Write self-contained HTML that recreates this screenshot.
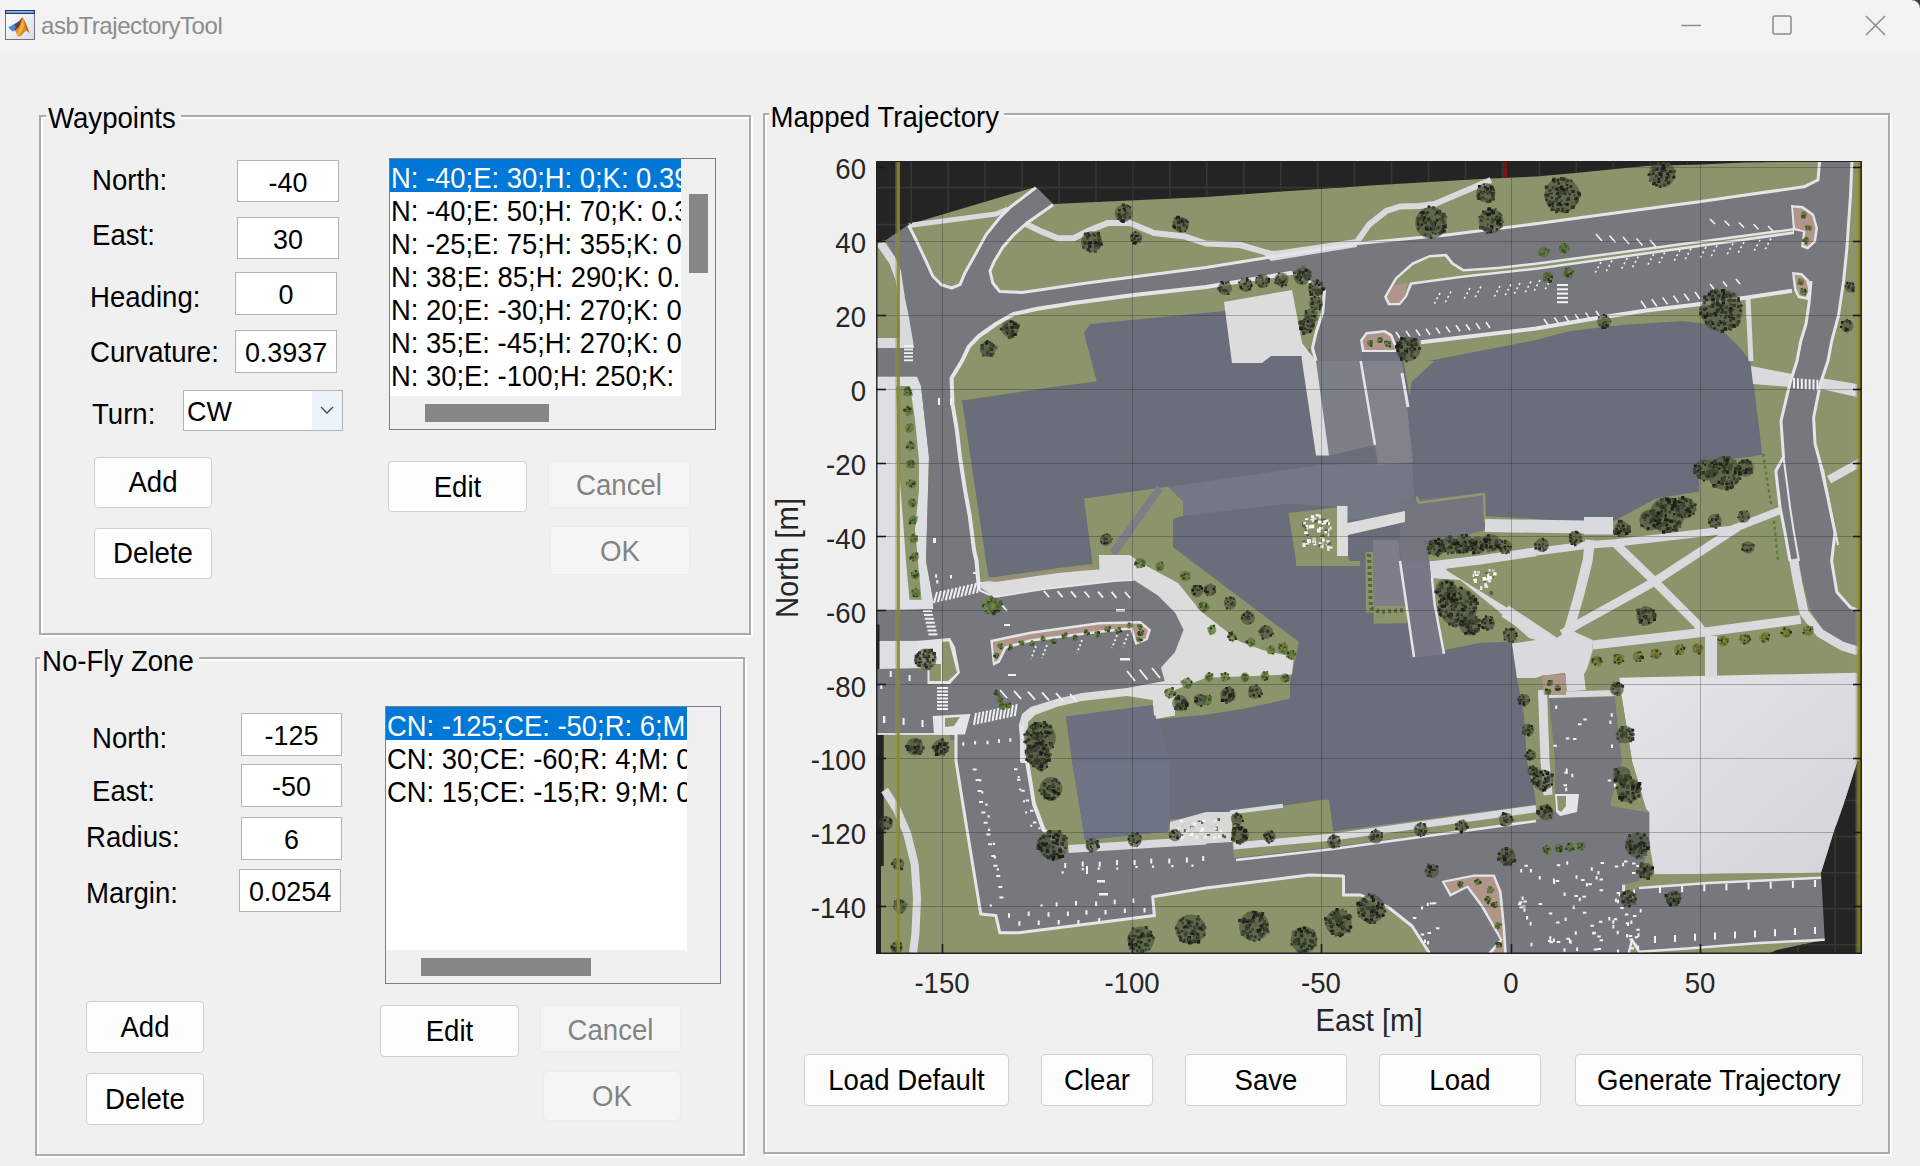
<!DOCTYPE html>
<html lang="en">
<head>
<meta charset="utf-8">
<title>asbTrajectoryTool</title>
<style>
*{box-sizing:border-box;margin:0;padding:0}
html,body{width:1920px;height:1166px;overflow:hidden;background:#f0f0f0;font-family:"Liberation Sans",Arial,sans-serif;color:#000}
.abs{position:absolute}
#titlebar{position:absolute;left:0;top:0;width:1920px;height:53px;background:#f3f3f3}
#title{position:absolute;left:41px;top:10px;font-size:24px;line-height:32px;color:#8c8c8c;letter-spacing:-0.42px}
.panel{position:absolute;border:2px solid #ababab;box-shadow:2px 2px 0 #fff, inset 2px 2px 0 #fff}
.ptitle{position:absolute;background:#f0f0f0;font-size:27.6px;line-height:30px;white-space:nowrap;padding:0 5px 0 2px}
.lbl{position:absolute;font-size:27.6px;line-height:30px;white-space:nowrap}
.edit{position:absolute;background:#fff;border:1px solid #b4b4b4;font-size:26.9px;text-align:center;white-space:nowrap;overflow:hidden}
.btn{position:absolute;background:#fdfdfd;border:1px solid #d0d0d0;border-radius:4px;font-size:27.6px;text-align:center;white-space:nowrap}
.btn.dis{background:#f5f5f5;border-color:#ececec;color:#838383}
.list{position:absolute;border:1px solid #7b7f8c;background:#f0f0f0;overflow:hidden}
.list .inner{position:absolute;left:0;top:0;background:#fff;overflow:hidden}
.list .row{height:33px;line-height:33px;font-size:27.4px;white-space:nowrap;padding-left:1px}
.list .row .t{position:relative;top:2px}
.list .row.sel{background:#0078d7;color:#fff}
.thumb{position:absolute;background:#868686}
.tick{position:absolute;font-size:27.6px;line-height:30px;color:#262626;white-space:nowrap}
.ytick{text-align:right;width:100px}
.xtick{text-align:center;width:120px}
.t{display:inline-block;transform:scaleY(1.06);transform-origin:50% 50%}
.lbl,.ptitle,.tick{transform:scaleY(1.06);transform-origin:0 50%}
</style>
</head>
<body>
<div id="titlebar">
  <svg class="abs" style="left:5px;top:10px" width="30" height="30" viewBox="0 0 30 30">
    <defs><linearGradient id="ig" x1="0" y1="0" x2="1" y2="1"><stop offset="0" stop-color="#ffffff"/><stop offset="1" stop-color="#dcdde0"/></linearGradient></defs>
    <rect x="0.5" y="0.5" width="29" height="29" fill="url(#ig)" stroke="#6f7488"/>
    <rect x="0" y="0" width="30" height="4" fill="#2b3566"/>
    <rect x="1.2" y="1" width="27.6" height="1.8" fill="#7fc0ee"/>
    <path d="M17.7 7.2 L21 14 L24.6 23 L21.5 20.5 L19 22.5 L16 26 L13 26.5 L11.5 23.5 L10 20.5 L14 17 Z" fill="#d98a2e"/>
    <path d="M18.5 8.5 L21 14 L24.6 23 L21.5 20.5 L20 14 Z" fill="#c0602a"/>
    <path d="M18 9 L19 16 L17 21 L13.5 25.7 L12 23 L15 18 L17 12 Z" fill="#f2b52a"/>
    <path d="M3.2 17.5 L15.6 10.2 L10.3 20 L7.5 21.5 Z" fill="#3d8fd6"/>
    <path d="M9 15 L15.6 10.2 L12 17.5 Z" fill="#2b5a8c"/>
    <path d="M16.5 8 L17.7 7.2 L14 17 L10 20.5 L9.2 20 L14.5 11 Z" fill="#8a2a1a"/>
  </svg>
  <div id="title">asbTrajectoryTool</div>
  <svg class="abs" style="left:1670px;top:8px" width="230" height="36" viewBox="0 0 230 36">
    <path d="M11.5 17.5 H31" stroke="#8b8b90" stroke-width="1.5" fill="none"/>
    <rect x="103" y="8" width="18" height="18" rx="2" fill="none" stroke="#8b8b90" stroke-width="1.5"/>
    <path d="M196 8 L215 27 M215 8 L196 27" stroke="#8b8b90" stroke-width="1.5" fill="none"/>
  </svg>
  <div class="abs" style="right:0;top:0;width:8px;height:8px;background:radial-gradient(circle at 0 100%, rgba(0,0,0,0) 7px, #3a3a55 8.5px)"></div>
</div>

<!-- WAYPOINTS PANEL -->
<div class="panel" style="left:39px;top:115px;width:712px;height:520px"></div>
<div class="ptitle" style="left:46px;top:103px">Waypoints</div>
<div class="lbl" style="left:92px;top:165px">North:</div>
<div class="lbl" style="left:92px;top:220px">East:</div>
<div class="lbl" style="left:90px;top:282px">Heading:</div>
<div class="lbl" style="left:90px;top:337px">Curvature:</div>
<div class="lbl" style="left:92px;top:399px">Turn:</div>
<div class="edit" style="left:237px;top:160px;width:102px;height:42px;line-height:42px"><span class="t">-40</span></div>
<div class="edit" style="left:237px;top:217px;width:102px;height:42px;line-height:42px"><span class="t">30</span></div>
<div class="edit" style="left:235px;top:272px;width:102px;height:43px;line-height:43px"><span class="t">0</span></div>
<div class="edit" style="left:235px;top:330px;width:102px;height:43px;line-height:43px"><span class="t">0.3937</span></div>
<div class="edit" style="left:183px;top:390px;width:160px;height:41px;line-height:41px;text-align:left;padding-left:3px"><span class="t">CW</span>
  <div class="abs" style="right:0;top:0;width:30px;height:39px;background:#edf3fa"></div>
  <svg class="abs" style="right:8px;top:15px" width="14" height="9" viewBox="0 0 14 9"><path d="M1 1 L7 7 L13 1" fill="none" stroke="#444" stroke-width="1.3"/></svg>
</div>
<div class="list" style="left:389px;top:158px;width:327px;height:272px">
  <div class="inner" style="width:291px;height:237px">
    <div class="row sel"><span class="t">N: -40;E: 30;H: 0;K: 0.3937;T: CW</span></div>
    <div class="row"><span class="t">N: -40;E: 50;H: 70;K: 0.3937;T: CW</span></div>
    <div class="row"><span class="t">N: -25;E: 75;H: 355;K: 0.3937;T: CW</span></div>
    <div class="row"><span class="t">N: 38;E: 85;H: 290;K: 0.3937;T: CW</span></div>
    <div class="row"><span class="t">N: 20;E: -30;H: 270;K: 0.3937;T: CW</span></div>
    <div class="row"><span class="t">N: 35;E: -45;H: 270;K: 0.3937;T: CW</span></div>
    <div class="row"><span class="t">N: 30;E: -100;H: 250;K: 0.3937;T: CW</span></div>
  </div>
  <div class="thumb" style="left:299px;top:35px;width:19px;height:79px"></div>
  <div class="thumb" style="left:35px;top:245px;width:124px;height:18px"></div>
</div>
<div class="btn" style="left:94px;top:457px;width:118px;height:51px;line-height:48px"><span class="t">Add</span></div>
<div class="btn" style="left:94px;top:528px;width:118px;height:51px;line-height:48px"><span class="t">Delete</span></div>
<div class="btn" style="left:388px;top:461px;width:139px;height:51px;line-height:49px"><span class="t">Edit</span></div>
<div class="btn dis" style="left:548px;top:461px;width:142px;height:47px;line-height:46px"><span class="t">Cancel</span></div>
<div class="btn dis" style="left:550px;top:526px;width:140px;height:49px;line-height:48px"><span class="t">OK</span></div>

<!-- NO-FLY ZONE PANEL -->
<div class="panel" style="left:35px;top:657px;width:710px;height:499px"></div>
<div class="ptitle" style="left:40px;top:646px">No-Fly Zone</div>
<div class="lbl" style="left:92px;top:723px">North:</div>
<div class="lbl" style="left:92px;top:776px">East:</div>
<div class="lbl" style="left:86px;top:822px">Radius:</div>
<div class="lbl" style="left:86px;top:878px">Margin:</div>
<div class="edit" style="left:241px;top:713px;width:101px;height:43px;line-height:43px"><span class="t">-125</span></div>
<div class="edit" style="left:241px;top:764px;width:101px;height:43px;line-height:43px"><span class="t">-50</span></div>
<div class="edit" style="left:241px;top:817px;width:101px;height:43px;line-height:43px"><span class="t">6</span></div>
<div class="edit" style="left:239px;top:869px;width:102px;height:43px;line-height:43px"><span class="t">0.0254</span></div>
<div class="list" style="left:385px;top:706px;width:336px;height:278px">
  <div class="inner" style="width:301px;height:243px">
    <div class="row sel"><span class="t">CN: -125;CE: -50;R: 6;M: 0.0254</span></div>
    <div class="row"><span class="t">CN: 30;CE: -60;R: 4;M: 0.0254</span></div>
    <div class="row"><span class="t">CN: 15;CE: -15;R: 9;M: 0.0254</span></div>
  </div>
  <div class="thumb" style="left:35px;top:251px;width:170px;height:18px"></div>
</div>
<div class="btn" style="left:86px;top:1001px;width:118px;height:52px;line-height:49px"><span class="t">Add</span></div>
<div class="btn" style="left:86px;top:1073px;width:118px;height:52px;line-height:49px"><span class="t">Delete</span></div>
<div class="btn" style="left:380px;top:1005px;width:139px;height:52px;line-height:49px"><span class="t">Edit</span></div>
<div class="btn dis" style="left:540px;top:1005px;width:141px;height:47px;line-height:47px"><span class="t">Cancel</span></div>
<div class="btn dis" style="left:543px;top:1071px;width:138px;height:50px;line-height:48px"><span class="t">OK</span></div>

<!-- MAPPED TRAJECTORY PANEL -->
<div class="panel" style="left:763px;top:113px;width:1127px;height:1041px"></div>
<div class="ptitle" style="left:768.5px;top:102px">Mapped Trajectory</div>

<!-- MAP -->
<svg id="map" class="abs" style="left:876px;top:161px" width="986" height="793" viewBox="876 161 986 793">
  <rect x="876" y="161" width="987" height="793" fill="#8c946c"/>
  <!--MAPSTART-->
<defs><linearGradient id="wg" x1="0" y1="0" x2="1" y2="1"><stop offset="0" stop-color="#e4e5e9"/><stop offset="1" stop-color="#d3d4d9"/></linearGradient><linearGradient id="og" x1="0" y1="0" x2="1" y2="0"><stop offset="0" stop-color="#9a9f50" stop-opacity="0"/><stop offset=".55" stop-color="#8e8e2c" stop-opacity=".75"/><stop offset="1" stop-color="#6c6c10"/></linearGradient><clipPath id="darkclip"><polygon points="876,161 1862,161 1862,162 1819.6,161.5 1744,162.4 1701,164.4 1646,166 1610,169.6 1575.5,173 1536,176.5 1481,179 1377.8,185 1274.7,192 1206,197 1053,204 1035.8,186.8 908.7,224.6 886,240 876,241.7"/><polygon points="1857.4,761 1843.7,804 1833.4,833 1821,872.7 1824.7,939.7 1776.6,950 1768,954 1863,954 1863,761"/></clipPath></defs>
<polygon points="1084.0,333.0 1090.0,324.0 1224.0,311.0 1310.0,303.0 1310.0,361.0 1428.0,361.0 1536.0,340.0 1570.0,331.0 1622.0,325.0 1682.0,321.0 1708.0,324.0 1725.0,332.8 1742.0,350.0 1750.0,361.0 1754.0,386.8 1759.4,429.7 1762.0,454.6 1749.0,457.0 1699.0,462.4 1699.0,491.6 1656.0,498.5 1613.0,521.6 1584.0,524.0 1556.6,522.5 1536.0,519.0 1485.0,516.0 1485.0,533.0 1429.0,548.0 1429.4,561.0 1444.0,650.0 1481.0,642.6 1512.0,641.8 1517.0,678.0 1524.0,715.6 1527.0,761.0 1534.0,790.0 1536.0,804.8 1333.0,831.4 1329.0,799.7 1323.0,799.7 1283.0,805.7 1230.0,812.5 1206.0,817.7 1170.0,819.4 1168.0,831.4 1084.8,840.0 1080.5,812.5 1072.0,761.0 1066.0,716.5 1154.5,705.0 1158.0,719.0 1206.0,714.8 1243.8,708.8 1290.0,698.5 1290.0,681.0 1295.0,660.7 1298.8,641.8 1206.0,572.0 1173.0,547.0 1173.0,519.0 1183.6,515.6 1183.6,502.0 1168.0,486.4 1151.0,489.0 1084.0,498.5 1090.8,550.0 1092.5,564.0 1058.0,568.0 996.0,577.0 988.6,577.0 986.0,561.0 962.0,400.5 979.0,398.0 1054.7,386.8 1096.8,381.6" fill="#6a6e7b"/>
<polygon points="1072.0,761.0 1170.0,761.0 1170.0,819.4 1168.0,831.4 1084.8,840.0 1080.5,812.5" fill="#6e7385"/>
<polygon points="1066.0,716.5 1154.5,705.0 1158.0,719.0 1170.0,761.0 1072.0,761.0" fill="#6c7080"/>
<polygon points="1170.0,486.7 1319.0,465.0 1412.0,462.0 1414.4,498.0 1401.5,501.0 1400.0,516.0 1349.0,520.0 1340.0,507.0 1288.0,503.5 1183.0,516.0 1183.6,502.0" fill="#747884"/>
<polygon points="1401.0,500.0 1484.0,494.0 1485.0,540.0 1424.0,540.0 1444.0,652.7 1414.4,657.8 1399.0,544.6 1401.0,520.0" fill="#73767f"/>
<polygon points="1288.5,513.0 1340.0,507.0 1349.0,561.0 1360.0,561.0 1360.0,566.0 1296.0,566.0 1296.0,561.0" fill="#8c946c"/>
<polygon points="1365.5,552.0 1373.0,552.0 1374.0,605.7 1407.0,605.7 1407.0,623.0 1373.6,623.7 1373.6,612.5 1366.0,612.5" fill="#8c946c"/>
<polygon points="1429.4,561.0 1536.0,561.0 1536.0,641.8 1512.0,641.8 1481.0,642.6 1444.0,650.0" fill="#8c946c"/>
<polygon points="1426.0,545.0 1485.0,530.0 1536.0,530.0 1536.0,561.0 1429.0,561.0" fill="#8c946c"/>
<polyline points="1416.5,496.7 1419.0,502.7 1484.0,494.0 1485.0,522.5" fill="none" stroke="#8f9a6a" stroke-width="2.5" stroke-linejoin="round"/>
<polyline points="1160.0,488.0 1113.0,553.4" fill="none" stroke="#7c7f88" stroke-width="8" stroke-linejoin="round"/>
<polygon points="1403.6,361.0 1434.5,361.0 1412.0,381.6 1409.6,395.4 1406.0,374.7" fill="#8c946c"/>
<polygon points="976.0,583.0 996.0,580.0 1058.0,571.0 1099.4,569.6 1099.0,555.0 1130.0,555.0 1139.0,562.0 1178.0,583.0 1201.0,611.5 1240.0,641.8 1262.7,650.0 1293.7,657.0 1292.0,674.4 1206.0,677.8 1175.0,690.0 1175.0,715.6 1154.0,715.6 1152.7,700.0 1127.0,696.0 1082.0,701.0 1058.0,706.5 1035.0,715.0 1028.0,722.0 1026.0,761.0 1018.0,761.0 1015.0,726.0 976.0,726.0" fill="#dddcdc"/>
<polygon points="876.0,376.5 917.0,376.5 921.0,386.0 929.0,457.0 926.0,561.0 933.0,599.0 933.0,609.0 876.0,610.0" fill="#dedfe3"/>
<polygon points="896.0,386.0 910.0,386.0 915.0,420.0 919.0,460.0 919.0,490.0 915.0,530.0 918.0,561.0 921.5,599.7 909.5,599.7 906.0,561.0 903.0,520.0 899.0,470.0" fill="#8c946c"/>
<polygon points="876.0,641.0 917.0,641.0 917.0,668.0 876.0,669.0" fill="#dedfe3"/>
<polygon points="908.7,224.6 886.0,240.0 895.0,257.0 901.0,271.0 905.0,298.5 908.6,315.6 913.0,341.4 915.0,361.0 917.0,376.5 921.0,386.0 929.0,457.0 926.0,561.0 933.0,599.0 933.0,611.0 981.0,611.0 981.0,588.0 976.5,561.0 974.0,550.0 969.7,515.6 965.0,490.0 960.0,457.0 956.8,429.7 952.5,404.0 951.6,378.0 962.0,361.0 968.8,346.6 979.0,336.0 996.0,324.0 1013.5,314.0 1037.5,308.8 1070.0,303.6 1133.7,295.0 1206.0,287.0 1206.0,267.5 1087.0,283.0 1022.0,292.4 999.7,291.6 992.8,283.0 990.0,271.0 994.6,260.7 1003.0,246.9 1013.5,234.9 1027.0,222.9 1053.0,204.8 1035.8,186.8 1010.0,207.4 999.7,217.7 986.0,234.9 975.7,253.8 965.0,272.7 960.0,284.7 951.6,288.0 941.3,284.7 932.7,276.0 925.8,260.7 917.0,241.8" fill="#76787e"/>
<polygon points="876.0,348.0 917.0,348.0 917.0,376.5 876.0,376.5" fill="#76787e"/>
<polygon points="876.0,611.0 935.0,609.0 935.0,640.0 876.0,641.0" fill="#76787e"/>
<polygon points="876.0,669.0 960.0,669.0 960.0,733.0 876.0,733.0" fill="#76787e"/>
<polygon points="933.0,609.0 981.0,588.0 994.6,597.0 1044.0,589.0 1116.6,580.8 1133.8,580.0 1157.9,595.4 1175.0,612.5 1183.6,629.7 1175.0,652.0 1161.0,667.5 1164.7,681.0 1127.0,688.0 1082.0,693.0 1058.0,698.5 1030.7,707.0 1022.0,714.0 1018.6,726.0 1020.0,740.0 950.0,740.0 950.0,684.0 960.0,672.7 955.0,647.0 950.0,638.0 933.0,640.0" fill="#76787e"/>
<polygon points="956.0,733.0 1018.6,726.0 1022.0,761.0 1027.0,761.0 1034.0,804.0 1043.6,829.7 1065.0,852.0 1206.0,841.8 1206.0,888.0 1152.7,896.7 1154.4,915.6 1099.4,922.5 1018.7,932.8 999.8,932.8 996.0,915.6 980.8,914.0 967.0,829.7 956.0,761.0" fill="#76787e"/>
<polygon points="1206.0,842.0 1232.0,842.0 1234.0,858.0 1333.0,847.0 1536.0,820.0 1555.0,812.0 1555.0,761.0 1549.0,698.5 1615.0,696.7 1618.5,733.0 1622.0,761.0 1610.0,805.7 1649.4,812.5 1649.4,843.5 1639.0,881.0 1639.0,888.0 1708.0,883.0 1821.0,877.8 1824.7,939.7 1759.0,943.0 1690.6,948.3 1639.0,951.7 1632.0,939.7 1628.8,953.0 1429.4,953.0 1412.0,926.0 1388.0,907.0 1360.7,895.0 1343.5,895.0 1343.5,876.0 1309.0,875.0 1206.0,889.0" fill="#76787e"/>
<polygon points="1206.0,267.5 1271.0,257.0 1357.0,243.5 1446.6,234.9 1536.0,223.7 1618.5,212.5 1701.0,201.4 1742.0,195.4 1804.0,186.8 1818.0,180.0 1819.6,161.0 1852.0,161.0 1850.5,195.4 1847.0,247.0 1843.6,281.0 1838.5,315.6 1831.6,341.4 1828.0,361.0 1820.5,383.0 1813.6,417.7 1815.0,443.5 1819.6,460.6 1828.0,498.5 1835.0,532.8 1831.6,561.0 1836.8,592.0 1850.5,607.4 1857.4,610.0 1857.4,648.0 1842.0,644.0 1822.0,630.0 1810.0,609.0 1803.0,583.3 1799.0,561.0 1790.0,561.0 1785.0,532.8 1780.0,507.0 1775.8,471.0 1783.5,457.0 1781.0,421.0 1790.0,383.0 1797.0,361.0 1800.7,341.4 1806.0,324.0 1809.0,303.6 1811.0,281.0 1792.0,290.7 1747.4,297.6 1690.7,305.3 1646.0,310.5 1591.0,319.0 1536.0,328.5 1420.8,342.3 1400.0,345.0 1402.0,361.0 1413.0,462.0 1378.0,465.0 1375.0,445.0 1329.0,455.5 1316.0,361.0 1312.5,348.0 1316.0,332.8 1322.8,312.0 1324.6,289.9 1292.0,272.7 1206.0,287.0" fill="#76787e"/>
<polygon points="1316.0,361.0 1361.0,361.0 1375.0,445.0 1329.0,455.5" fill="#7c7f87"/>
<polygon points="1361.0,361.0 1402.0,361.0 1413.0,462.0 1378.0,465.0 1375.0,445.0" fill="#80838c"/>
<polygon points="1375.0,561.0 1429.4,561.0 1444.0,654.6 1414.0,657.0 1400.0,561.0" fill="#767985"/>
<polygon points="1373.0,540.0 1398.0,540.0 1406.0,605.7 1374.0,605.7" fill="#7c7f89"/>
<polyline points="1400.0,561.0 1414.0,657.0" fill="none" stroke="#e4e5e8" stroke-width="2.5" stroke-linejoin="round"/>
<polyline points="1432.0,578.0 1434.6,604.0 1444.0,653.8" fill="none" stroke="#e4e5e8" stroke-width="2.5" stroke-linejoin="round"/>
<polyline points="1360.7,361.0 1375.0,445.0" fill="none" stroke="#e4e5e8" stroke-width="2.5" stroke-linejoin="round"/>
<polyline points="1402.0,373.0 1408.0,407.0" fill="none" stroke="#e4e5e8" stroke-width="3" stroke-linejoin="round"/>
<polygon points="1364.0,351.7 1398.0,351.7 1402.0,361.0 1361.0,361.0" fill="#6f7380"/>
<polygon points="876.0,161.0 1862.0,161.0 1862.0,162.0 1819.6,161.5 1744.0,162.4 1701.0,164.4 1646.0,166.0 1610.0,169.6 1575.5,173.0 1536.0,176.5 1481.0,179.0 1377.8,185.0 1274.7,192.0 1206.0,197.0 1053.0,204.0 1035.8,186.8 908.7,224.6 886.0,240.0 876.0,241.7" fill="#242424"/>
<polygon points="1857.4,761.0 1843.7,804.0 1833.4,833.0 1821.0,872.7 1824.7,939.7 1776.6,950.0 1768.0,954.0 1863.0,954.0 1863.0,761.0" fill="#242424"/>
<rect x="876.0" y="624.6" width="3.5" height="44.5" fill="#242424"/>
<rect x="876.0" y="735.0" width="7.7" height="131.0" fill="#242424"/>
<rect x="876.0" y="866.0" width="5.0" height="88.0" fill="#242424"/>
<rect x="1503.0" y="161.0" width="4.0" height="17.0" fill="#7a1515"/>
<polygon points="1290.0,282.0 1322.0,290.0 1322.8,312.0 1316.0,332.8 1312.5,348.0 1306.0,350.0 1302.0,343.0 1297.0,315.6 1292.0,290.0" fill="#8c946c"/>
<polygon points="1224.0,302.0 1292.0,289.9 1297.0,315.6 1302.0,343.0 1302.0,356.0 1271.0,356.0 1262.0,363.0 1232.0,363.0" fill="#dcdcdc"/>
<polygon points="1300.0,335.0 1302.0,343.0 1316.0,361.0 1329.0,455.5 1316.0,455.5 1302.0,361.0" fill="#dcdcdc"/>
<polygon points="1619.4,677.8 1857.4,672.7 1857.4,761.0 1843.7,804.0 1833.4,833.0 1821.0,872.7 1654.6,874.4 1649.4,843.5 1649.4,812.5 1646.0,809.0 1632.0,761.0 1622.0,698.5" fill="url(#wg)"/>
<polygon points="1615.0,696.7 1622.0,698.5 1632.0,761.0 1646.0,809.0 1649.4,812.5 1610.0,805.7 1622.0,761.0 1618.5,733.0" fill="#8c946c"/>
<polygon points="878.0,243.5 884.6,241.8 895.0,257.0 901.0,271.0 905.0,298.5 908.6,315.6 913.0,341.4 914.0,348.0 876.0,348.0 876.0,338.0 900.0,338.0 900.0,332.8 898.0,298.5 895.8,281.0 889.7,264.0 878.0,247.0" fill="#d9dade"/>
<polyline points="908.7,225.4 996.0,214.0 1008.0,209.0" fill="none" stroke="#d9dade" stroke-width="5" stroke-linejoin="round"/>
<polyline points="1025.5,223.7 1041.0,231.4 1058.0,238.3 1073.6,238.3 1090.8,229.7 1108.0,222.9 1130.0,222.9 1154.0,233.0 1185.0,236.6 1206.0,243.5 1240.0,245.0 1271.0,253.8 1290.0,254.0" fill="none" stroke="#d9dade" stroke-width="6" stroke-linejoin="round"/>
<polygon points="1262.0,253.0 1357.0,239.0 1357.0,247.0 1271.0,261.0" fill="#d9dade"/>
<polyline points="1357.0,241.8 1369.0,224.6 1386.5,210.8 1400.0,206.5 1419.0,206.0 1434.6,204.0 1491.0,180.0" fill="none" stroke="#d9dade" stroke-width="6" stroke-linejoin="round"/>
<polygon points="1384.0,296.7 1395.0,277.8 1412.0,262.4 1429.4,255.0 1446.6,253.8 1453.5,262.4 1463.8,269.0 1498.0,266.7 1536.0,262.4 1794.0,228.0 1794.0,234.0 1536.0,270.0 1463.8,277.8 1412.0,284.7 1407.0,296.7 1400.0,305.3 1388.0,305.3" fill="#e4e5e8"/>
<polygon points="1387.0,296.7 1397.0,279.0 1413.0,265.0 1429.4,257.5 1445.0,256.5 1451.5,264.5 1463.0,271.5 1498.0,269.2 1536.0,264.9 1793.0,230.5 1793.0,231.5 1536.0,267.5 1463.8,275.3 1410.0,282.5 1405.0,295.5 1399.0,303.0 1390.0,303.0" fill="#8c946c"/>
<polygon points="1387.0,296.7 1393.0,286.0 1407.0,283.0 1405.0,295.5 1399.0,303.0 1390.0,303.0" fill="#b0968a"/>
<polygon points="1360.0,340.0 1366.0,332.0 1385.0,330.0 1392.0,334.0 1397.0,346.0 1397.0,352.0 1362.0,352.0" fill="#e4e5e8"/>
<polygon points="1362.5,341.0 1367.0,334.5 1384.0,332.5 1390.0,336.0 1394.5,347.0 1394.5,350.0 1364.5,350.0" fill="#b0968a"/>
<polygon points="1791.0,205.0 1803.0,206.0 1814.0,214.0 1818.0,228.0 1816.0,242.0 1808.0,249.5 1801.0,247.0 1803.0,232.0 1793.0,230.0" fill="#e4e5e8"/>
<polygon points="1793.0,207.5 1802.0,208.5 1812.0,215.5 1815.5,228.0 1813.5,241.0 1807.5,246.5 1803.5,245.0 1805.5,231.0 1795.0,228.0" fill="#b0968a"/>
<polygon points="1792.0,272.0 1802.0,273.0 1809.0,280.0 1811.0,291.0 1808.0,300.0 1798.0,298.0 1794.0,290.0" fill="#e4e5e8"/>
<polygon points="1794.5,274.5 1801.0,275.5 1806.5,281.0 1808.5,291.0 1806.0,297.0 1799.5,295.5 1796.5,289.0" fill="#b0968a"/>
<polyline points="1748.0,298.5 1751.0,361.0" fill="none" stroke="#d9dade" stroke-width="5" stroke-linejoin="round"/>
<polygon points="1751.0,366.0 1792.0,374.0 1791.0,387.0 1753.0,384.0" fill="#d9dade"/>
<polygon points="1821.0,378.0 1857.0,384.0 1857.0,397.0 1821.0,389.0" fill="#d9dade"/>
<polyline points="1861.0,462.0 1829.0,479.6" fill="none" stroke="#d9dade" stroke-width="8.5" stroke-linejoin="round"/>
<rect x="1793.0" y="378.0" width="2.0" height="10.5" fill="#f0f0f2"/>
<rect x="1796.9" y="378.3" width="2.0" height="10.5" fill="#f0f0f2"/>
<rect x="1800.8" y="378.6" width="2.0" height="10.5" fill="#f0f0f2"/>
<rect x="1804.7" y="378.9" width="2.0" height="10.5" fill="#f0f0f2"/>
<rect x="1808.6" y="379.2" width="2.0" height="10.5" fill="#f0f0f2"/>
<rect x="1812.5" y="379.5" width="2.0" height="10.5" fill="#f0f0f2"/>
<rect x="1816.4" y="379.8" width="2.0" height="10.5" fill="#f0f0f2"/>
<polyline points="1485.0,525.5 1613.0,527.5" fill="none" stroke="#d9dade" stroke-width="13" stroke-linejoin="round"/>
<polygon points="1584.0,517.0 1613.0,517.0 1613.0,534.5 1584.0,534.5" fill="#d9dade"/>
<polyline points="1536.0,551.7 1587.6,545.0 1615.0,543.0 1697.0,533.5 1731.5,529.4 1780.0,510.5" fill="none" stroke="#d9dade" stroke-width="7.5" stroke-linejoin="round"/>
<polyline points="1590.0,540.0 1587.6,561.0 1579.0,595.4 1568.0,633.0" fill="none" stroke="#d9dade" stroke-width="10" stroke-linejoin="round"/>
<polyline points="1614.9,543.0 1654.7,581.5 1697.2,624.0 1702.0,631.0" fill="none" stroke="#d9dade" stroke-width="8.5" stroke-linejoin="round"/>
<polyline points="1738.0,527.0 1690.6,558.0 1654.7,581.5 1580.6,622.7 1562.0,634.0" fill="none" stroke="#d9dade" stroke-width="8.5" stroke-linejoin="round"/>
<polyline points="1592.7,645.0 1697.6,633.0 1800.7,619.4" fill="none" stroke="#d9dade" stroke-width="9" stroke-linejoin="round"/>
<polyline points="1711.0,636.0 1711.0,678.0" fill="none" stroke="#d9dade" stroke-width="12" stroke-linejoin="round"/>
<polygon points="1536.0,633.0 1556.6,638.0 1570.0,629.7 1592.7,640.0 1592.7,650.0 1587.6,667.5 1584.0,674.4 1585.8,690.0 1567.0,691.6 1565.0,672.7 1541.0,676.0 1536.0,678.0" fill="#d9dade"/>
<polygon points="1512.0,643.5 1536.0,640.0 1536.0,678.0 1517.0,678.0" fill="#d9dade"/>
<polyline points="1542.5,690.0 1545.0,761.0 1548.0,795.0" fill="none" stroke="#d9dade" stroke-width="9" stroke-linejoin="round"/>
<polyline points="1549.0,695.0 1616.0,693.0" fill="none" stroke="#d9dade" stroke-width="6" stroke-linejoin="round"/>
<polygon points="1430.0,561.0 1446.0,563.0 1446.6,570.5 1512.0,610.8 1536.0,626.0 1536.0,640.0 1529.0,638.0 1498.0,610.8 1460.0,580.0 1431.0,578.0" fill="#d9dade"/>
<polyline points="1430.0,566.0 1480.0,560.0 1536.0,551.7" fill="none" stroke="#d9dade" stroke-width="9" stroke-linejoin="round"/>
<polyline points="1505.0,611.0 1553.0,643.0" fill="none" stroke="#d9dade" stroke-width="13" stroke-linejoin="round"/>
<polyline points="1793.5,559.0 1797.5,581.6 1804.0,612.5 1820.0,633.0 1842.0,646.0 1858.0,651.0" fill="none" stroke="#d9dade" stroke-width="9" stroke-linejoin="round"/>
<polyline points="1068.5,849.0 1206.0,840.5" fill="none" stroke="#d9dade" stroke-width="8" stroke-linejoin="round"/>
<polyline points="1233.5,846.0 1333.0,837.0 1536.0,808.7" fill="none" stroke="#d9dade" stroke-width="7" stroke-linejoin="round"/>
<polyline points="1236.0,860.0 1333.0,849.0 1536.0,821.0" fill="none" stroke="#e4e5e8" stroke-width="2.5" stroke-linejoin="round"/>
<polygon points="1206.0,812.0 1232.0,812.0 1232.0,842.0 1206.0,843.5 1170.0,843.0 1170.0,822.0" fill="#d8d8d6"/>
<polygon points="1231.8,814.0 1283.0,806.5 1283.0,809.0 1323.0,801.0 1329.0,801.0 1333.0,833.0 1233.5,842.0" fill="#8c946c"/>
<polyline points="1230.0,812.5 1283.0,805.7" fill="none" stroke="#d9dade" stroke-width="4" stroke-linejoin="round"/>
<polygon points="1152.7,695.0 1175.0,691.0 1175.0,715.6 1156.0,719.0" fill="#dddcdc"/>
<polyline points="884.6,790.0 896.6,809.0 907.0,833.0 914.7,864.0 917.0,898.5 915.5,932.8 913.0,953.0" fill="none" stroke="#d9dade" stroke-width="8" stroke-linejoin="round"/>
<rect x="876.0" y="733.0" width="80.0" height="2.0" fill="#d9dade"/>
<polygon points="917.0,641.0 950.0,638.0 955.0,647.0 960.0,672.7 950.0,684.0 927.5,684.0 927.5,669.0 917.0,667.5" fill="#e4e5e8"/>
<polygon points="942.0,641.8 949.0,641.5 957.0,672.7 948.0,681.0 942.0,681.0" fill="#8c946c"/>
<polygon points="919.0,664.0 941.0,664.0 941.0,681.0 929.5,681.0 929.5,668.0" fill="#8c946c"/>
<polygon points="932.7,716.0 970.5,714.0 965.0,734.6 934.0,734.6" fill="#e4e5e8"/>
<polygon points="945.0,718.0 960.0,717.0 954.0,726.0 945.0,727.0" fill="#8c946c"/>
<polyline points="984.0,579.0 996.0,580.5 1058.0,571.5 1096.0,568.0" fill="none" stroke="#9a9078" stroke-width="3" stroke-linejoin="round"/>
<polygon points="993.0,665.8 990.3,640.0 1030.7,631.4 1099.4,622.0 1140.7,621.0 1151.0,629.7 1147.6,640.0 1135.5,645.0 1130.4,629.7 1099.4,633.0 1030.7,641.8 1006.6,648.6 999.8,662.4" fill="#e4e5e8"/>
<polygon points="994.5,662.0 992.8,642.0 1031.0,634.0 1099.4,624.6 1139.5,623.6 1148.0,630.0 1145.5,638.5 1137.0,642.0 1132.5,627.0 1099.4,630.4 1030.5,639.2 1004.8,646.5 998.0,660.0" fill="#b0968a"/>
<polygon points="1441.5,881.0 1474.0,874.4 1494.7,874.4 1501.6,891.6 1505.0,926.0 1506.8,953.0 1487.9,953.0 1500.0,939.7 1481.0,907.0 1467.0,888.0 1450.0,896.7" fill="#e4e5e8"/>
<polygon points="1444.5,882.5 1474.0,876.8 1493.0,876.8 1499.0,892.0 1502.5,926.0 1504.0,953.0 1492.0,953.0 1502.5,940.0 1483.5,906.0 1468.0,885.5 1451.0,893.5" fill="#b0968a"/>
<polygon points="1542.0,675.0 1566.0,675.0 1566.0,695.0 1544.0,695.0" fill="#b0968a"/>
<polygon points="1555.0,794.0 1579.0,794.0 1577.0,812.0 1560.0,816.0 1556.0,812.0" fill="#e4e5e8"/>
<polygon points="1557.0,796.0 1566.0,796.0 1566.0,806.0 1561.0,812.0 1558.0,810.0" fill="#8c946c"/>
<polygon points="1623.6,884.7 1639.0,881.0 1654.6,874.4 1821.0,872.7 1821.0,877.8 1708.0,883.0 1639.0,888.0 1623.6,893.0" fill="#8c946c"/>
<polyline points="908.7,225.4 917.0,241.8 925.8,260.7 932.7,276.0 941.3,284.7 951.6,288.0 960.0,284.7 965.0,272.7 975.7,253.8 986.0,234.9 999.7,217.7 1010.0,207.4 1035.8,187.6" fill="none" stroke="#e4e5e8" stroke-width="3" stroke-linejoin="round"/>
<polyline points="1053.0,204.8 1027.0,222.9 1013.5,234.9 1003.0,246.9 994.6,260.7 990.0,271.0 992.8,283.0 999.7,291.6 1022.0,292.4 1087.0,283.0 1206.0,267.5 1271.0,257.0 1357.0,243.5 1446.6,234.9 1536.0,223.7 1618.5,212.5 1701.0,201.4 1742.0,195.4 1804.0,186.8 1818.0,180.0 1819.6,161.0" fill="none" stroke="#e4e5e8" stroke-width="3" stroke-linejoin="round"/>
<polyline points="1292.0,272.7 1206.0,287.0 1133.7,295.0 1070.0,303.6 1037.5,308.8 1013.5,314.0 996.0,324.0 979.0,336.0 968.8,346.6 962.0,361.0 951.6,378.0 952.5,404.0 956.8,429.7 960.0,457.0 965.0,490.0 969.7,515.6 974.0,550.0 976.5,561.0 979.0,590.0" fill="none" stroke="#e4e5e8" stroke-width="4" stroke-linejoin="round"/>
<polyline points="1292.0,272.7 1324.6,289.9 1322.8,312.0 1316.0,332.8 1312.5,348.0 1316.0,361.0" fill="none" stroke="#e4e5e8" stroke-width="3" stroke-linejoin="round"/>
<polyline points="1852.0,161.0 1850.5,195.4 1847.0,247.0 1843.6,281.0 1838.5,315.6 1831.6,341.4 1828.0,361.0 1820.5,383.0 1813.6,417.7 1815.0,443.5 1819.6,460.6 1828.0,498.5 1835.0,532.8 1831.6,561.0 1836.8,592.0 1850.5,607.4 1857.4,610.0" fill="none" stroke="#e4e5e8" stroke-width="3" stroke-linejoin="round"/>
<polyline points="1811.0,281.0 1809.0,303.6 1806.0,324.0 1800.7,341.4 1797.0,361.0 1790.0,383.0 1781.0,421.0 1783.5,457.0 1775.8,471.0 1780.0,507.0 1785.0,532.8 1790.0,561.0" fill="none" stroke="#e4e5e8" stroke-width="3" stroke-linejoin="round"/>
<polyline points="1783.5,457.0 1790.0,507.0 1794.0,532.8 1799.0,561.0" fill="none" stroke="#e4e5e8" stroke-width="2" stroke-linejoin="round"/>
<polyline points="1819.6,460.6 1823.0,470.0 1830.0,507.0 1838.0,545.0" fill="none" stroke="#e4e5e8" stroke-width="2" stroke-linejoin="round"/>
<polyline points="1792.0,290.7 1747.4,297.6 1690.7,305.3 1646.0,310.5 1591.0,319.0 1536.0,328.5 1420.8,342.3" fill="none" stroke="#e4e5e8" stroke-width="4" stroke-linejoin="round"/>
<polyline points="979.0,590.0 994.6,597.0 1044.0,589.0 1116.6,580.8 1133.8,580.0" fill="none" stroke="#e4e5e8" stroke-width="2" stroke-linejoin="round"/>
<polyline points="956.0,733.0 956.0,761.0 967.0,829.7 980.8,914.0 996.0,915.6 999.8,932.8 1018.7,932.8 1099.4,922.5 1154.4,915.6 1152.7,896.7 1206.0,888.0 1309.0,875.0 1343.5,876.0 1343.5,895.0 1360.7,895.0 1388.0,907.0 1412.0,926.0 1429.4,953.0" fill="none" stroke="#e4e5e8" stroke-width="3" stroke-linejoin="round"/>
<polyline points="1022.0,726.0 1022.0,761.0 1027.0,761.0 1034.0,804.0 1043.6,829.7 1065.0,852.0" fill="none" stroke="#e4e5e8" stroke-width="4" stroke-linejoin="round"/>
<polyline points="1639.0,888.0 1708.0,883.0 1821.0,877.8" fill="none" stroke="#e4e5e8" stroke-width="2.5" stroke-linejoin="round"/>
<polyline points="1628.8,953.0 1632.0,939.7 1639.0,951.7 1690.6,948.3 1759.0,943.0 1824.7,939.7" fill="none" stroke="#e4e5e8" stroke-width="2.5" stroke-linejoin="round"/>
<polyline points="1623.6,884.7 1623.6,893.0" fill="none" stroke="#e4e5e8" stroke-width="3" stroke-linejoin="round"/>
<line x1="1710.0" y1="219.0" x2="1715.0" y2="224.0" stroke="#f2f2f4" stroke-width="1.6"/>
<line x1="1724.5" y1="220.8" x2="1729.5" y2="225.8" stroke="#f2f2f4" stroke-width="1.6"/>
<line x1="1739.0" y1="222.5" x2="1744.0" y2="227.5" stroke="#f2f2f4" stroke-width="1.6"/>
<line x1="1753.5" y1="224.2" x2="1758.5" y2="229.2" stroke="#f2f2f4" stroke-width="1.6"/>
<line x1="1768.0" y1="226.0" x2="1773.0" y2="231.0" stroke="#f2f2f4" stroke-width="1.6"/>
<line x1="1596.0" y1="234.0" x2="1602.0" y2="241.0" stroke="#f2f2f4" stroke-width="1.6"/>
<line x1="1609.5" y1="235.5" x2="1615.5" y2="242.5" stroke="#f2f2f4" stroke-width="1.6"/>
<line x1="1623.0" y1="237.0" x2="1629.0" y2="244.0" stroke="#f2f2f4" stroke-width="1.6"/>
<line x1="1636.5" y1="238.5" x2="1642.5" y2="245.5" stroke="#f2f2f4" stroke-width="1.6"/>
<line x1="1650.0" y1="240.0" x2="1656.0" y2="247.0" stroke="#f2f2f4" stroke-width="1.6"/>
<line x1="1646.0" y1="308.0" x2="1641.0" y2="301.0" stroke="#f2f2f4" stroke-width="1.6"/>
<line x1="1656.8" y1="306.2" x2="1651.8" y2="299.2" stroke="#f2f2f4" stroke-width="1.6"/>
<line x1="1667.6" y1="304.4" x2="1662.6" y2="297.4" stroke="#f2f2f4" stroke-width="1.6"/>
<line x1="1678.4" y1="302.6" x2="1673.4" y2="295.6" stroke="#f2f2f4" stroke-width="1.6"/>
<line x1="1689.2" y1="300.8" x2="1684.2" y2="293.8" stroke="#f2f2f4" stroke-width="1.6"/>
<line x1="1700.0" y1="299.0" x2="1695.0" y2="292.0" stroke="#f2f2f4" stroke-width="1.6"/>
<line x1="1714.0" y1="289.0" x2="1710.0" y2="284.0" stroke="#f2f2f4" stroke-width="1.6"/>
<line x1="1727.0" y1="286.5" x2="1723.0" y2="281.5" stroke="#f2f2f4" stroke-width="1.6"/>
<line x1="1740.0" y1="284.0" x2="1736.0" y2="279.0" stroke="#f2f2f4" stroke-width="1.6"/>
<line x1="1548.0" y1="325.0" x2="1544.0" y2="319.0" stroke="#f2f2f4" stroke-width="1.6"/>
<line x1="1558.4" y1="323.4" x2="1554.4" y2="317.4" stroke="#f2f2f4" stroke-width="1.6"/>
<line x1="1568.8" y1="321.8" x2="1564.8" y2="315.8" stroke="#f2f2f4" stroke-width="1.6"/>
<line x1="1579.2" y1="320.2" x2="1575.2" y2="314.2" stroke="#f2f2f4" stroke-width="1.6"/>
<line x1="1589.6" y1="318.6" x2="1585.6" y2="312.6" stroke="#f2f2f4" stroke-width="1.6"/>
<line x1="1600.0" y1="317.0" x2="1596.0" y2="311.0" stroke="#f2f2f4" stroke-width="1.6"/>
<line x1="1400.0" y1="338.0" x2="1396.0" y2="332.0" stroke="#f2f2f4" stroke-width="1.6"/>
<line x1="1410.0" y1="336.9" x2="1406.0" y2="330.9" stroke="#f2f2f4" stroke-width="1.6"/>
<line x1="1420.0" y1="335.8" x2="1416.0" y2="329.8" stroke="#f2f2f4" stroke-width="1.6"/>
<line x1="1430.0" y1="334.7" x2="1426.0" y2="328.7" stroke="#f2f2f4" stroke-width="1.6"/>
<line x1="1440.0" y1="333.6" x2="1436.0" y2="327.6" stroke="#f2f2f4" stroke-width="1.6"/>
<line x1="1450.0" y1="332.4" x2="1446.0" y2="326.4" stroke="#f2f2f4" stroke-width="1.6"/>
<line x1="1460.0" y1="331.3" x2="1456.0" y2="325.3" stroke="#f2f2f4" stroke-width="1.6"/>
<line x1="1470.0" y1="330.2" x2="1466.0" y2="324.2" stroke="#f2f2f4" stroke-width="1.6"/>
<line x1="1480.0" y1="329.1" x2="1476.0" y2="323.1" stroke="#f2f2f4" stroke-width="1.6"/>
<line x1="1490.0" y1="328.0" x2="1486.0" y2="322.0" stroke="#f2f2f4" stroke-width="1.6"/>
<line x1="1601.0" y1="262.0" x2="1594.0" y2="275.0" stroke="#f2f2f4" stroke-width="1.6" stroke-dasharray="2 3"/>
<line x1="1612.0" y1="260.5" x2="1605.0" y2="273.5" stroke="#f2f2f4" stroke-width="1.6" stroke-dasharray="2 3"/>
<line x1="1627.3" y1="258.0" x2="1620.3" y2="271.0" stroke="#f2f2f4" stroke-width="1.6" stroke-dasharray="2 3"/>
<line x1="1638.3" y1="256.5" x2="1631.3" y2="269.5" stroke="#f2f2f4" stroke-width="1.6" stroke-dasharray="2 3"/>
<line x1="1653.7" y1="254.0" x2="1646.7" y2="267.0" stroke="#f2f2f4" stroke-width="1.6" stroke-dasharray="2 3"/>
<line x1="1664.7" y1="252.5" x2="1657.7" y2="265.5" stroke="#f2f2f4" stroke-width="1.6" stroke-dasharray="2 3"/>
<line x1="1680.0" y1="250.0" x2="1673.0" y2="263.0" stroke="#f2f2f4" stroke-width="1.6" stroke-dasharray="2 3"/>
<line x1="1691.0" y1="248.5" x2="1684.0" y2="261.5" stroke="#f2f2f4" stroke-width="1.6" stroke-dasharray="2 3"/>
<line x1="1706.0" y1="247.0" x2="1699.0" y2="260.0" stroke="#f2f2f4" stroke-width="1.6" stroke-dasharray="2 3"/>
<line x1="1717.0" y1="245.5" x2="1710.0" y2="258.5" stroke="#f2f2f4" stroke-width="1.6" stroke-dasharray="2 3"/>
<line x1="1733.0" y1="243.5" x2="1726.0" y2="256.5" stroke="#f2f2f4" stroke-width="1.6" stroke-dasharray="2 3"/>
<line x1="1744.0" y1="242.0" x2="1737.0" y2="255.0" stroke="#f2f2f4" stroke-width="1.6" stroke-dasharray="2 3"/>
<line x1="1760.0" y1="240.0" x2="1753.0" y2="253.0" stroke="#f2f2f4" stroke-width="1.6" stroke-dasharray="2 3"/>
<line x1="1771.0" y1="238.5" x2="1764.0" y2="251.5" stroke="#f2f2f4" stroke-width="1.6" stroke-dasharray="2 3"/>
<line x1="1440.0" y1="293.0" x2="1433.0" y2="306.0" stroke="#f2f2f4" stroke-width="1.6" stroke-dasharray="2 3"/>
<line x1="1451.0" y1="291.5" x2="1444.0" y2="304.5" stroke="#f2f2f4" stroke-width="1.6" stroke-dasharray="2 3"/>
<line x1="1470.0" y1="288.0" x2="1463.0" y2="301.0" stroke="#f2f2f4" stroke-width="1.6" stroke-dasharray="2 3"/>
<line x1="1481.0" y1="286.5" x2="1474.0" y2="299.5" stroke="#f2f2f4" stroke-width="1.6" stroke-dasharray="2 3"/>
<line x1="1500.0" y1="286.0" x2="1493.0" y2="299.0" stroke="#f2f2f4" stroke-width="1.6" stroke-dasharray="2 3"/>
<line x1="1511.0" y1="284.5" x2="1504.0" y2="297.5" stroke="#f2f2f4" stroke-width="1.6" stroke-dasharray="2 3"/>
<line x1="1520.0" y1="283.0" x2="1513.0" y2="296.0" stroke="#f2f2f4" stroke-width="1.6" stroke-dasharray="2 3"/>
<line x1="1531.0" y1="281.5" x2="1524.0" y2="294.5" stroke="#f2f2f4" stroke-width="1.6" stroke-dasharray="2 3"/>
<line x1="1540.0" y1="280.0" x2="1533.0" y2="293.0" stroke="#f2f2f4" stroke-width="1.6" stroke-dasharray="2 3"/>
<line x1="1551.0" y1="278.5" x2="1544.0" y2="291.5" stroke="#f2f2f4" stroke-width="1.6" stroke-dasharray="2 3"/>
<rect x="1557.0" y="284.0" width="11.0" height="2.0" fill="#f2f2f4"/>
<rect x="1557.0" y="288.3" width="11.0" height="2.0" fill="#f2f2f4"/>
<rect x="1557.0" y="292.6" width="11.0" height="2.0" fill="#f2f2f4"/>
<rect x="1557.0" y="296.9" width="11.0" height="2.0" fill="#f2f2f4"/>
<rect x="1557.0" y="301.2" width="11.0" height="2.0" fill="#f2f2f4"/>
<line x1="934.0" y1="603.0" x2="937.0" y2="592.0" stroke="#f2f2f4" stroke-width="2"/>
<line x1="937.9" y1="602.1" x2="940.9" y2="591.1" stroke="#f2f2f4" stroke-width="2"/>
<line x1="941.8" y1="601.2" x2="944.8" y2="590.2" stroke="#f2f2f4" stroke-width="2"/>
<line x1="945.7" y1="600.3" x2="948.7" y2="589.3" stroke="#f2f2f4" stroke-width="2"/>
<line x1="949.6" y1="599.4" x2="952.6" y2="588.4" stroke="#f2f2f4" stroke-width="2"/>
<line x1="953.5" y1="598.5" x2="956.5" y2="587.5" stroke="#f2f2f4" stroke-width="2"/>
<line x1="957.4" y1="597.6" x2="960.4" y2="586.6" stroke="#f2f2f4" stroke-width="2"/>
<line x1="961.3" y1="596.7" x2="964.3" y2="585.7" stroke="#f2f2f4" stroke-width="2"/>
<line x1="965.2" y1="595.8" x2="968.2" y2="584.8" stroke="#f2f2f4" stroke-width="2"/>
<line x1="969.1" y1="594.9" x2="972.1" y2="583.9" stroke="#f2f2f4" stroke-width="2"/>
<line x1="973.0" y1="594.0" x2="976.0" y2="583.0" stroke="#f2f2f4" stroke-width="2"/>
<line x1="976.9" y1="593.1" x2="979.9" y2="582.1" stroke="#f2f2f4" stroke-width="2"/>
<rect x="923.0" y="610.0" width="9.0" height="2.0" fill="#f2f2f4"/>
<rect x="923.9" y="613.9" width="9.0" height="2.0" fill="#f2f2f4"/>
<rect x="924.8" y="617.8" width="9.0" height="2.0" fill="#f2f2f4"/>
<rect x="925.7" y="621.7" width="9.0" height="2.0" fill="#f2f2f4"/>
<rect x="926.6" y="625.6" width="9.0" height="2.0" fill="#f2f2f4"/>
<rect x="927.5" y="629.5" width="9.0" height="2.0" fill="#f2f2f4"/>
<rect x="928.4" y="633.4" width="9.0" height="2.0" fill="#f2f2f4"/>
<rect x="937.0" y="687.0" width="11.0" height="2.0" fill="#f2f2f4"/>
<rect x="937.0" y="690.5" width="11.0" height="2.0" fill="#f2f2f4"/>
<rect x="937.0" y="694.0" width="11.0" height="2.0" fill="#f2f2f4"/>
<rect x="937.0" y="697.5" width="11.0" height="2.0" fill="#f2f2f4"/>
<rect x="937.0" y="701.0" width="11.0" height="2.0" fill="#f2f2f4"/>
<rect x="937.0" y="704.5" width="11.0" height="2.0" fill="#f2f2f4"/>
<rect x="937.0" y="708.0" width="11.0" height="2.0" fill="#f2f2f4"/>
<line x1="974.0" y1="725.0" x2="976.0" y2="713.0" stroke="#f2f2f4" stroke-width="2"/>
<line x1="977.7" y1="724.2" x2="979.7" y2="712.2" stroke="#f2f2f4" stroke-width="2"/>
<line x1="981.4" y1="723.4" x2="983.4" y2="711.4" stroke="#f2f2f4" stroke-width="2"/>
<line x1="985.1" y1="722.6" x2="987.1" y2="710.6" stroke="#f2f2f4" stroke-width="2"/>
<line x1="988.8" y1="721.8" x2="990.8" y2="709.8" stroke="#f2f2f4" stroke-width="2"/>
<line x1="992.5" y1="721.0" x2="994.5" y2="709.0" stroke="#f2f2f4" stroke-width="2"/>
<line x1="996.2" y1="720.2" x2="998.2" y2="708.2" stroke="#f2f2f4" stroke-width="2"/>
<line x1="999.9" y1="719.4" x2="1001.9" y2="707.4" stroke="#f2f2f4" stroke-width="2"/>
<line x1="1003.6" y1="718.6" x2="1005.6" y2="706.6" stroke="#f2f2f4" stroke-width="2"/>
<line x1="1007.3" y1="717.8" x2="1009.3" y2="705.8" stroke="#f2f2f4" stroke-width="2"/>
<line x1="1011.0" y1="717.0" x2="1013.0" y2="705.0" stroke="#f2f2f4" stroke-width="2"/>
<line x1="1014.7" y1="716.2" x2="1016.7" y2="704.2" stroke="#f2f2f4" stroke-width="2"/>
<rect x="904.0" y="345.0" width="9.0" height="1.8" fill="#f2f2f4"/>
<rect x="904.0" y="348.6" width="9.0" height="1.8" fill="#f2f2f4"/>
<rect x="904.0" y="352.2" width="9.0" height="1.8" fill="#f2f2f4"/>
<rect x="904.0" y="355.8" width="9.0" height="1.8" fill="#f2f2f4"/>
<rect x="904.0" y="359.4" width="9.0" height="1.8" fill="#f2f2f4"/>
<line x1="1044.0" y1="591.0" x2="1049.0" y2="597.0" stroke="#f2f2f4" stroke-width="1.8"/>
<line x1="1057.5" y1="591.2" x2="1062.5" y2="597.2" stroke="#f2f2f4" stroke-width="1.8"/>
<line x1="1071.0" y1="591.3" x2="1076.0" y2="597.3" stroke="#f2f2f4" stroke-width="1.8"/>
<line x1="1084.5" y1="591.5" x2="1089.5" y2="597.5" stroke="#f2f2f4" stroke-width="1.8"/>
<line x1="1098.0" y1="591.7" x2="1103.0" y2="597.7" stroke="#f2f2f4" stroke-width="1.8"/>
<line x1="1111.5" y1="591.8" x2="1116.5" y2="597.8" stroke="#f2f2f4" stroke-width="1.8"/>
<line x1="1125.0" y1="592.0" x2="1130.0" y2="598.0" stroke="#f2f2f4" stroke-width="1.8"/>
<line x1="1127.0" y1="671.0" x2="1135.0" y2="681.0" stroke="#f2f2f4" stroke-width="1.8"/>
<line x1="1139.5" y1="669.5" x2="1147.5" y2="679.5" stroke="#f2f2f4" stroke-width="1.8"/>
<line x1="1152.0" y1="668.0" x2="1160.0" y2="678.0" stroke="#f2f2f4" stroke-width="1.8"/>
<line x1="1000.0" y1="690.0" x2="1007.0" y2="698.0" stroke="#f2f2f4" stroke-width="1.8"/>
<line x1="1014.0" y1="690.8" x2="1021.0" y2="698.8" stroke="#f2f2f4" stroke-width="1.8"/>
<line x1="1028.0" y1="691.6" x2="1035.0" y2="699.6" stroke="#f2f2f4" stroke-width="1.8"/>
<line x1="1042.0" y1="692.4" x2="1049.0" y2="700.4" stroke="#f2f2f4" stroke-width="1.8"/>
<line x1="1056.0" y1="693.2" x2="1063.0" y2="701.2" stroke="#f2f2f4" stroke-width="1.8"/>
<line x1="1070.0" y1="694.0" x2="1077.0" y2="702.0" stroke="#f2f2f4" stroke-width="1.8"/>
<line x1="998.0" y1="600.0" x2="1007.0" y2="611.0" stroke="#f2f2f4" stroke-width="1.8"/>
<line x1="1036.0" y1="646.0" x2="1031.0" y2="659.0" stroke="#f2f2f4" stroke-width="1.8" stroke-dasharray="2 2.5"/>
<line x1="1047.0" y1="645.0" x2="1042.0" y2="658.0" stroke="#f2f2f4" stroke-width="1.8" stroke-dasharray="2 2.5"/>
<line x1="1082.0" y1="640.0" x2="1077.0" y2="653.0" stroke="#f2f2f4" stroke-width="1.8" stroke-dasharray="2 2.5"/>
<line x1="1117.0" y1="635.0" x2="1112.0" y2="648.0" stroke="#f2f2f4" stroke-width="1.8" stroke-dasharray="2 2.5"/>
<line x1="1128.0" y1="634.0" x2="1123.0" y2="647.0" stroke="#f2f2f4" stroke-width="1.8" stroke-dasharray="2 2.5"/>
<rect x="1004.0" y="624.0" width="6.0" height="2.0" fill="#f2f2f4"/>
<rect x="1116.0" y="609.0" width="9.0" height="2.5" fill="#f2f2f4"/>
<rect x="1120.0" y="658.0" width="10.0" height="2.5" fill="#f2f2f4"/>
<rect x="1008.0" y="674.0" width="8.0" height="2.0" fill="#f2f2f4"/>
<line x1="1660.0" y1="886.0" x2="1660.0" y2="893.0" stroke="#f2f2f4" stroke-width="2"/>
<line x1="1682.1" y1="885.1" x2="1682.1" y2="892.1" stroke="#f2f2f4" stroke-width="2"/>
<line x1="1704.3" y1="884.3" x2="1704.3" y2="891.3" stroke="#f2f2f4" stroke-width="2"/>
<line x1="1726.4" y1="883.4" x2="1726.4" y2="890.4" stroke="#f2f2f4" stroke-width="2"/>
<line x1="1748.6" y1="882.6" x2="1748.6" y2="889.6" stroke="#f2f2f4" stroke-width="2"/>
<line x1="1770.7" y1="881.7" x2="1770.7" y2="888.7" stroke="#f2f2f4" stroke-width="2"/>
<line x1="1792.9" y1="880.9" x2="1792.9" y2="887.9" stroke="#f2f2f4" stroke-width="2"/>
<line x1="1815.0" y1="880.0" x2="1815.0" y2="887.0" stroke="#f2f2f4" stroke-width="2"/>
<line x1="1655.0" y1="943.0" x2="1655.0" y2="936.0" stroke="#f2f2f4" stroke-width="2"/>
<line x1="1675.0" y1="941.9" x2="1675.0" y2="934.9" stroke="#f2f2f4" stroke-width="2"/>
<line x1="1695.0" y1="940.8" x2="1695.0" y2="933.8" stroke="#f2f2f4" stroke-width="2"/>
<line x1="1715.0" y1="939.6" x2="1715.0" y2="932.6" stroke="#f2f2f4" stroke-width="2"/>
<line x1="1735.0" y1="938.5" x2="1735.0" y2="931.5" stroke="#f2f2f4" stroke-width="2"/>
<line x1="1755.0" y1="937.4" x2="1755.0" y2="930.4" stroke="#f2f2f4" stroke-width="2"/>
<line x1="1775.0" y1="936.2" x2="1775.0" y2="929.2" stroke="#f2f2f4" stroke-width="2"/>
<line x1="1795.0" y1="935.1" x2="1795.0" y2="928.1" stroke="#f2f2f4" stroke-width="2"/>
<line x1="1815.0" y1="934.0" x2="1815.0" y2="927.0" stroke="#f2f2f4" stroke-width="2"/>
<rect x="938.0" y="398.0" width="2.0" height="7.0" fill="#f2f2f4"/>
<rect x="950.0" y="398.0" width="2.0" height="7.0" fill="#f2f2f4"/>
<rect x="933.0" y="538.0" width="3.0" height="5.0" fill="#f2f2f4"/>
<path fill="#f2f2f4" d="M972.7 768.4h4.0v2.0h-4.0zM975.5 779.0h4.0v2.0h-4.0zM977.6 790.1h4.0v2.0h-4.0zM979.0 801.0h4.0v2.0h-4.0zM981.3 811.6h4.0v2.0h-4.0zM983.6 821.7h4.0v2.0h-4.0zM986.4 833.5h4.0v2.0h-4.0zM988.1 843.2h4.0v2.0h-4.0zM991.2 855.0h4.0v2.0h-4.0zM993.4 864.8h4.0v2.0h-4.0zM996.3 874.9h4.0v2.0h-4.0zM998.3 886.0h4.0v2.0h-4.0zM999.4 896.4h4.0v2.0h-4.0zM979.2 779.3h2.2v2.2h-2.2zM981.2 791.3h2.2v2.2h-2.2zM985.4 803.5h2.2v2.2h-2.2zM987.5 815.3h2.2v2.2h-2.2zM988.0 828.8h2.2v2.2h-2.2zM992.9 842.7h2.2v2.2h-2.2zM993.8 856.3h2.2v2.2h-2.2zM996.8 868.2h2.2v2.2h-2.2zM1014.0 768.3h3.5v2.0h-3.5zM1017.0 778.7h3.5v2.0h-3.5zM1021.3 789.8h3.5v2.0h-3.5zM1025.6 799.5h3.5v2.0h-3.5zM1029.9 809.8h3.5v2.0h-3.5zM1032.9 821.4h3.5v2.0h-3.5zM1017.7 776.0h2.0v2.0h-2.0zM1019.1 788.5h2.0v2.0h-2.0zM1023.0 800.2h2.0v2.0h-2.0zM1025.1 811.4h2.0v2.0h-2.0zM962.3 742.2h2.0v3.5h-2.0zM974.1 740.9h2.0v3.5h-2.0zM986.5 740.7h2.0v3.5h-2.0zM998.0 739.3h2.0v3.5h-2.0zM1009.3 738.3h2.0v3.5h-2.0zM1030.2 824.8h2.0v2.0h-2.0zM1038.5 827.2h2.0v2.0h-2.0zM1045.8 831.3h2.0v2.0h-2.0zM1064.2 862.9h2.0v5.0h-2.0zM1081.7 861.5h2.0v5.0h-2.0zM1098.7 861.7h2.0v5.0h-2.0zM1116.0 860.0h2.0v5.0h-2.0zM1133.6 860.1h2.0v5.0h-2.0zM1150.3 858.5h2.0v5.0h-2.0zM1168.3 858.4h2.0v5.0h-2.0zM1185.9 857.5h2.0v5.0h-2.0zM1202.2 855.9h2.0v5.0h-2.0zM1061.6 871.2h2.2v2.2h-2.2zM1081.7 868.1h2.2v2.2h-2.2zM1097.6 867.5h2.2v2.2h-2.2zM1116.1 867.4h2.2v2.2h-2.2zM1135.4 865.9h2.2v2.2h-2.2zM1151.9 865.5h2.2v2.2h-2.2zM1171.3 865.1h2.2v2.2h-2.2zM1191.4 864.6h2.2v2.2h-2.2zM1008.0 913.2h2.0v4.5h-2.0zM1027.7 911.6h2.0v4.5h-2.0zM1047.5 912.2h2.0v4.5h-2.0zM1066.9 911.5h2.0v4.5h-2.0zM1085.5 910.3h2.0v4.5h-2.0zM1104.5 910.0h2.0v4.5h-2.0zM1123.9 908.5h2.0v4.5h-2.0zM1143.5 908.0h2.0v4.5h-2.0zM1018.4 921.3h2.0v4.5h-2.0zM1037.7 920.6h2.0v4.5h-2.0zM1057.7 920.0h2.0v4.5h-2.0zM1077.4 920.0h2.0v4.5h-2.0zM1098.2 917.9h2.0v4.5h-2.0zM1055.6 902.3h2.0v4.5h-2.0zM1075.0 901.0h2.0v4.5h-2.0zM1095.1 901.5h2.0v4.5h-2.0zM1113.7 899.8h2.0v4.5h-2.0zM1132.3 898.4h2.0v4.5h-2.0zM989.7 904.6h2.2v2.2h-2.2zM1040.5 904.5h2.2v2.2h-2.2zM1097.0 880.0h8.0v2.5h-8.0zM1099.0 893.0h9.0v2.5h-9.0zM1086.0 866.0h2.0v8.0h-2.0zM1524.4 864.7h3.5v2.0h-3.5zM1634.7 936.3h3.5v2.0h-3.5zM1435.9 927.2h3.5v2.0h-3.5zM1585.9 883.0h2.0v3.5h-2.0zM1593.8 948.5h3.5v2.0h-3.5zM1592.5 931.8h3.5v2.0h-3.5zM1629.3 894.7h3.5v2.0h-3.5zM1637.1 945.5h2.0v3.5h-2.0zM1547.9 940.0h3.5v2.0h-3.5zM1556.8 941.0h3.5v2.0h-3.5zM1578.8 897.8h2.0v3.5h-2.0zM1588.3 883.3h3.5v2.0h-3.5zM1633.1 889.6h2.0v3.5h-2.0zM1627.0 922.5h2.0v3.5h-2.0zM1616.7 930.7h2.0v3.5h-2.0zM1597.5 948.0h3.5v2.0h-3.5zM1632.9 915.0h3.5v2.0h-3.5zM1623.7 893.4h3.5v2.0h-3.5zM1597.4 871.1h2.0v3.5h-2.0zM1538.7 875.9h2.0v3.5h-2.0zM1427.1 941.0h2.0v3.5h-2.0zM1616.6 892.1h3.5v2.0h-3.5zM1517.9 903.2h3.5v2.0h-3.5zM1590.8 867.2h2.0v3.5h-2.0zM1572.7 905.6h2.0v3.5h-2.0zM1522.0 905.5h3.5v2.0h-3.5zM1421.0 906.0h2.0v3.5h-2.0zM1519.4 906.2h3.5v2.0h-3.5zM1618.6 894.3h3.5v2.0h-3.5zM1518.9 901.2h3.5v2.0h-3.5zM1566.3 937.7h3.5v2.0h-3.5zM1626.1 934.0h2.0v3.5h-2.0zM1412.9 916.9h3.5v2.0h-3.5zM1614.8 865.4h3.5v2.0h-3.5zM1556.8 864.3h3.5v2.0h-3.5zM1632.0 872.0h3.5v2.0h-3.5zM1637.5 933.2h2.0v3.5h-2.0zM1636.3 928.8h3.5v2.0h-3.5zM1595.6 875.9h2.0v3.5h-2.0zM1620.2 907.1h3.5v2.0h-3.5zM1563.6 892.5h2.0v3.5h-2.0zM1624.9 913.4h3.5v2.0h-3.5zM1530.5 942.7h2.0v3.5h-2.0zM1426.7 902.7h2.0v3.5h-2.0zM1581.1 879.0h3.5v2.0h-3.5zM1530.0 868.9h2.0v3.5h-2.0zM1624.0 860.6h3.5v2.0h-3.5zM1599.5 889.3h3.5v2.0h-3.5zM1563.5 948.2h2.0v3.5h-2.0zM1598.9 920.7h3.5v2.0h-3.5zM1608.3 917.1h2.0v3.5h-2.0zM1630.6 947.3h3.5v2.0h-3.5zM1538.5 902.9h3.5v2.0h-3.5zM1556.1 921.6h3.5v2.0h-3.5zM1636.3 864.9h3.5v2.0h-3.5zM1599.6 939.2h3.5v2.0h-3.5zM1574.8 931.2h2.0v3.5h-2.0zM1523.3 900.4h3.5v2.0h-3.5zM1592.1 932.6h3.5v2.0h-3.5zM1613.7 918.3h3.5v2.0h-3.5zM1420.7 933.6h3.5v2.0h-3.5zM1548.8 912.6h3.5v2.0h-3.5zM1590.4 924.8h3.5v2.0h-3.5zM1526.1 915.9h2.0v3.5h-2.0zM1575.5 875.2h2.0v3.5h-2.0zM1634.1 899.4h2.0v3.5h-2.0zM1582.9 911.7h3.5v2.0h-3.5zM1564.6 917.6h2.0v3.5h-2.0zM1521.6 896.5h2.0v3.5h-2.0zM1424.0 939.4h2.0v3.5h-2.0zM1634.6 943.6h2.0v3.5h-2.0zM1632.2 894.9h2.0v3.5h-2.0zM1429.7 902.4h3.5v2.0h-3.5zM1427.5 932.0h3.5v2.0h-3.5zM1612.3 920.3h2.0v3.5h-2.0zM1614.9 898.6h2.0v3.5h-2.0zM1600.6 862.0h3.5v2.0h-3.5zM1569.7 940.2h2.0v3.5h-2.0zM1639.7 908.9h2.0v3.5h-2.0zM1599.5 878.6h3.5v2.0h-3.5zM1520.2 869.0h2.0v3.5h-2.0zM1629.3 938.4h3.5v2.0h-3.5zM1549.6 941.3h3.5v2.0h-3.5zM1529.6 922.0h2.0v3.5h-2.0zM1574.4 895.1h3.5v2.0h-3.5zM1552.9 878.6h2.0v3.5h-2.0zM1622.1 862.7h2.0v3.5h-2.0zM1576.1 947.6h2.0v3.5h-2.0zM1555.7 880.1h3.5v2.0h-3.5zM1617.0 899.7h2.0v3.5h-2.0zM1617.0 949.6h2.0v3.5h-2.0zM1612.4 925.0h2.0v3.5h-2.0zM1632.1 862.6h3.5v2.0h-3.5zM1549.3 936.3h2.0v3.5h-2.0zM1628.7 934.9h3.5v2.0h-3.5zM1568.8 939.6h2.0v3.5h-2.0zM1597.3 935.5h3.5v2.0h-3.5zM1432.8 902.2h3.5v2.0h-3.5zM1625.7 922.2h3.5v2.0h-3.5zM1582.4 895.7h3.5v2.0h-3.5zM1553.1 880.4h2.0v3.5h-2.0zM1566.2 861.2h2.0v3.5h-2.0zM1523.5 908.3h2.0v3.5h-2.0zM1552.9 938.4h2.0v3.5h-2.0zM1630.4 920.5h2.0v3.5h-2.0zM1553.4 744.8h3.5v2.0h-3.5zM1578.0 723.2h3.5v2.0h-3.5zM1609.4 720.4h2.0v3.5h-2.0zM1573.0 737.9h3.5v2.0h-3.5zM1564.3 771.7h3.5v2.0h-3.5zM1583.3 718.5h3.5v2.0h-3.5zM1571.3 773.8h2.0v3.5h-2.0zM1565.7 768.4h2.0v3.5h-2.0zM1611.0 744.6h2.0v3.5h-2.0zM1565.8 737.5h3.5v2.0h-3.5zM1610.8 713.2h2.0v3.5h-2.0zM1565.2 787.7h2.0v3.5h-2.0zM1555.2 705.4h2.0v3.5h-2.0zM1607.7 779.5h3.5v2.0h-3.5zM1613.8 783.8h2.0v3.5h-2.0zM1563.5 784.2h3.5v2.0h-3.5zM936.3 580.0h2.0v3.5h-2.0zM950.0 575.0h2.0v3.5h-2.0zM935.1 574.2h2.0v3.5h-2.0zM973.2 571.9h3.5v2.0h-3.5zM889.7 671.0h2.0v6.0h-2.0zM908.6 675.0h2.0v6.0h-2.0zM880.3 685.0h2.0v4.0h-2.0zM882.9 716.0h2.5v7.0h-2.5zM902.6 718.0h2.0v7.0h-2.0zM921.5 720.0h2.0v7.0h-2.0z"/>
<circle cx="1123.5" cy="213.4" r="8.8" fill-opacity=".66" fill="#48523a"/>
<circle cx="1091.7" cy="241.8" r="10.6" fill-opacity=".66" fill="#48523a"/>
<circle cx="1136.0" cy="237.5" r="6.2" fill-opacity=".66" fill="#48523a"/>
<circle cx="1181.0" cy="224.6" r="7.9" fill-opacity=".66" fill="#48523a"/>
<circle cx="1010.0" cy="328.5" r="8.8" fill-opacity=".66" fill="#48523a"/>
<circle cx="987.7" cy="349.0" r="7.9" fill-opacity=".66" fill="#48523a"/>
<circle cx="1225.0" cy="288.0" r="7.0" fill-opacity=".66" fill="#48523a"/>
<circle cx="1245.5" cy="284.7" r="7.0" fill-opacity=".66" fill="#48523a"/>
<circle cx="1262.7" cy="281.0" r="7.0" fill-opacity=".66" fill="#48523a"/>
<circle cx="1281.6" cy="279.5" r="7.0" fill-opacity=".66" fill="#48523a"/>
<circle cx="1302.0" cy="276.0" r="8.8" fill-opacity=".66" fill="#48523a"/>
<circle cx="1316.0" cy="288.0" r="7.9" fill-opacity=".66" fill="#48523a"/>
<circle cx="1316.0" cy="303.6" r="7.0" fill-opacity=".66" fill="#48523a"/>
<circle cx="1310.8" cy="315.6" r="7.0" fill-opacity=".66" fill="#48523a"/>
<circle cx="1307.0" cy="326.0" r="7.9" fill-opacity=".66" fill="#48523a"/>
<circle cx="1431.0" cy="222.9" r="15.8" fill-opacity=".66" fill="#48523a"/>
<circle cx="1486.0" cy="192.8" r="9.7" fill-opacity=".66" fill="#48523a"/>
<circle cx="1491.0" cy="221.0" r="12.3" fill-opacity=".66" fill="#48523a"/>
<circle cx="1408.0" cy="349.0" r="12.3" fill-opacity=".66" fill="#48523a"/>
<circle cx="1562.0" cy="195.0" r="17.6" fill-opacity=".66" fill="#48523a"/>
<circle cx="1662.0" cy="174.0" r="13.2" fill-opacity=".66" fill="#48523a"/>
<circle cx="1721.6" cy="310.5" r="21.1" fill-opacity=".66" fill="#48523a"/>
<circle cx="1604.0" cy="321.6" r="7.0" fill-opacity=".66" fill="#48523a"/>
<circle cx="1850.0" cy="287.0" r="5.3" fill-opacity=".66" fill="#48523a"/>
<circle cx="1847.0" cy="326.0" r="6.2" fill-opacity=".66" fill="#48523a"/>
<circle cx="1106.0" cy="539.7" r="6.2" fill-opacity=".66" fill="#48523a"/>
<circle cx="1724.0" cy="473.0" r="16.7" fill-opacity=".66" fill="#48523a"/>
<circle cx="1705.0" cy="470.0" r="10.6" fill-opacity=".66" fill="#48523a"/>
<circle cx="1745.0" cy="468.0" r="8.8" fill-opacity=".66" fill="#48523a"/>
<circle cx="1667.0" cy="515.0" r="17.6" fill-opacity=".66" fill="#48523a"/>
<circle cx="1650.0" cy="520.0" r="10.6" fill-opacity=".66" fill="#48523a"/>
<circle cx="1685.0" cy="508.0" r="10.6" fill-opacity=".66" fill="#48523a"/>
<circle cx="1622.0" cy="529.0" r="7.9" fill-opacity=".66" fill="#48523a"/>
<circle cx="1714.7" cy="520.8" r="7.0" fill-opacity=".66" fill="#48523a"/>
<circle cx="1744.0" cy="516.5" r="6.2" fill-opacity=".66" fill="#48523a"/>
<circle cx="1748.0" cy="547.4" r="6.2" fill-opacity=".66" fill="#48523a"/>
<circle cx="1575.5" cy="538.0" r="7.0" fill-opacity=".66" fill="#48523a"/>
<circle cx="1542.0" cy="545.0" r="7.0" fill-opacity=".66" fill="#48523a"/>
<circle cx="914.7" cy="746.6" r="8.8" fill-opacity=".66" fill="#48523a"/>
<circle cx="940.5" cy="747.4" r="7.9" fill-opacity=".66" fill="#48523a"/>
<circle cx="1040.0" cy="738.0" r="15.8" fill-opacity=".66" fill="#48523a"/>
<circle cx="1038.0" cy="755.0" r="12.3" fill-opacity=".66" fill="#48523a"/>
<circle cx="926.0" cy="659.0" r="10.6" fill-opacity=".66" fill="#48523a"/>
<circle cx="1458.0" cy="607.0" r="19.4" fill-opacity=".66" fill="#48523a"/>
<circle cx="1446.0" cy="590.0" r="10.6" fill-opacity=".66" fill="#48523a"/>
<circle cx="1470.0" cy="625.0" r="10.6" fill-opacity=".66" fill="#48523a"/>
<circle cx="1488.0" cy="623.0" r="7.0" fill-opacity=".66" fill="#48523a"/>
<circle cx="1510.0" cy="635.0" r="7.0" fill-opacity=".66" fill="#48523a"/>
<circle cx="1436.0" cy="547.0" r="8.8" fill-opacity=".66" fill="#48523a"/>
<circle cx="1450.0" cy="545.0" r="8.8" fill-opacity=".66" fill="#48523a"/>
<circle cx="1464.0" cy="544.0" r="9.7" fill-opacity=".66" fill="#48523a"/>
<circle cx="1478.0" cy="545.0" r="8.8" fill-opacity=".66" fill="#48523a"/>
<circle cx="1492.0" cy="543.0" r="8.8" fill-opacity=".66" fill="#48523a"/>
<circle cx="1505.0" cy="547.0" r="7.0" fill-opacity=".66" fill="#48523a"/>
<circle cx="1646.0" cy="616.0" r="9.7" fill-opacity=".66" fill="#48523a"/>
<circle cx="1616.8" cy="689.0" r="7.0" fill-opacity=".66" fill="#48523a"/>
<circle cx="1625.4" cy="734.5" r="8.8" fill-opacity=".66" fill="#48523a"/>
<circle cx="886.0" cy="823.0" r="7.0" fill-opacity=".66" fill="#48523a"/>
<circle cx="898.0" cy="864.0" r="6.2" fill-opacity=".66" fill="#48523a"/>
<circle cx="900.0" cy="906.0" r="7.0" fill-opacity=".66" fill="#48523a"/>
<circle cx="896.6" cy="947.4" r="6.2" fill-opacity=".66" fill="#48523a"/>
<circle cx="1051.0" cy="788.5" r="11.4" fill-opacity=".66" fill="#48523a"/>
<circle cx="1053.0" cy="845.0" r="15.0" fill-opacity=".66" fill="#48523a"/>
<circle cx="1092.5" cy="845.0" r="7.0" fill-opacity=".66" fill="#48523a"/>
<circle cx="1134.7" cy="840.0" r="7.0" fill-opacity=".66" fill="#48523a"/>
<circle cx="1175.0" cy="835.0" r="6.2" fill-opacity=".66" fill="#48523a"/>
<circle cx="1041.0" cy="764.0" r="7.0" fill-opacity=".66" fill="#48523a"/>
<circle cx="1140.7" cy="939.7" r="13.2" fill-opacity=".66" fill="#48523a"/>
<circle cx="1190.5" cy="929.4" r="15.0" fill-opacity=".66" fill="#48523a"/>
<circle cx="1240.0" cy="835.0" r="8.8" fill-opacity=".66" fill="#48523a"/>
<circle cx="1237.0" cy="819.0" r="6.2" fill-opacity=".66" fill="#48523a"/>
<circle cx="1269.6" cy="836.6" r="6.2" fill-opacity=".66" fill="#48523a"/>
<circle cx="1334.0" cy="841.8" r="7.0" fill-opacity=".66" fill="#48523a"/>
<circle cx="1376.0" cy="836.6" r="7.0" fill-opacity=".66" fill="#48523a"/>
<circle cx="1420.8" cy="829.7" r="7.0" fill-opacity=".66" fill="#48523a"/>
<circle cx="1462.0" cy="826.0" r="6.2" fill-opacity=".66" fill="#48523a"/>
<circle cx="1506.0" cy="819.4" r="7.0" fill-opacity=".66" fill="#48523a"/>
<circle cx="1506.8" cy="856.4" r="8.8" fill-opacity=".66" fill="#48523a"/>
<circle cx="1432.0" cy="871.0" r="7.0" fill-opacity=".66" fill="#48523a"/>
<circle cx="1371.0" cy="908.8" r="14.1" fill-opacity=".66" fill="#48523a"/>
<circle cx="1338.4" cy="922.5" r="13.2" fill-opacity=".66" fill="#48523a"/>
<circle cx="1254.0" cy="926.0" r="15.0" fill-opacity=".66" fill="#48523a"/>
<circle cx="1304.0" cy="939.7" r="13.2" fill-opacity=".66" fill="#48523a"/>
<circle cx="1532.6" cy="771.0" r="5.3" fill-opacity=".66" fill="#48523a"/>
<circle cx="1628.8" cy="790.0" r="12.3" fill-opacity=".66" fill="#48523a"/>
<circle cx="1622.0" cy="775.0" r="8.8" fill-opacity=".66" fill="#48523a"/>
<circle cx="1637.4" cy="845.0" r="12.3" fill-opacity=".66" fill="#48523a"/>
<circle cx="1646.0" cy="871.0" r="7.9" fill-opacity=".66" fill="#48523a"/>
<circle cx="1628.0" cy="898.5" r="7.9" fill-opacity=".66" fill="#48523a"/>
<circle cx="1673.5" cy="898.5" r="7.9" fill-opacity=".66" fill="#48523a"/>
<circle cx="1543.0" cy="780.0" r="10.6" fill-opacity=".66" fill="#48523a"/>
<circle cx="1545.5" cy="812.5" r="7.9" fill-opacity=".66" fill="#48523a"/>
<circle cx="1524.0" cy="700.0" r="6.2" fill-opacity=".66" fill="#48523a"/>
<circle cx="1528.0" cy="730.0" r="6.2" fill-opacity=".66" fill="#48523a"/>
<circle cx="1531.0" cy="755.0" r="5.3" fill-opacity=".66" fill="#48523a"/>
<circle cx="1210.0" cy="590.0" r="6.2" fill-opacity=".66" fill="#48523a"/>
<circle cx="1230.0" cy="603.0" r="6.2" fill-opacity=".66" fill="#48523a"/>
<circle cx="1248.0" cy="618.0" r="7.0" fill-opacity=".66" fill="#48523a"/>
<circle cx="1266.0" cy="632.0" r="7.0" fill-opacity=".66" fill="#48523a"/>
<circle cx="1283.0" cy="648.0" r="5.3" fill-opacity=".66" fill="#52692f"/>
<circle cx="1291.0" cy="655.0" r="4.4" fill-opacity=".66" fill="#52692f"/>
<circle cx="1212.0" cy="630.0" r="4.4" fill-opacity=".66" fill="#52692f"/>
<circle cx="1232.0" cy="637.0" r="4.4" fill-opacity=".66" fill="#52692f"/>
<circle cx="1251.0" cy="642.0" r="4.4" fill-opacity=".66" fill="#52692f"/>
<circle cx="1271.0" cy="650.0" r="4.4" fill-opacity=".66" fill="#52692f"/>
<circle cx="1209.0" cy="677.0" r="4.4" fill-opacity=".66" fill="#52692f"/>
<circle cx="1225.0" cy="677.0" r="4.4" fill-opacity=".66" fill="#52692f"/>
<circle cx="1245.0" cy="677.0" r="4.4" fill-opacity=".66" fill="#52692f"/>
<circle cx="1265.0" cy="676.0" r="4.4" fill-opacity=".66" fill="#52692f"/>
<circle cx="1285.0" cy="678.0" r="4.4" fill-opacity=".66" fill="#52692f"/>
<circle cx="1228.0" cy="695.0" r="7.9" fill-opacity=".66" fill="#48523a"/>
<circle cx="1255.0" cy="692.0" r="7.0" fill-opacity=".66" fill="#48523a"/>
<circle cx="1207.0" cy="700.0" r="5.3" fill-opacity=".66" fill="#52692f"/>
<circle cx="1185.0" cy="576.0" r="5.3" fill-opacity=".66" fill="#52692f"/>
<circle cx="1197.0" cy="591.0" r="6.2" fill-opacity=".66" fill="#48523a"/>
<circle cx="1204.0" cy="607.0" r="5.3" fill-opacity=".66" fill="#52692f"/>
<circle cx="1140.0" cy="563.0" r="5.3" fill-opacity=".66" fill="#52692f"/>
<circle cx="1160.0" cy="566.0" r="4.4" fill-opacity=".66" fill="#52692f"/>
<circle cx="1187.0" cy="683.0" r="5.3" fill-opacity=".66" fill="#52692f"/>
<circle cx="1170.0" cy="693.0" r="5.3" fill-opacity=".66" fill="#52692f"/>
<circle cx="1180.0" cy="703.0" r="7.9" fill-opacity=".66" fill="#48523a"/>
<circle cx="1200.0" cy="700.0" r="6.2" fill-opacity=".66" fill="#48523a"/>
<circle cx="908.0" cy="392.0" r="4.4" fill-opacity=".66" fill="#52692f"/>
<circle cx="908.8" cy="411.0" r="4.4" fill-opacity=".66" fill="#52692f"/>
<circle cx="909.4" cy="428.0" r="4.4" fill-opacity=".66" fill="#52692f"/>
<circle cx="910.2" cy="446.0" r="4.4" fill-opacity=".66" fill="#52692f"/>
<circle cx="910.9" cy="464.0" r="4.4" fill-opacity=".66" fill="#52692f"/>
<circle cx="911.7" cy="484.0" r="4.4" fill-opacity=".66" fill="#52692f"/>
<circle cx="912.4" cy="503.0" r="4.4" fill-opacity=".66" fill="#52692f"/>
<circle cx="913.1" cy="520.0" r="4.4" fill-opacity=".66" fill="#52692f"/>
<circle cx="913.9" cy="539.0" r="4.4" fill-opacity=".66" fill="#52692f"/>
<circle cx="914.6" cy="557.0" r="4.4" fill-opacity=".66" fill="#52692f"/>
<circle cx="915.3" cy="575.0" r="4.4" fill-opacity=".66" fill="#52692f"/>
<circle cx="916.0" cy="593.0" r="4.4" fill-opacity=".66" fill="#52692f"/>
<circle cx="1543.7" cy="252.0" r="5.3" fill-opacity=".66" fill="#52692f"/>
<circle cx="1564.0" cy="248.6" r="5.3" fill-opacity=".66" fill="#52692f"/>
<circle cx="1548.0" cy="277.0" r="5.3" fill-opacity=".66" fill="#52692f"/>
<circle cx="1568.6" cy="273.5" r="5.3" fill-opacity=".66" fill="#52692f"/>
<circle cx="1547.0" cy="850.0" r="4.4" fill-opacity=".66" fill="#52692f"/>
<circle cx="1559.0" cy="848.6" r="4.4" fill-opacity=".66" fill="#52692f"/>
<circle cx="1570.0" cy="847.0" r="4.4" fill-opacity=".66" fill="#52692f"/>
<circle cx="1581.5" cy="846.0" r="4.4" fill-opacity=".66" fill="#52692f"/>
<circle cx="1597.0" cy="660.7" r="5.3" fill-opacity=".66" fill="#62662a"/>
<circle cx="1618.5" cy="659.0" r="5.3" fill-opacity=".66" fill="#62662a"/>
<circle cx="1638.0" cy="656.4" r="5.3" fill-opacity=".66" fill="#62662a"/>
<circle cx="1656.0" cy="653.8" r="5.3" fill-opacity=".66" fill="#62662a"/>
<circle cx="1679.5" cy="649.5" r="5.3" fill-opacity=".66" fill="#62662a"/>
<circle cx="1697.6" cy="648.6" r="5.3" fill-opacity=".66" fill="#62662a"/>
<circle cx="1723.0" cy="641.0" r="5.3" fill-opacity=".66" fill="#62662a"/>
<circle cx="1745.0" cy="639.0" r="5.3" fill-opacity=".66" fill="#62662a"/>
<circle cx="1764.6" cy="637.5" r="5.3" fill-opacity=".66" fill="#62662a"/>
<circle cx="1786.0" cy="632.3" r="5.3" fill-opacity=".66" fill="#62662a"/>
<circle cx="1808.4" cy="630.6" r="5.3" fill-opacity=".66" fill="#62662a"/>
<circle cx="993.0" cy="605.7" r="8.8" fill-opacity=".66" fill="#52692f"/>
<circle cx="997.0" cy="693.0" r="3.1" fill-opacity=".66" fill="#52692f"/>
<circle cx="1000.0" cy="700.0" r="3.1" fill-opacity=".66" fill="#52692f"/>
<circle cx="1003.0" cy="707.0" r="3.1" fill-opacity=".66" fill="#52692f"/>
<circle cx="1008.0" cy="705.0" r="3.1" fill-opacity=".66" fill="#52692f"/>
<circle cx="1000.0" cy="646.0" r="2.6" fill-opacity=".66" fill="#52692f"/>
<circle cx="1010.8" cy="647.3" r="2.6" fill-opacity=".66" fill="#52692f"/>
<circle cx="1021.5" cy="642.6" r="2.6" fill-opacity=".66" fill="#52692f"/>
<circle cx="1032.3" cy="643.9" r="2.6" fill-opacity=".66" fill="#52692f"/>
<circle cx="1043.1" cy="639.2" r="2.6" fill-opacity=".66" fill="#52692f"/>
<circle cx="1053.8" cy="640.5" r="2.6" fill-opacity=".66" fill="#52692f"/>
<circle cx="1064.6" cy="635.8" r="2.6" fill-opacity=".66" fill="#52692f"/>
<circle cx="1075.4" cy="637.2" r="2.6" fill-opacity=".66" fill="#52692f"/>
<circle cx="1086.2" cy="632.5" r="2.6" fill-opacity=".66" fill="#52692f"/>
<circle cx="1096.9" cy="633.8" r="2.6" fill-opacity=".66" fill="#52692f"/>
<circle cx="1107.7" cy="629.1" r="2.6" fill-opacity=".66" fill="#52692f"/>
<circle cx="1118.5" cy="630.4" r="2.6" fill-opacity=".66" fill="#52692f"/>
<circle cx="1129.2" cy="625.7" r="2.6" fill-opacity=".66" fill="#52692f"/>
<circle cx="1140.0" cy="627.0" r="2.6" fill-opacity=".66" fill="#52692f"/>
<circle cx="996.0" cy="655.0" r="2.6" fill-opacity=".66" fill="#52692f"/>
<circle cx="1141.0" cy="633.0" r="2.6" fill-opacity=".66" fill="#52692f"/>
<circle cx="1139.0" cy="640.0" r="2.6" fill-opacity=".66" fill="#52692f"/>
<circle cx="1370.0" cy="343.0" r="3.1" fill-opacity=".66" fill="#52692f"/>
<circle cx="1380.0" cy="340.0" r="3.1" fill-opacity=".66" fill="#52692f"/>
<circle cx="1388.0" cy="344.0" r="3.1" fill-opacity=".66" fill="#52692f"/>
<circle cx="1804.0" cy="215.0" r="3.1" fill-opacity=".66" fill="#52692f"/>
<circle cx="1809.0" cy="228.0" r="3.1" fill-opacity=".66" fill="#52692f"/>
<circle cx="1806.0" cy="240.0" r="3.1" fill-opacity=".66" fill="#52692f"/>
<circle cx="1801.0" cy="282.0" r="3.1" fill-opacity=".66" fill="#52692f"/>
<circle cx="1803.0" cy="292.0" r="3.1" fill-opacity=".66" fill="#52692f"/>
<circle cx="1550.0" cy="683.0" r="3.1" fill-opacity=".66" fill="#52692f"/>
<circle cx="1558.0" cy="688.0" r="3.1" fill-opacity=".66" fill="#52692f"/>
<circle cx="1548.0" cy="692.0" r="3.1" fill-opacity=".66" fill="#52692f"/>
<circle cx="1460.0" cy="884.0" r="3.1" fill-opacity=".66" fill="#52692f"/>
<circle cx="1478.0" cy="882.0" r="3.1" fill-opacity=".66" fill="#52692f"/>
<circle cx="1490.0" cy="890.0" r="3.1" fill-opacity=".66" fill="#52692f"/>
<circle cx="1495.0" cy="905.0" r="3.1" fill-opacity=".66" fill="#52692f"/>
<circle cx="1498.0" cy="925.0" r="3.1" fill-opacity=".66" fill="#52692f"/>
<circle cx="1499.0" cy="945.0" r="3.1" fill-opacity=".66" fill="#52692f"/>
<circle cx="1488.0" cy="900.0" r="3.1" fill-opacity=".66" fill="#52692f"/>
<polyline points="1763.0,453.8 1771.5,507.0" fill="none" stroke="#5a7a38" stroke-width="2.4" stroke-linejoin="round" stroke-dasharray="3 3"/>
<polyline points="1774.0,520.8 1778.0,561.0" fill="none" stroke="#5a7a38" stroke-width="2.4" stroke-linejoin="round" stroke-dasharray="3 3"/>
<polyline points="1369.0,554.0 1371.0,608.0 1380.0,612.0 1405.0,610.0" fill="none" stroke="#55663e" stroke-width="4" stroke-linejoin="round" stroke-dasharray="3 3"/>
<polygon points="1337.0,506.0 1347.5,506.0 1347.5,523.0 1405.0,511.0 1405.0,522.0 1348.0,535.0 1348.0,556.0 1337.0,556.0" fill="#dddcdc"/>
<path fill="#566047" d="M1123.3 216.9h3.3v3.3h-3.3zM1125.8 210.3h2.4v2.4h-2.4zM1127.5 212.9h3.3v3.3h-3.3zM1126.5 212.8h2.6v2.6h-2.6zM1127.8 210.7h2.2v2.2h-2.2zM1123.6 205.3h2.7v2.7h-2.7zM1115.9 213.2h2.0v2.0h-2.0zM1123.2 217.2h3.6v3.6h-3.6zM1117.5 211.6h3.3v3.3h-3.3zM1094.7 246.8h3.0v3.0h-3.0zM1092.4 242.6h2.0v2.0h-2.0zM1087.7 250.3h1.8v1.8h-1.8zM1087.4 235.2h2.4v2.4h-2.4zM1082.4 238.0h2.3v2.3h-2.3zM1092.1 233.6h2.0v2.0h-2.0zM1135.0 234.9h2.4v2.4h-2.4zM1173.1 222.4h2.9v2.9h-2.9zM1173.8 217.3h3.1v3.1h-3.1zM1179.2 222.3h3.3v3.3h-3.3zM1178.6 219.2h2.8v2.8h-2.8zM1186.4 221.1h2.3v2.3h-2.3zM1010.1 325.4h3.4v3.4h-3.4zM1007.6 326.2h2.5v2.5h-2.5zM1005.0 323.4h2.5v2.5h-2.5zM992.6 352.8h2.2v2.2h-2.2zM985.1 347.5h3.4v3.4h-3.4zM984.2 342.2h2.9v2.9h-2.9zM990.2 342.2h2.9v2.9h-2.9zM982.4 349.2h3.1v3.1h-3.1zM990.5 345.3h1.7v1.7h-1.7zM986.1 353.2h1.7v1.7h-1.7zM993.9 345.8h3.6v3.6h-3.6zM1220.4 291.4h2.3v2.3h-2.3zM1223.7 291.6h1.6v1.6h-1.6zM1220.5 291.7h1.6v1.6h-1.6zM1226.4 288.9h1.5v1.5h-1.5zM1226.0 292.7h1.9v1.9h-1.9zM1223.1 285.2h1.4v1.4h-1.4zM1226.1 290.4h2.2v2.2h-2.2zM1241.3 278.1h1.7v1.7h-1.7zM1247.7 280.9h1.5v1.5h-1.5zM1255.1 279.0h2.3v2.3h-2.3zM1257.5 281.0h1.3v1.3h-1.3zM1261.4 277.9h2.1v2.1h-2.1zM1258.6 276.7h1.7v1.7h-1.7zM1285.9 276.4h1.2v1.2h-1.2zM1301.4 272.7h3.2v3.2h-3.2zM1301.8 265.6h3.5v3.5h-3.5zM1303.7 278.4h1.8v1.8h-1.8zM1303.8 270.6h2.0v2.0h-2.0zM1294.7 276.9h2.7v2.7h-2.7zM1310.5 292.7h3.4v3.4h-3.4zM1313.8 289.0h3.1v3.1h-3.1zM1314.7 285.4h1.9v1.9h-1.9zM1315.6 286.2h2.9v2.9h-2.9zM1318.7 307.5h1.7v1.7h-1.7zM1315.8 307.3h1.8v1.8h-1.8zM1310.0 304.3h2.4v2.4h-2.4zM1313.0 299.9h2.2v2.2h-2.2zM1313.5 311.5h1.3v1.3h-1.3zM1315.1 318.1h2.5v2.5h-2.5zM1306.4 311.9h1.8v1.8h-1.8zM1305.8 313.3h1.7v1.7h-1.7zM1315.4 311.6h2.0v2.0h-2.0zM1304.6 314.0h2.2v2.2h-2.2zM1308.3 314.9h2.1v2.1h-2.1zM1307.7 327.6h2.5v2.5h-2.5zM1308.7 317.0h3.4v3.4h-3.4zM1308.4 326.6h2.7v2.7h-2.7zM1301.3 326.7h1.8v1.8h-1.8zM1308.1 320.7h3.4v3.4h-3.4zM1425.1 233.0h3.6v3.6h-3.6zM1430.9 230.1h3.4v3.4h-3.4zM1422.1 227.7h2.3v2.3h-2.3zM1422.5 232.3h3.6v3.6h-3.6zM1434.6 229.5h3.1v3.1h-3.1zM1421.4 212.8h2.3v2.3h-2.3zM1444.7 215.7h2.8v2.8h-2.8zM1442.0 229.5h3.1v3.1h-3.1zM1434.0 212.4h2.4v2.4h-2.4zM1431.5 219.8h3.1v3.1h-3.1zM1429.5 216.6h3.0v3.0h-3.0zM1424.4 208.3h3.3v3.3h-3.3zM1430.7 221.8h3.6v3.6h-3.6zM1428.0 234.1h3.6v3.6h-3.6zM1429.8 224.8h2.8v2.8h-2.8zM1442.7 212.7h2.6v2.6h-2.6zM1434.9 227.9h2.0v2.0h-2.0zM1435.3 218.0h2.3v2.3h-2.3zM1434.0 209.0h2.8v2.8h-2.8zM1479.7 196.1h2.0v2.0h-2.0zM1479.3 185.6h2.0v2.0h-2.0zM1501.5 220.3h2.6v2.6h-2.6zM1484.0 226.1h3.6v3.6h-3.6zM1486.9 213.5h1.8v1.8h-1.8zM1490.6 216.0h2.9v2.9h-2.9zM1489.8 215.6h3.3v3.3h-3.3zM1482.1 218.1h3.1v3.1h-3.1zM1498.5 226.9h1.8v1.8h-1.8zM1486.5 213.3h2.1v2.1h-2.1zM1417.4 350.9h2.5v2.5h-2.5zM1406.8 339.2h2.5v2.5h-2.5zM1415.6 350.0h2.1v2.1h-2.1zM1412.2 344.7h2.9v2.9h-2.9zM1398.7 352.7h3.0v3.0h-3.0zM1396.4 341.0h2.1v2.1h-2.1zM1403.0 354.1h3.4v3.4h-3.4zM1403.2 348.9h2.5v2.5h-2.5zM1405.8 355.9h2.7v2.7h-2.7zM1401.4 342.9h1.8v1.8h-1.8zM1404.6 349.2h3.2v3.2h-3.2zM1555.9 185.2h1.8v1.8h-1.8zM1570.8 201.7h3.5v3.5h-3.5zM1549.6 199.6h3.4v3.4h-3.4zM1569.6 189.4h2.3v2.3h-2.3zM1556.3 193.9h3.0v3.0h-3.0zM1557.7 202.2h2.4v2.4h-2.4zM1564.1 207.3h3.5v3.5h-3.5zM1562.4 190.9h2.1v2.1h-2.1zM1566.8 191.0h2.0v2.0h-2.0zM1563.3 207.2h1.9v1.9h-1.9zM1565.4 200.0h2.3v2.3h-2.3zM1547.9 194.4h1.9v1.9h-1.9zM1578.2 194.9h2.5v2.5h-2.5zM1576.7 193.4h2.6v2.6h-2.6zM1546.7 185.7h2.6v2.6h-2.6zM1561.5 207.4h2.8v2.8h-2.8zM1568.4 198.4h3.1v3.1h-3.1zM1563.3 210.3h2.9v2.9h-2.9zM1558.1 189.3h2.9v2.9h-2.9zM1660.1 180.2h2.3v2.3h-2.3zM1672.3 168.5h1.8v1.8h-1.8zM1648.8 178.9h3.0v3.0h-3.0zM1655.5 178.2h3.2v3.2h-3.2zM1659.6 178.3h3.5v3.5h-3.5zM1666.1 166.0h1.8v1.8h-1.8zM1663.5 169.6h2.9v2.9h-2.9zM1659.2 167.5h3.1v3.1h-3.1zM1667.2 163.7h2.8v2.8h-2.8zM1666.2 178.2h1.7v1.7h-1.7zM1664.0 169.1h3.1v3.1h-3.1zM1662.2 181.4h3.2v3.2h-3.2zM1658.6 171.3h2.7v2.7h-2.7zM1669.4 177.1h1.9v1.9h-1.9zM1715.7 296.6h1.7v1.7h-1.7zM1729.7 296.7h2.2v2.2h-2.2zM1714.6 288.4h3.6v3.6h-3.6zM1723.4 291.3h2.0v2.0h-2.0zM1736.3 320.4h3.5v3.5h-3.5zM1704.2 313.5h2.9v2.9h-2.9zM1721.2 292.7h3.1v3.1h-3.1zM1713.0 322.5h3.6v3.6h-3.6zM1718.7 321.2h2.3v2.3h-2.3zM1714.2 315.4h2.0v2.0h-2.0zM1703.3 315.8h1.9v1.9h-1.9zM1699.2 310.7h3.5v3.5h-3.5zM1703.3 294.9h3.5v3.5h-3.5zM1729.5 314.3h3.5v3.5h-3.5zM1731.1 325.1h2.9v2.9h-2.9zM1727.6 321.8h1.8v1.8h-1.8zM1734.0 293.1h2.2v2.2h-2.2zM1707.8 311.4h3.6v3.6h-3.6zM1738.3 320.4h2.7v2.7h-2.7zM1715.5 302.6h1.8v1.8h-1.8zM1604.8 314.8h1.7v1.7h-1.7zM1602.1 317.1h2.3v2.3h-2.3zM1607.8 323.9h1.5v1.5h-1.5zM1605.3 326.1h1.4v1.4h-1.4zM1603.7 324.4h2.1v2.1h-2.1zM1851.8 290.0h2.4v2.4h-2.4zM1849.6 284.6h1.3v1.3h-1.3zM1849.6 289.1h1.9v1.9h-1.9zM1846.5 284.1h1.5v1.5h-1.5zM1845.5 330.2h2.4v2.4h-2.4zM1844.6 327.9h1.6v1.6h-1.6zM1848.1 326.7h2.5v2.5h-2.5zM1111.1 538.0h1.9v1.9h-1.9zM1110.2 541.2h1.5v1.5h-1.5zM1102.8 536.1h1.9v1.9h-1.9zM1102.9 543.1h2.5v2.5h-2.5zM1725.3 487.0h3.6v3.6h-3.6zM1730.6 483.5h1.8v1.8h-1.8zM1715.9 466.7h2.2v2.2h-2.2zM1733.6 459.7h2.8v2.8h-2.8zM1725.0 487.6h2.4v2.4h-2.4zM1735.0 477.6h3.6v3.6h-3.6zM1734.7 480.5h2.3v2.3h-2.3zM1708.1 470.7h3.0v3.0h-3.0zM1729.0 469.8h2.4v2.4h-2.4zM1739.0 473.1h2.2v2.2h-2.2zM1709.6 475.8h3.5v3.5h-3.5zM1707.8 467.4h1.7v1.7h-1.7zM1732.6 462.8h2.3v2.3h-2.3zM1709.5 465.6h2.5v2.5h-2.5zM1707.6 472.9h1.8v1.8h-1.8zM1707.5 476.1h2.5v2.5h-2.5zM1713.8 462.2h3.4v3.4h-3.4zM1716.8 458.5h2.1v2.1h-2.1zM1708.4 476.2h2.8v2.8h-2.8zM1711.2 461.7h3.4v3.4h-3.4zM1701.0 476.7h1.7v1.7h-1.7zM1708.5 459.7h2.7v2.7h-2.7zM1695.4 468.5h2.8v2.8h-2.8zM1708.5 464.5h3.2v3.2h-3.2zM1704.9 477.0h3.3v3.3h-3.3zM1739.8 466.3h3.0v3.0h-3.0zM1743.6 473.0h2.2v2.2h-2.2zM1746.2 465.3h2.7v2.7h-2.7zM1745.0 461.7h3.5v3.5h-3.5zM1741.6 463.2h1.9v1.9h-1.9zM1742.7 469.5h2.9v2.9h-2.9zM1663.3 496.9h3.1v3.1h-3.1zM1655.0 514.7h2.2v2.2h-2.2zM1672.1 515.6h2.3v2.3h-2.3zM1673.4 515.8h1.8v1.8h-1.8zM1676.2 520.5h2.1v2.1h-2.1zM1679.3 525.8h2.2v2.2h-2.2zM1652.6 512.2h2.3v2.3h-2.3zM1668.5 497.4h2.8v2.8h-2.8zM1674.7 528.0h3.6v3.6h-3.6zM1650.5 522.5h2.4v2.4h-2.4zM1655.1 517.7h2.1v2.1h-2.1zM1673.5 514.7h3.6v3.6h-3.6zM1651.5 507.4h2.4v2.4h-2.4zM1674.6 505.7h3.3v3.3h-3.3zM1651.4 514.7h3.4v3.4h-3.4zM1661.5 501.7h3.2v3.2h-3.2zM1659.8 517.9h2.7v2.7h-2.7zM1656.2 523.5h2.1v2.1h-2.1zM1668.7 498.9h3.3v3.3h-3.3zM1669.4 508.8h3.1v3.1h-3.1zM1672.0 503.1h2.0v2.0h-2.0zM1642.3 512.2h3.3v3.3h-3.3zM1646.2 510.4h2.9v2.9h-2.9zM1651.6 516.4h2.6v2.6h-2.6zM1645.2 522.0h2.6v2.6h-2.6zM1652.8 515.4h2.8v2.8h-2.8zM1648.1 514.9h3.5v3.5h-3.5zM1648.2 521.5h1.9v1.9h-1.9zM1683.5 515.4h2.1v2.1h-2.1zM1687.1 514.6h2.7v2.7h-2.7zM1687.8 507.5h3.6v3.6h-3.6zM1692.5 504.1h3.6v3.6h-3.6zM1682.8 507.5h2.5v2.5h-2.5zM1686.9 498.2h2.8v2.8h-2.8zM1688.4 513.4h2.2v2.2h-2.2zM1677.9 497.5h3.2v3.2h-3.2zM1681.5 508.1h1.7v1.7h-1.7zM1693.1 508.0h3.4v3.4h-3.4zM1621.9 527.5h2.2v2.2h-2.2zM1618.7 526.9h3.4v3.4h-3.4zM1716.7 521.9h2.3v2.3h-2.3zM1714.0 519.3h2.5v2.5h-2.5zM1716.7 521.5h2.1v2.1h-2.1zM1713.9 526.1h2.2v2.2h-2.2zM1708.1 518.9h1.4v1.4h-1.4zM1714.8 524.0h1.6v1.6h-1.6zM1740.7 515.7h1.2v1.2h-1.2zM1738.3 514.0h1.3v1.3h-1.3zM1742.1 518.3h1.7v1.7h-1.7zM1742.1 517.4h2.2v2.2h-2.2zM1747.5 513.7h2.0v2.0h-2.0zM1740.8 518.6h2.6v2.6h-2.6zM1749.2 544.3h2.3v2.3h-2.3zM1751.6 548.0h1.2v1.2h-1.2zM1746.8 551.0h1.4v1.4h-1.4zM1748.3 551.3h2.0v2.0h-2.0zM1741.6 543.6h2.6v2.6h-2.6zM1571.3 531.5h2.1v2.1h-2.1zM1575.0 540.3h2.3v2.3h-2.3zM1570.1 537.1h1.3v1.3h-1.3zM1545.1 548.4h1.9v1.9h-1.9zM1542.3 550.2h1.9v1.9h-1.9zM1534.6 542.3h1.4v1.4h-1.4zM1540.2 539.9h2.2v2.2h-2.2zM1545.4 547.4h1.6v1.6h-1.6zM1539.7 549.4h1.2v1.2h-1.2zM910.6 741.0h3.5v3.5h-3.5zM918.0 751.1h2.6v2.6h-2.6zM909.5 739.5h2.6v2.6h-2.6zM910.5 743.9h2.5v2.5h-2.5zM914.1 745.7h3.1v3.1h-3.1zM915.9 741.7h2.2v2.2h-2.2zM943.4 749.7h3.6v3.6h-3.6zM945.6 749.0h3.0v3.0h-3.0zM941.4 750.8h3.3v3.3h-3.3zM1031.7 730.8h2.0v2.0h-2.0zM1030.5 734.7h2.0v2.0h-2.0zM1044.3 745.9h1.9v1.9h-1.9zM1040.3 732.3h2.3v2.3h-2.3zM1032.4 743.9h2.0v2.0h-2.0zM1043.6 734.5h2.0v2.0h-2.0zM1047.5 725.6h2.8v2.8h-2.8zM1034.7 728.3h3.1v3.1h-3.1zM1032.1 747.9h3.1v3.1h-3.1zM1027.8 733.3h1.7v1.7h-1.7zM1047.6 742.3h2.1v2.1h-2.1zM1032.1 742.2h1.7v1.7h-1.7zM1049.2 726.0h3.3v3.3h-3.3zM1043.6 734.8h2.4v2.4h-2.4zM1049.3 741.8h3.1v3.1h-3.1zM1037.6 722.0h3.3v3.3h-3.3zM1044.5 722.2h2.3v2.3h-2.3zM1024.6 733.1h1.8v1.8h-1.8zM1048.6 753.0h3.2v3.2h-3.2zM1038.7 750.6h3.0v3.0h-3.0zM1036.3 763.6h3.6v3.6h-3.6zM1040.9 755.9h2.0v2.0h-2.0zM1038.1 745.9h2.7v2.7h-2.7zM1032.1 750.7h3.3v3.3h-3.3zM1024.9 751.6h3.2v3.2h-3.2zM1032.0 755.0h3.6v3.6h-3.6zM1035.7 758.1h3.4v3.4h-3.4zM927.4 666.9h3.3v3.3h-3.3zM916.5 663.9h2.5v2.5h-2.5zM926.3 666.6h2.6v2.6h-2.6zM920.1 660.8h2.3v2.3h-2.3zM926.2 652.2h3.0v3.0h-3.0zM1449.8 614.4h3.1v3.1h-3.1zM1439.6 598.4h2.3v2.3h-2.3zM1461.2 619.5h2.1v2.1h-2.1zM1469.1 600.9h3.4v3.4h-3.4zM1474.5 596.9h1.8v1.8h-1.8zM1465.3 616.0h3.6v3.6h-3.6zM1462.4 615.5h2.3v2.3h-2.3zM1458.8 597.6h2.2v2.2h-2.2zM1466.5 612.4h1.8v1.8h-1.8zM1462.6 609.0h2.2v2.2h-2.2zM1455.7 620.1h2.7v2.7h-2.7zM1442.5 605.0h2.1v2.1h-2.1zM1450.2 612.7h1.9v1.9h-1.9zM1463.4 597.1h2.9v2.9h-2.9zM1469.4 598.5h3.5v3.5h-3.5zM1449.1 594.7h1.8v1.8h-1.8zM1461.8 616.4h2.0v2.0h-2.0zM1472.4 610.5h2.9v2.9h-2.9zM1443.6 599.6h3.1v3.1h-3.1zM1458.2 591.0h2.2v2.2h-2.2zM1461.0 619.9h1.8v1.8h-1.8zM1462.9 613.8h2.5v2.5h-2.5zM1444.7 594.8h3.6v3.6h-3.6zM1453.4 590.7h2.8v2.8h-2.8zM1453.3 585.0h3.0v3.0h-3.0zM1439.4 581.2h3.6v3.6h-3.6zM1443.0 588.0h3.6v3.6h-3.6zM1452.3 581.1h2.1v2.1h-2.1zM1439.3 593.8h1.8v1.8h-1.8zM1450.1 586.7h3.0v3.0h-3.0zM1450.3 586.4h3.3v3.3h-3.3zM1473.9 615.5h2.6v2.6h-2.6zM1470.5 622.8h1.7v1.7h-1.7zM1472.8 620.6h1.9v1.9h-1.9zM1472.2 631.9h3.3v3.3h-3.3zM1472.8 617.4h1.7v1.7h-1.7zM1472.6 632.3h2.7v2.7h-2.7zM1487.0 628.4h2.2v2.2h-2.2zM1481.4 619.2h2.1v2.1h-2.1zM1486.2 623.6h1.6v1.6h-1.6zM1487.4 620.7h2.3v2.3h-2.3zM1509.8 640.5h2.3v2.3h-2.3zM1506.8 633.2h1.5v1.5h-1.5zM1514.3 638.2h2.0v2.0h-2.0zM1507.6 636.1h2.3v2.3h-2.3zM1510.5 641.0h2.0v2.0h-2.0zM1442.2 548.4h3.6v3.6h-3.6zM1439.1 541.0h3.2v3.2h-3.2zM1438.1 551.2h3.6v3.6h-3.6zM1439.0 547.0h3.5v3.5h-3.5zM1453.4 550.5h1.8v1.8h-1.8zM1449.1 545.3h2.9v2.9h-2.9zM1443.3 542.1h2.3v2.3h-2.3zM1452.7 546.2h1.9v1.9h-1.9zM1440.2 546.0h3.1v3.1h-3.1zM1448.2 549.7h3.2v3.2h-3.2zM1468.8 545.5h3.6v3.6h-3.6zM1460.9 535.5h2.2v2.2h-2.2zM1460.9 550.1h1.8v1.8h-1.8zM1467.6 545.6h3.6v3.6h-3.6zM1466.0 536.1h2.2v2.2h-2.2zM1467.2 541.4h3.3v3.3h-3.3zM1467.7 545.4h2.0v2.0h-2.0zM1456.6 549.7h2.8v2.8h-2.8zM1465.4 537.2h3.5v3.5h-3.5zM1460.5 536.1h1.9v1.9h-1.9zM1460.7 539.7h3.5v3.5h-3.5zM1467.8 545.8h3.5v3.5h-3.5zM1477.4 538.2h2.0v2.0h-2.0zM1479.2 545.3h3.1v3.1h-3.1zM1480.8 549.4h2.2v2.2h-2.2zM1485.7 535.1h3.6v3.6h-3.6zM1495.9 538.8h2.2v2.2h-2.2zM1483.4 542.0h3.2v3.2h-3.2zM1486.7 549.2h3.2v3.2h-3.2zM1496.8 540.6h3.1v3.1h-3.1zM1488.7 539.7h3.0v3.0h-3.0zM1505.9 551.8h2.0v2.0h-2.0zM1501.4 551.4h2.6v2.6h-2.6zM1640.6 612.2h3.0v3.0h-3.0zM1643.0 606.1h3.2v3.2h-3.2zM1653.0 613.0h3.3v3.3h-3.3zM1648.6 616.6h3.2v3.2h-3.2zM1641.6 622.5h3.4v3.4h-3.4zM1641.7 608.9h2.7v2.7h-2.7zM1639.6 610.1h3.5v3.5h-3.5zM1643.8 614.0h2.9v2.9h-2.9zM1653.1 614.1h3.3v3.3h-3.3zM1613.5 692.4h2.5v2.5h-2.5zM1612.9 681.8h1.7v1.7h-1.7zM1616.0 693.5h2.4v2.4h-2.4zM1612.2 691.3h1.5v1.5h-1.5zM1618.2 694.4h1.6v1.6h-1.6zM1613.0 686.5h2.1v2.1h-2.1zM1617.2 686.6h2.0v2.0h-2.0zM1629.3 735.3h2.0v2.0h-2.0zM1618.6 740.1h3.0v3.0h-3.0zM1619.8 730.1h3.3v3.3h-3.3zM1628.9 730.6h3.0v3.0h-3.0zM883.8 821.8h1.5v1.5h-1.5zM889.4 826.0h1.7v1.7h-1.7zM884.0 817.6h2.3v2.3h-2.3zM887.7 826.5h1.4v1.4h-1.4zM881.4 821.2h1.3v1.3h-1.3zM893.5 865.6h1.8v1.8h-1.8zM898.2 858.2h2.2v2.2h-2.2zM897.0 866.8h1.6v1.6h-1.6zM906.0 903.6h1.8v1.8h-1.8zM896.5 900.2h1.8v1.8h-1.8zM896.6 907.3h1.2v1.2h-1.2zM899.5 949.1h2.0v2.0h-2.0zM896.0 950.0h1.8v1.8h-1.8zM894.0 946.7h1.9v1.9h-1.9zM894.9 951.6h2.2v2.2h-2.2zM890.0 945.6h2.4v2.4h-2.4zM1043.2 796.3h3.0v3.0h-3.0zM1045.4 778.8h2.5v2.5h-2.5zM1043.7 794.0h3.4v3.4h-3.4zM1053.9 787.3h2.6v2.6h-2.6zM1047.7 779.0h3.2v3.2h-3.2zM1049.7 781.0h2.1v2.1h-2.1zM1053.4 780.0h3.3v3.3h-3.3zM1046.8 779.6h3.5v3.5h-3.5zM1062.1 843.1h2.0v2.0h-2.0zM1044.0 841.4h3.5v3.5h-3.5zM1044.7 846.4h3.3v3.3h-3.3zM1038.8 842.6h1.9v1.9h-1.9zM1046.3 836.4h2.9v2.9h-2.9zM1046.4 850.7h1.7v1.7h-1.7zM1040.8 839.8h2.7v2.7h-2.7zM1036.3 842.6h3.4v3.4h-3.4zM1054.6 837.8h2.7v2.7h-2.7zM1058.2 846.7h2.9v2.9h-2.9zM1055.3 858.6h2.5v2.5h-2.5zM1056.9 856.0h3.2v3.2h-3.2zM1057.9 836.2h1.9v1.9h-1.9zM1047.0 849.6h3.3v3.3h-3.3zM1057.6 855.3h3.4v3.4h-3.4zM1062.6 850.0h2.5v2.5h-2.5zM1090.5 839.7h2.3v2.3h-2.3zM1089.8 839.1h1.6v1.6h-1.6zM1089.2 848.8h2.0v2.0h-2.0zM1140.7 837.4h1.6v1.6h-1.6zM1128.8 834.8h1.5v1.5h-1.5zM1136.3 845.4h1.7v1.7h-1.7zM1131.5 840.6h2.5v2.5h-2.5zM1130.5 843.8h2.2v2.2h-2.2zM1169.1 836.0h2.3v2.3h-2.3zM1174.3 833.9h1.6v1.6h-1.6zM1170.7 831.9h2.3v2.3h-2.3zM1170.6 835.4h2.1v2.1h-2.1zM1171.3 830.8h1.3v1.3h-1.3zM1036.5 762.0h1.5v1.5h-1.5zM1043.0 762.0h1.4v1.4h-1.4zM1038.6 764.5h1.6v1.6h-1.6zM1040.4 758.3h2.4v2.4h-2.4zM1039.6 761.2h1.6v1.6h-1.6zM1147.1 933.1h3.0v3.0h-3.0zM1151.6 938.2h2.7v2.7h-2.7zM1144.6 926.4h1.8v1.8h-1.8zM1129.9 931.0h2.9v2.9h-2.9zM1137.1 949.6h3.2v3.2h-3.2zM1148.4 932.6h2.3v2.3h-2.3zM1142.4 942.8h3.4v3.4h-3.4zM1139.8 929.3h3.4v3.4h-3.4zM1137.8 942.5h2.4v2.4h-2.4zM1139.1 946.8h2.9v2.9h-2.9zM1134.0 929.7h3.0v3.0h-3.0zM1128.2 936.6h2.7v2.7h-2.7zM1147.0 942.0h1.8v1.8h-1.8zM1141.2 949.7h2.4v2.4h-2.4zM1138.2 943.8h3.4v3.4h-3.4zM1197.0 940.1h3.5v3.5h-3.5zM1203.2 928.7h1.9v1.9h-1.9zM1201.1 926.8h3.6v3.6h-3.6zM1194.4 934.3h2.9v2.9h-2.9zM1201.4 922.2h3.4v3.4h-3.4zM1180.1 927.5h1.9v1.9h-1.9zM1203.8 931.7h2.1v2.1h-2.1zM1185.9 922.7h2.8v2.8h-2.8zM1189.1 924.4h3.1v3.1h-3.1zM1185.7 938.5h3.6v3.6h-3.6zM1175.3 925.3h1.9v1.9h-1.9zM1177.7 919.8h2.3v2.3h-2.3zM1201.7 933.3h2.6v2.6h-2.6zM1184.6 931.5h3.3v3.3h-3.3zM1201.8 925.7h2.0v2.0h-2.0zM1180.7 929.5h2.1v2.1h-2.1zM1184.7 927.9h2.7v2.7h-2.7zM1202.1 935.6h2.3v2.3h-2.3zM1196.6 937.7h3.3v3.3h-3.3zM1241.7 836.9h2.1v2.1h-2.1zM1236.7 825.4h2.6v2.6h-2.6zM1238.9 825.5h2.1v2.1h-2.1zM1235.4 818.8h2.5v2.5h-2.5zM1236.0 823.6h1.6v1.6h-1.6zM1235.1 812.7h1.5v1.5h-1.5zM1267.3 832.8h2.1v2.1h-2.1zM1332.4 833.8h2.6v2.6h-2.6zM1329.8 841.2h2.5v2.5h-2.5zM1376.7 836.9h2.6v2.6h-2.6zM1377.5 838.6h1.6v1.6h-1.6zM1377.1 832.3h1.4v1.4h-1.4zM1368.1 836.3h2.1v2.1h-2.1zM1371.0 840.6h1.6v1.6h-1.6zM1414.5 827.3h1.5v1.5h-1.5zM1424.8 830.1h1.4v1.4h-1.4zM1421.0 830.6h1.9v1.9h-1.9zM1464.2 822.1h2.4v2.4h-2.4zM1463.2 821.6h1.5v1.5h-1.5zM1462.6 819.6h1.8v1.8h-1.8zM1459.5 821.1h1.9v1.9h-1.9zM1465.4 822.2h1.7v1.7h-1.7zM1502.9 824.1h2.2v2.2h-2.2zM1511.7 818.8h2.5v2.5h-2.5zM1503.4 823.9h2.5v2.5h-2.5zM1503.0 824.5h1.7v1.7h-1.7zM1498.9 852.9h2.6v2.6h-2.6zM1500.6 854.9h2.0v2.0h-2.0zM1504.1 857.4h3.3v3.3h-3.3zM1510.8 852.7h2.8v2.8h-2.8zM1510.8 849.0h2.2v2.2h-2.2zM1497.4 852.0h3.0v3.0h-3.0zM1499.5 853.9h2.3v2.3h-2.3zM1511.6 856.3h3.6v3.6h-3.6zM1498.7 855.2h2.7v2.7h-2.7zM1433.3 867.6h1.4v1.4h-1.4zM1432.6 873.9h1.3v1.3h-1.3zM1432.3 865.7h1.7v1.7h-1.7zM1434.3 875.0h1.6v1.6h-1.6zM1369.6 915.9h2.3v2.3h-2.3zM1372.5 894.1h3.1v3.1h-3.1zM1366.3 901.8h3.6v3.6h-3.6zM1364.8 916.5h3.5v3.5h-3.5zM1377.9 902.3h2.3v2.3h-2.3zM1370.6 915.6h3.1v3.1h-3.1zM1362.1 912.9h2.7v2.7h-2.7zM1372.7 910.0h2.6v2.6h-2.6zM1377.8 914.8h3.1v3.1h-3.1zM1368.1 916.9h1.7v1.7h-1.7zM1357.8 915.2h2.2v2.2h-2.2zM1370.2 906.0h2.7v2.7h-2.7zM1365.7 895.3h2.1v2.1h-2.1zM1380.6 907.5h1.7v1.7h-1.7zM1361.7 900.3h3.1v3.1h-3.1zM1332.1 913.8h2.5v2.5h-2.5zM1330.7 921.6h1.7v1.7h-1.7zM1327.4 923.3h3.4v3.4h-3.4zM1345.3 919.8h3.1v3.1h-3.1zM1328.0 920.9h1.9v1.9h-1.9zM1328.0 921.7h1.8v1.8h-1.8zM1328.9 923.6h2.0v2.0h-2.0zM1341.2 908.5h3.0v3.0h-3.0zM1247.4 914.5h3.5v3.5h-3.5zM1248.7 913.6h3.4v3.4h-3.4zM1244.0 930.0h1.7v1.7h-1.7zM1251.9 935.4h1.8v1.8h-1.8zM1251.0 914.6h2.1v2.1h-2.1zM1262.1 920.9h2.1v2.1h-2.1zM1255.4 930.2h2.3v2.3h-2.3zM1249.0 924.8h3.0v3.0h-3.0zM1260.9 932.9h3.5v3.5h-3.5zM1239.9 920.7h2.5v2.5h-2.5zM1259.0 925.6h1.8v1.8h-1.8zM1247.1 912.0h3.1v3.1h-3.1zM1254.4 923.0h3.1v3.1h-3.1zM1305.8 951.3h2.1v2.1h-2.1zM1298.1 933.0h1.9v1.9h-1.9zM1300.5 944.2h2.9v2.9h-2.9zM1311.8 929.2h2.7v2.7h-2.7zM1290.5 939.8h1.9v1.9h-1.9zM1303.2 947.2h3.3v3.3h-3.3zM1293.0 938.7h3.6v3.6h-3.6zM1291.7 930.7h2.7v2.7h-2.7zM1301.4 947.5h3.2v3.2h-3.2zM1294.9 931.6h3.5v3.5h-3.5zM1306.0 934.3h1.9v1.9h-1.9zM1308.3 938.7h2.1v2.1h-2.1zM1312.8 932.3h3.2v3.2h-3.2zM1299.2 945.2h2.0v2.0h-2.0zM1302.0 940.3h3.0v3.0h-3.0zM1311.3 937.9h2.9v2.9h-2.9zM1533.1 772.3h1.9v1.9h-1.9zM1528.6 770.8h1.5v1.5h-1.5zM1535.7 767.3h2.4v2.4h-2.4zM1617.6 782.1h1.7v1.7h-1.7zM1631.5 788.8h3.2v3.2h-3.2zM1618.7 796.8h2.9v2.9h-2.9zM1628.3 800.4h2.4v2.4h-2.4zM1618.5 787.2h3.1v3.1h-3.1zM1637.8 787.1h3.5v3.5h-3.5zM1637.1 782.4h3.2v3.2h-3.2zM1637.5 794.0h3.2v3.2h-3.2zM1629.2 787.5h2.0v2.0h-2.0zM1618.1 781.9h1.7v1.7h-1.7zM1621.9 768.7h3.1v3.1h-3.1zM1626.6 769.9h3.0v3.0h-3.0zM1626.5 769.0h2.5v2.5h-2.5zM1628.5 776.6h1.7v1.7h-1.7zM1624.3 780.8h1.8v1.8h-1.8zM1621.8 781.4h3.3v3.3h-3.3zM1618.5 774.8h1.9v1.9h-1.9zM1615.9 775.9h2.8v2.8h-2.8zM1643.5 833.6h2.1v2.1h-2.1zM1646.2 841.3h3.6v3.6h-3.6zM1636.9 856.2h1.7v1.7h-1.7zM1625.3 846.9h3.1v3.1h-3.1zM1629.2 840.9h3.3v3.3h-3.3zM1630.8 853.2h2.2v2.2h-2.2zM1643.9 841.4h2.2v2.2h-2.2zM1631.4 839.0h2.5v2.5h-2.5zM1638.0 842.6h3.0v3.0h-3.0zM1648.0 845.9h2.2v2.2h-2.2zM1638.2 851.6h2.3v2.3h-2.3zM1639.7 837.8h3.2v3.2h-3.2zM1639.4 855.2h3.5v3.5h-3.5zM1639.0 834.4h2.7v2.7h-2.7zM1643.5 852.6h3.4v3.4h-3.4zM1645.4 873.0h2.7v2.7h-2.7zM1646.6 864.7h3.1v3.1h-3.1zM1638.5 871.2h2.5v2.5h-2.5zM1643.6 876.0h2.7v2.7h-2.7zM1631.9 893.6h2.1v2.1h-2.1zM1625.3 890.0h2.6v2.6h-2.6zM1627.3 895.0h2.4v2.4h-2.4zM1624.9 892.5h2.7v2.7h-2.7zM1632.6 901.1h3.6v3.6h-3.6zM1627.5 905.1h2.9v2.9h-2.9zM1669.8 899.5h1.9v1.9h-1.9zM1666.4 895.5h3.5v3.5h-3.5zM1672.3 893.4h2.4v2.4h-2.4zM1671.3 893.9h3.5v3.5h-3.5zM1539.8 787.1h1.8v1.8h-1.8zM1546.1 777.7h3.2v3.2h-3.2zM1548.5 785.8h1.8v1.8h-1.8zM1538.8 773.7h3.3v3.3h-3.3zM1546.8 781.3h2.0v2.0h-2.0zM1537.6 769.6h3.3v3.3h-3.3zM1548.9 783.4h2.2v2.2h-2.2zM1547.6 775.2h3.2v3.2h-3.2zM1536.8 784.7h2.2v2.2h-2.2zM1546.4 785.1h1.7v1.7h-1.7zM1542.5 804.9h3.3v3.3h-3.3zM1546.6 804.7h3.4v3.4h-3.4zM1550.7 810.4h2.7v2.7h-2.7zM1548.0 815.6h2.8v2.8h-2.8zM1523.4 697.8h2.0v2.0h-2.0zM1530.9 751.1h2.3v2.3h-2.3zM1209.6 583.4h2.4v2.4h-2.4zM1208.3 585.8h2.3v2.3h-2.3zM1214.1 590.4h1.4v1.4h-1.4zM1206.6 594.8h1.4v1.4h-1.4zM1229.4 607.6h2.1v2.1h-2.1zM1225.5 598.4h2.5v2.5h-2.5zM1229.3 596.3h2.0v2.0h-2.0zM1234.2 602.7h1.4v1.4h-1.4zM1230.0 600.0h1.6v1.6h-1.6zM1240.9 616.6h2.3v2.3h-2.3zM1253.0 617.3h1.7v1.7h-1.7zM1266.5 629.2h1.4v1.4h-1.4zM1266.8 630.6h1.4v1.4h-1.4zM1267.9 632.8h2.4v2.4h-2.4zM1222.7 694.1h3.0v3.0h-3.0zM1221.8 693.9h1.9v1.9h-1.9zM1225.5 694.8h1.9v1.9h-1.9zM1227.9 686.0h2.7v2.7h-2.7zM1228.8 687.5h3.4v3.4h-3.4zM1223.3 694.9h2.0v2.0h-2.0zM1260.6 689.4h1.5v1.5h-1.5zM1250.3 692.3h1.5v1.5h-1.5zM1249.5 694.2h1.8v1.8h-1.8zM1252.6 693.7h2.1v2.1h-2.1zM1198.1 587.0h2.0v2.0h-2.0zM1197.3 589.3h1.4v1.4h-1.4zM1197.9 584.9h2.4v2.4h-2.4zM1180.2 708.0h2.7v2.7h-2.7zM1182.4 707.1h3.4v3.4h-3.4zM1179.9 704.1h3.6v3.6h-3.6zM1202.7 699.8h1.5v1.5h-1.5zM1196.7 696.9h2.0v2.0h-2.0zM1196.2 699.6h1.9v1.9h-1.9zM1200.7 696.1h1.5v1.5h-1.5zM1199.4 698.5h1.9v1.9h-1.9z"/>
<path fill="#30382a" d="M1128.9 216.3h2.1v2.1h-2.1zM1124.1 216.3h2.2v2.2h-2.2zM1122.3 214.0h2.9v2.9h-2.9zM1093.4 234.3h2.4v2.4h-2.4zM1088.2 244.7h3.2v3.2h-3.2zM1083.2 240.9h3.2v3.2h-3.2zM1097.7 245.1h2.4v2.4h-2.4zM1083.9 232.6h2.9v2.9h-2.9zM1084.1 243.3h1.7v1.7h-1.7zM1097.8 239.9h2.6v2.6h-2.6zM1092.1 233.3h1.8v1.8h-1.8zM1086.4 237.2h2.3v2.3h-2.3zM1089.2 250.5h2.0v2.0h-2.0zM1097.6 238.7h2.8v2.8h-2.8zM1134.4 238.3h1.5v1.5h-1.5zM1139.7 238.3h1.6v1.6h-1.6zM1133.1 238.8h2.0v2.0h-2.0zM1176.8 226.2h1.7v1.7h-1.7zM1184.5 219.3h2.8v2.8h-2.8zM1184.2 230.2h1.9v1.9h-1.9zM1175.0 217.4h2.1v2.1h-2.1zM1177.4 226.4h3.5v3.5h-3.5zM1180.8 218.3h2.8v2.8h-2.8zM1177.8 217.1h1.8v1.8h-1.8zM1179.5 219.2h3.6v3.6h-3.6zM1004.4 325.1h2.5v2.5h-2.5zM1015.0 325.3h3.6v3.6h-3.6zM1005.3 330.8h2.5v2.5h-2.5zM1011.6 326.0h2.8v2.8h-2.8zM1011.3 332.1h3.2v3.2h-3.2zM1003.8 326.7h3.2v3.2h-3.2zM986.0 340.0h2.5v2.5h-2.5zM980.5 343.9h3.3v3.3h-3.3zM986.4 353.0h2.6v2.6h-2.6zM989.7 353.3h3.5v3.5h-3.5zM991.7 344.2h3.0v3.0h-3.0zM985.8 351.3h3.1v3.1h-3.1zM1224.7 289.1h1.6v1.6h-1.6zM1222.2 289.1h2.5v2.5h-2.5zM1249.5 287.1h1.7v1.7h-1.7zM1240.3 287.0h1.8v1.8h-1.8zM1246.1 277.0h2.1v2.1h-2.1zM1245.4 285.3h1.2v1.2h-1.2zM1257.7 275.0h1.3v1.3h-1.3zM1261.9 279.6h1.2v1.2h-1.2zM1260.6 285.5h2.1v2.1h-2.1zM1279.7 280.9h2.4v2.4h-2.4zM1284.7 284.0h2.3v2.3h-2.3zM1281.0 283.7h2.5v2.5h-2.5zM1283.1 280.1h2.4v2.4h-2.4zM1274.2 281.5h2.3v2.3h-2.3zM1300.2 281.3h2.9v2.9h-2.9zM1297.2 277.3h1.7v1.7h-1.7zM1311.9 285.3h1.8v1.8h-1.8zM1320.8 287.3h2.8v2.8h-2.8zM1318.0 296.9h1.3v1.3h-1.3zM1320.8 304.0h1.6v1.6h-1.6zM1314.0 307.6h2.5v2.5h-2.5zM1318.8 306.1h2.5v2.5h-2.5zM1311.6 300.7h2.2v2.2h-2.2zM1319.3 303.7h1.5v1.5h-1.5zM1310.8 315.0h2.0v2.0h-2.0zM1311.8 310.8h2.3v2.3h-2.3zM1304.7 310.0h2.3v2.3h-2.3zM1307.9 315.9h1.8v1.8h-1.8zM1305.2 311.7h2.5v2.5h-2.5zM1313.9 320.2h1.6v1.6h-1.6zM1308.9 318.9h1.7v1.7h-1.7zM1300.7 327.6h3.0v3.0h-3.0zM1302.0 331.6h3.3v3.3h-3.3zM1302.5 324.9h2.0v2.0h-2.0zM1305.9 324.4h1.7v1.7h-1.7zM1309.8 324.4h3.3v3.3h-3.3zM1307.4 325.1h2.0v2.0h-2.0zM1298.4 321.2h3.4v3.4h-3.4zM1298.8 320.8h2.5v2.5h-2.5zM1306.3 328.8h2.0v2.0h-2.0zM1433.7 220.9h3.0v3.0h-3.0zM1421.5 216.7h2.2v2.2h-2.2zM1423.7 221.0h3.2v3.2h-3.2zM1424.4 233.8h1.9v1.9h-1.9zM1417.1 217.0h3.5v3.5h-3.5zM1442.7 221.7h2.1v2.1h-2.1zM1416.7 221.1h2.1v2.1h-2.1zM1418.4 225.9h2.2v2.2h-2.2zM1441.1 228.0h3.6v3.6h-3.6zM1440.9 230.0h2.3v2.3h-2.3zM1432.1 231.7h1.7v1.7h-1.7zM1437.6 226.3h2.6v2.6h-2.6zM1441.9 212.9h3.6v3.6h-3.6zM1425.4 212.2h1.8v1.8h-1.8zM1479.5 197.0h2.5v2.5h-2.5zM1479.8 190.5h2.6v2.6h-2.6zM1477.4 193.2h3.0v3.0h-3.0zM1485.8 188.0h2.7v2.7h-2.7zM1483.1 183.4h1.9v1.9h-1.9zM1486.4 188.5h2.4v2.4h-2.4zM1493.1 189.2h1.8v1.8h-1.8zM1481.3 196.3h2.3v2.3h-2.3zM1480.1 198.5h1.7v1.7h-1.7zM1490.0 185.4h3.3v3.3h-3.3zM1491.5 194.9h2.9v2.9h-2.9zM1488.6 228.7h2.2v2.2h-2.2zM1479.8 219.3h2.4v2.4h-2.4zM1480.5 226.0h3.5v3.5h-3.5zM1496.2 222.7h2.3v2.3h-2.3zM1486.9 218.2h2.0v2.0h-2.0zM1491.5 227.8h2.1v2.1h-2.1zM1491.1 218.2h2.6v2.6h-2.6zM1490.9 221.4h2.1v2.1h-2.1zM1484.5 211.7h2.3v2.3h-2.3zM1484.1 211.9h3.1v3.1h-3.1zM1499.2 216.2h1.9v1.9h-1.9zM1480.6 219.9h2.0v2.0h-2.0zM1486.2 231.9h2.1v2.1h-2.1zM1406.3 347.8h2.1v2.1h-2.1zM1415.0 341.9h2.1v2.1h-2.1zM1399.0 341.1h2.3v2.3h-2.3zM1413.7 342.7h3.1v3.1h-3.1zM1414.9 343.6h2.7v2.7h-2.7zM1396.3 348.3h2.9v2.9h-2.9zM1565.6 188.9h2.3v2.3h-2.3zM1568.3 192.8h2.7v2.7h-2.7zM1560.9 192.4h1.8v1.8h-1.8zM1556.5 208.0h3.3v3.3h-3.3zM1577.0 199.2h1.8v1.8h-1.8zM1563.8 202.9h2.3v2.3h-2.3zM1562.0 177.6h3.5v3.5h-3.5zM1566.3 179.4h2.6v2.6h-2.6zM1577.6 192.2h3.1v3.1h-3.1zM1548.4 200.6h1.9v1.9h-1.9zM1576.7 197.2h2.0v2.0h-2.0zM1550.9 192.4h1.8v1.8h-1.8zM1559.9 177.0h3.3v3.3h-3.3zM1566.2 203.1h2.9v2.9h-2.9zM1556.6 202.8h3.4v3.4h-3.4zM1567.1 209.2h2.0v2.0h-2.0zM1552.5 177.5h3.1v3.1h-3.1zM1663.2 165.4h2.0v2.0h-2.0zM1662.0 169.7h2.3v2.3h-2.3zM1658.9 185.3h2.6v2.6h-2.6zM1667.5 174.6h2.7v2.7h-2.7zM1666.9 181.4h3.2v3.2h-3.2zM1655.7 168.5h1.8v1.8h-1.8zM1660.2 176.0h2.6v2.6h-2.6zM1670.5 170.8h2.1v2.1h-2.1zM1662.0 166.4h3.3v3.3h-3.3zM1659.1 162.6h2.5v2.5h-2.5zM1660.1 159.1h3.5v3.5h-3.5zM1728.9 294.1h3.1v3.1h-3.1zM1722.2 311.3h2.1v2.1h-2.1zM1715.5 309.8h3.4v3.4h-3.4zM1737.6 299.0h2.3v2.3h-2.3zM1716.8 294.3h3.4v3.4h-3.4zM1720.9 304.6h2.8v2.8h-2.8zM1728.1 327.4h2.0v2.0h-2.0zM1720.8 308.3h3.3v3.3h-3.3zM1716.4 304.0h2.8v2.8h-2.8zM1711.4 305.9h2.0v2.0h-2.0zM1724.1 311.1h3.0v3.0h-3.0zM1722.8 321.8h3.6v3.6h-3.6zM1728.7 307.3h2.7v2.7h-2.7zM1720.5 329.4h3.5v3.5h-3.5zM1713.1 311.8h3.5v3.5h-3.5zM1737.0 320.0h2.9v2.9h-2.9zM1724.8 314.8h2.6v2.6h-2.6zM1729.2 313.4h3.1v3.1h-3.1zM1717.5 303.7h3.1v3.1h-3.1zM1707.7 294.0h1.9v1.9h-1.9zM1706.1 312.1h2.3v2.3h-2.3zM1729.0 294.2h2.9v2.9h-2.9zM1733.7 299.2h2.5v2.5h-2.5zM1603.3 324.4h1.8v1.8h-1.8zM1599.0 323.9h1.6v1.6h-1.6zM1851.9 286.4h2.3v2.3h-2.3zM1847.5 286.4h2.3v2.3h-2.3zM1852.1 289.5h2.5v2.5h-2.5zM1844.7 285.3h1.6v1.6h-1.6zM1846.0 319.0h1.9v1.9h-1.9zM1847.8 319.9h2.6v2.6h-2.6zM1101.1 542.9h1.4v1.4h-1.4zM1108.7 534.2h1.4v1.4h-1.4zM1104.0 537.4h2.4v2.4h-2.4zM1106.0 538.3h1.7v1.7h-1.7zM1103.2 537.8h2.0v2.0h-2.0zM1102.4 534.9h1.8v1.8h-1.8zM1710.0 462.2h2.1v2.1h-2.1zM1721.7 466.1h2.6v2.6h-2.6zM1720.1 462.7h3.3v3.3h-3.3zM1729.8 480.6h2.9v2.9h-2.9zM1727.5 482.6h2.5v2.5h-2.5zM1715.2 462.1h3.3v3.3h-3.3zM1712.2 484.1h2.4v2.4h-2.4zM1738.3 473.7h1.8v1.8h-1.8zM1728.2 476.4h2.0v2.0h-2.0zM1716.6 471.6h1.8v1.8h-1.8zM1722.0 470.3h3.3v3.3h-3.3zM1726.3 456.7h3.3v3.3h-3.3zM1725.7 462.2h2.8v2.8h-2.8zM1723.2 458.4h3.5v3.5h-3.5zM1708.8 471.5h1.7v1.7h-1.7zM1720.4 481.5h3.5v3.5h-3.5zM1713.4 459.8h2.9v2.9h-2.9zM1698.2 469.0h2.4v2.4h-2.4zM1698.1 468.9h2.3v2.3h-2.3zM1712.3 475.1h2.2v2.2h-2.2zM1743.2 469.1h3.5v3.5h-3.5zM1747.9 469.1h2.8v2.8h-2.8zM1747.8 461.0h3.6v3.6h-3.6zM1737.6 470.6h2.0v2.0h-2.0zM1745.2 460.6h2.2v2.2h-2.2zM1659.5 523.4h2.5v2.5h-2.5zM1672.8 519.7h2.7v2.7h-2.7zM1675.5 523.0h2.7v2.7h-2.7zM1683.9 514.4h2.1v2.1h-2.1zM1665.2 528.5h1.9v1.9h-1.9zM1659.4 511.6h2.6v2.6h-2.6zM1651.9 509.4h3.2v3.2h-3.2zM1678.0 520.5h2.8v2.8h-2.8zM1680.7 504.3h1.7v1.7h-1.7zM1666.0 518.6h3.5v3.5h-3.5zM1655.4 516.2h2.6v2.6h-2.6zM1652.7 515.8h2.5v2.5h-2.5zM1651.4 509.2h1.9v1.9h-1.9zM1659.8 521.9h2.4v2.4h-2.4zM1658.2 520.4h1.8v1.8h-1.8zM1665.4 498.8h2.8v2.8h-2.8zM1656.0 519.8h2.3v2.3h-2.3zM1646.7 528.2h2.3v2.3h-2.3zM1643.0 515.1h3.6v3.6h-3.6zM1644.1 513.2h1.9v1.9h-1.9zM1643.9 519.2h1.9v1.9h-1.9zM1640.2 524.2h2.2v2.2h-2.2zM1657.1 518.2h3.3v3.3h-3.3zM1681.6 502.1h3.0v3.0h-3.0zM1683.2 498.1h2.5v2.5h-2.5zM1689.5 502.2h2.3v2.3h-2.3zM1676.8 513.4h3.3v3.3h-3.3zM1681.8 503.1h2.0v2.0h-2.0zM1676.0 504.9h3.4v3.4h-3.4zM1686.8 507.0h3.1v3.1h-3.1zM1684.3 498.3h2.9v2.9h-2.9zM1674.9 500.3h3.3v3.3h-3.3zM1682.7 504.5h2.7v2.7h-2.7zM1679.2 500.8h2.3v2.3h-2.3zM1617.8 519.8h3.3v3.3h-3.3zM1614.0 531.9h2.7v2.7h-2.7zM1617.8 532.5h1.9v1.9h-1.9zM1617.2 524.5h2.7v2.7h-2.7zM1613.6 530.8h2.9v2.9h-2.9zM1627.0 526.4h2.6v2.6h-2.6zM1619.6 520.1h3.1v3.1h-3.1zM1718.7 523.3h2.3v2.3h-2.3zM1740.6 520.8h1.6v1.6h-1.6zM1742.9 543.6h1.7v1.7h-1.7zM1569.7 537.0h2.1v2.1h-2.1zM1571.3 539.1h1.7v1.7h-1.7zM1576.1 539.0h1.6v1.6h-1.6zM1570.5 542.6h2.3v2.3h-2.3zM1539.8 546.6h1.5v1.5h-1.5zM1542.6 547.1h1.7v1.7h-1.7zM922.0 746.2h2.5v2.5h-2.5zM918.4 751.9h3.0v3.0h-3.0zM913.6 751.2h2.9v2.9h-2.9zM919.3 750.7h2.3v2.3h-2.3zM917.4 747.1h2.7v2.7h-2.7zM908.9 749.1h2.4v2.4h-2.4zM931.8 745.4h3.6v3.6h-3.6zM944.2 749.1h3.3v3.3h-3.3zM940.2 745.5h2.2v2.2h-2.2zM937.6 752.9h2.1v2.1h-2.1zM946.5 746.0h2.7v2.7h-2.7zM940.2 749.5h2.3v2.3h-2.3zM1036.4 735.5h2.8v2.8h-2.8zM1026.9 745.0h3.2v3.2h-3.2zM1037.5 741.9h2.1v2.1h-2.1zM1034.1 743.7h2.9v2.9h-2.9zM1036.1 735.9h2.4v2.4h-2.4zM1026.5 738.2h3.1v3.1h-3.1zM1048.6 724.7h3.2v3.2h-3.2zM1026.2 732.0h3.4v3.4h-3.4zM1043.0 725.7h2.8v2.8h-2.8zM1028.1 747.6h2.0v2.0h-2.0zM1034.3 726.6h2.8v2.8h-2.8zM1032.1 728.0h2.7v2.7h-2.7zM1049.9 731.5h2.7v2.7h-2.7zM1034.5 749.2h2.8v2.8h-2.8zM1051.7 745.9h2.3v2.3h-2.3zM1044.0 731.0h2.4v2.4h-2.4zM1030.6 746.1h2.1v2.1h-2.1zM1042.7 720.9h3.5v3.5h-3.5zM1031.6 723.7h2.5v2.5h-2.5zM1036.5 754.4h1.9v1.9h-1.9zM1026.9 751.8h1.9v1.9h-1.9zM1028.0 755.0h3.0v3.0h-3.0zM1024.8 749.5h3.6v3.6h-3.6zM1033.8 759.3h3.5v3.5h-3.5zM1035.4 761.1h3.4v3.4h-3.4zM1042.4 759.1h1.7v1.7h-1.7zM1026.9 759.0h3.3v3.3h-3.3zM1032.2 764.2h3.1v3.1h-3.1zM1039.3 763.6h3.3v3.3h-3.3zM1041.7 751.8h2.2v2.2h-2.2zM914.4 658.8h2.8v2.8h-2.8zM927.4 654.4h2.0v2.0h-2.0zM928.8 651.5h1.9v1.9h-1.9zM918.0 651.5h2.9v2.9h-2.9zM923.2 655.3h2.1v2.1h-2.1zM925.8 656.9h3.0v3.0h-3.0zM918.1 664.2h2.8v2.8h-2.8zM914.6 654.7h3.6v3.6h-3.6zM934.2 656.2h2.1v2.1h-2.1zM923.9 655.6h2.7v2.7h-2.7zM1450.8 590.4h2.0v2.0h-2.0zM1453.8 597.3h2.7v2.7h-2.7zM1470.1 597.2h2.9v2.9h-2.9zM1455.9 602.1h2.7v2.7h-2.7zM1460.5 608.7h2.2v2.2h-2.2zM1462.3 604.6h2.0v2.0h-2.0zM1460.4 613.7h2.5v2.5h-2.5zM1444.9 601.8h3.6v3.6h-3.6zM1447.7 615.2h2.8v2.8h-2.8zM1455.1 604.9h2.0v2.0h-2.0zM1462.8 604.7h1.7v1.7h-1.7zM1469.8 611.0h3.5v3.5h-3.5zM1471.4 596.3h1.8v1.8h-1.8zM1448.2 622.4h3.2v3.2h-3.2zM1446.7 613.9h2.9v2.9h-2.9zM1474.0 606.5h2.9v2.9h-2.9zM1437.4 606.1h1.7v1.7h-1.7zM1453.4 601.9h2.8v2.8h-2.8zM1472.5 600.2h2.8v2.8h-2.8zM1448.5 614.9h3.4v3.4h-3.4zM1461.2 623.7h2.8v2.8h-2.8zM1466.6 592.2h3.6v3.6h-3.6zM1445.0 610.8h2.5v2.5h-2.5zM1442.7 595.7h2.8v2.8h-2.8zM1447.2 590.1h2.6v2.6h-2.6zM1445.5 592.2h3.0v3.0h-3.0zM1452.7 587.8h2.4v2.4h-2.4zM1434.5 590.5h2.4v2.4h-2.4zM1446.8 587.4h3.0v3.0h-3.0zM1454.1 590.9h2.0v2.0h-2.0zM1447.7 590.3h3.2v3.2h-3.2zM1439.4 594.2h2.8v2.8h-2.8zM1466.5 630.2h3.3v3.3h-3.3zM1469.2 622.1h2.4v2.4h-2.4zM1459.2 621.9h3.0v3.0h-3.0zM1473.5 629.8h2.1v2.1h-2.1zM1474.9 619.9h2.1v2.1h-2.1zM1475.9 629.8h1.7v1.7h-1.7zM1475.6 628.1h2.3v2.3h-2.3zM1466.1 622.8h3.6v3.6h-3.6zM1465.0 624.6h3.2v3.2h-3.2zM1477.9 618.8h2.8v2.8h-2.8zM1484.2 622.3h1.9v1.9h-1.9zM1485.1 617.2h2.0v2.0h-2.0zM1507.1 634.9h2.3v2.3h-2.3zM1509.4 628.9h1.3v1.3h-1.3zM1511.9 640.4h2.2v2.2h-2.2zM1503.0 631.4h2.4v2.4h-2.4zM1440.4 539.4h2.8v2.8h-2.8zM1427.7 551.4h3.0v3.0h-3.0zM1437.0 550.2h2.9v2.9h-2.9zM1436.3 552.1h3.1v3.1h-3.1zM1436.2 551.8h2.8v2.8h-2.8zM1426.8 547.0h3.4v3.4h-3.4zM1451.1 541.5h2.5v2.5h-2.5zM1446.0 539.7h1.9v1.9h-1.9zM1449.5 546.0h3.1v3.1h-3.1zM1453.8 539.1h3.5v3.5h-3.5zM1451.2 541.4h2.4v2.4h-2.4zM1466.7 546.2h2.7v2.7h-2.7zM1464.3 545.0h2.7v2.7h-2.7zM1462.4 551.5h2.0v2.0h-2.0zM1456.2 549.8h3.6v3.6h-3.6zM1460.8 533.9h2.4v2.4h-2.4zM1463.5 541.9h3.1v3.1h-3.1zM1474.0 551.8h1.9v1.9h-1.9zM1481.6 543.0h2.6v2.6h-2.6zM1474.2 547.7h2.3v2.3h-2.3zM1484.2 539.5h3.0v3.0h-3.0zM1473.6 548.0h3.0v3.0h-3.0zM1487.2 534.0h2.4v2.4h-2.4zM1493.8 547.5h2.2v2.2h-2.2zM1488.8 542.5h1.8v1.8h-1.8zM1500.1 549.3h2.4v2.4h-2.4zM1499.2 549.1h1.4v1.4h-1.4zM1504.0 539.8h2.4v2.4h-2.4zM1507.0 550.4h2.2v2.2h-2.2zM1506.7 550.1h1.6v1.6h-1.6zM1640.4 618.7h2.5v2.5h-2.5zM1637.1 611.2h2.2v2.2h-2.2zM1643.8 610.1h2.7v2.7h-2.7zM1644.7 616.6h2.9v2.9h-2.9zM1644.2 615.0h3.4v3.4h-3.4zM1653.4 614.0h2.8v2.8h-2.8zM1637.3 612.1h3.0v3.0h-3.0zM1621.0 684.6h2.1v2.1h-2.1zM1621.4 685.0h2.4v2.4h-2.4zM1614.1 685.6h1.4v1.4h-1.4zM1612.1 684.3h2.3v2.3h-2.3zM1611.8 688.5h1.3v1.3h-1.3zM1618.7 685.1h2.0v2.0h-2.0zM1626.0 729.1h2.7v2.7h-2.7zM1620.3 734.0h3.4v3.4h-3.4zM1621.9 731.6h2.1v2.1h-2.1zM1629.2 732.6h2.3v2.3h-2.3zM1632.5 733.5h1.9v1.9h-1.9zM1625.5 736.2h1.8v1.8h-1.8zM882.7 828.5h1.3v1.3h-1.3zM882.6 828.3h2.2v2.2h-2.2zM888.6 820.2h1.5v1.5h-1.5zM879.7 823.4h2.6v2.6h-2.6zM886.8 827.4h2.0v2.0h-2.0zM885.5 816.5h1.8v1.8h-1.8zM896.5 866.4h2.6v2.6h-2.6zM890.9 862.5h2.6v2.6h-2.6zM897.5 860.0h1.5v1.5h-1.5zM900.0 860.2h1.8v1.8h-1.8zM896.4 859.3h1.4v1.4h-1.4zM902.4 905.3h1.2v1.2h-1.2zM901.6 900.7h2.1v2.1h-2.1zM899.5 901.4h1.7v1.7h-1.7zM895.3 904.3h1.6v1.6h-1.6zM900.8 912.3h1.4v1.4h-1.4zM892.8 948.6h2.2v2.2h-2.2zM899.8 942.6h1.9v1.9h-1.9zM1040.5 792.8h2.2v2.2h-2.2zM1057.7 781.9h2.5v2.5h-2.5zM1038.3 789.2h2.5v2.5h-2.5zM1048.3 784.9h2.6v2.6h-2.6zM1053.3 778.2h3.3v3.3h-3.3zM1052.2 855.2h2.6v2.6h-2.6zM1040.0 848.3h2.7v2.7h-2.7zM1052.0 835.4h2.0v2.0h-2.0zM1036.5 846.2h3.6v3.6h-3.6zM1045.3 855.0h2.4v2.4h-2.4zM1038.5 842.6h2.6v2.6h-2.6zM1052.4 853.5h3.5v3.5h-3.5zM1058.5 847.8h3.2v3.2h-3.2zM1053.1 856.5h2.0v2.0h-2.0zM1053.2 857.2h1.7v1.7h-1.7zM1052.9 853.0h3.1v3.1h-3.1zM1043.2 853.4h2.1v2.1h-2.1zM1051.7 840.6h3.5v3.5h-3.5zM1051.7 845.8h2.7v2.7h-2.7zM1041.7 835.3h3.6v3.6h-3.6zM1060.7 842.5h3.3v3.3h-3.3zM1041.6 835.6h1.9v1.9h-1.9zM1062.0 838.3h3.3v3.3h-3.3zM1048.2 830.0h3.4v3.4h-3.4zM1060.4 842.0h3.0v3.0h-3.0zM1085.8 840.4h1.7v1.7h-1.7zM1096.5 845.7h2.6v2.6h-2.6zM1138.5 839.8h2.1v2.1h-2.1zM1135.5 842.1h1.8v1.8h-1.8zM1128.5 835.3h1.7v1.7h-1.7zM1127.5 837.8h1.9v1.9h-1.9zM1133.0 838.8h1.9v1.9h-1.9zM1175.5 835.6h1.2v1.2h-1.2zM1170.2 836.7h1.4v1.4h-1.4zM1176.4 835.7h2.4v2.4h-2.4zM1175.7 829.4h2.3v2.3h-2.3zM1171.8 830.3h1.9v1.9h-1.9zM1037.9 758.9h2.0v2.0h-2.0zM1042.3 761.9h2.3v2.3h-2.3zM1037.2 767.4h2.2v2.2h-2.2zM1041.1 764.9h1.7v1.7h-1.7zM1036.7 762.7h1.2v1.2h-1.2zM1036.0 757.5h2.3v2.3h-2.3zM1129.4 946.9h2.5v2.5h-2.5zM1144.1 943.0h3.3v3.3h-3.3zM1141.6 932.3h2.6v2.6h-2.6zM1147.0 932.5h2.5v2.5h-2.5zM1148.5 934.1h3.1v3.1h-3.1zM1136.2 949.8h2.0v2.0h-2.0zM1136.2 929.6h2.8v2.8h-2.8zM1142.4 934.3h3.1v3.1h-3.1zM1144.7 926.1h3.0v3.0h-3.0zM1133.6 934.4h3.0v3.0h-3.0zM1135.4 930.5h2.1v2.1h-2.1zM1147.0 944.4h2.0v2.0h-2.0zM1132.9 938.6h1.9v1.9h-1.9zM1146.3 934.7h2.9v2.9h-2.9zM1152.3 936.6h2.4v2.4h-2.4zM1140.6 949.2h3.6v3.6h-3.6zM1131.3 935.1h1.9v1.9h-1.9zM1135.5 945.2h1.9v1.9h-1.9zM1145.7 943.0h2.1v2.1h-2.1zM1137.0 935.8h3.5v3.5h-3.5zM1197.1 915.2h2.4v2.4h-2.4zM1191.1 921.3h2.2v2.2h-2.2zM1193.1 930.5h2.2v2.2h-2.2zM1183.8 938.6h1.9v1.9h-1.9zM1196.0 925.0h1.9v1.9h-1.9zM1181.7 922.2h2.0v2.0h-2.0zM1197.5 926.9h3.1v3.1h-3.1zM1186.9 923.2h2.5v2.5h-2.5zM1190.3 924.9h1.8v1.8h-1.8zM1179.5 919.0h2.9v2.9h-2.9zM1185.8 919.3h2.0v2.0h-2.0zM1191.1 929.8h3.4v3.4h-3.4zM1177.1 930.8h3.3v3.3h-3.3zM1188.4 940.9h3.6v3.6h-3.6zM1193.1 933.4h2.2v2.2h-2.2zM1181.0 930.1h2.3v2.3h-2.3zM1195.6 922.3h3.1v3.1h-3.1zM1203.3 933.7h2.2v2.2h-2.2zM1192.7 939.5h3.6v3.6h-3.6zM1200.3 928.1h2.7v2.7h-2.7zM1233.7 830.7h2.5v2.5h-2.5zM1230.9 837.3h3.5v3.5h-3.5zM1235.9 825.7h2.9v2.9h-2.9zM1231.4 831.4h2.1v2.1h-2.1zM1234.7 828.5h2.0v2.0h-2.0zM1237.1 823.7h1.3v1.3h-1.3zM1234.5 815.9h2.4v2.4h-2.4zM1236.8 813.7h2.3v2.3h-2.3zM1240.0 815.4h2.0v2.0h-2.0zM1266.4 840.0h2.0v2.0h-2.0zM1267.4 832.8h2.6v2.6h-2.6zM1329.1 837.2h1.9v1.9h-1.9zM1331.7 835.7h1.4v1.4h-1.4zM1371.0 831.1h2.1v2.1h-2.1zM1372.1 836.6h2.5v2.5h-2.5zM1369.9 839.5h1.4v1.4h-1.4zM1380.5 835.5h2.5v2.5h-2.5zM1371.9 837.6h2.5v2.5h-2.5zM1374.3 836.0h1.3v1.3h-1.3zM1419.9 829.1h1.4v1.4h-1.4zM1424.3 830.0h2.4v2.4h-2.4zM1419.5 822.3h2.0v2.0h-2.0zM1415.3 828.2h1.7v1.7h-1.7zM1419.1 825.4h1.5v1.5h-1.5zM1461.6 826.7h1.2v1.2h-1.2zM1459.0 821.3h2.3v2.3h-2.3zM1464.3 823.0h1.5v1.5h-1.5zM1464.7 824.6h2.1v2.1h-2.1zM1506.0 814.6h1.3v1.3h-1.3zM1505.7 818.4h1.8v1.8h-1.8zM1501.9 813.1h2.4v2.4h-2.4zM1504.8 813.0h2.0v2.0h-2.0zM1504.8 820.6h2.5v2.5h-2.5zM1505.2 815.7h1.3v1.3h-1.3zM1504.5 856.8h2.6v2.6h-2.6zM1508.7 861.9h3.5v3.5h-3.5zM1496.9 857.5h3.3v3.3h-3.3zM1430.5 875.1h1.5v1.5h-1.5zM1371.7 905.7h2.8v2.8h-2.8zM1370.3 913.8h3.4v3.4h-3.4zM1363.4 904.3h2.1v2.1h-2.1zM1362.7 898.1h3.5v3.5h-3.5zM1368.0 893.3h2.5v2.5h-2.5zM1383.5 909.9h2.7v2.7h-2.7zM1381.6 915.4h1.7v1.7h-1.7zM1366.3 906.8h3.3v3.3h-3.3zM1362.0 898.6h2.2v2.2h-2.2zM1359.6 903.3h3.2v3.2h-3.2zM1364.9 900.5h2.6v2.6h-2.6zM1374.9 912.1h3.4v3.4h-3.4zM1363.9 918.7h2.0v2.0h-2.0zM1345.5 929.2h2.0v2.0h-2.0zM1343.1 927.0h2.4v2.4h-2.4zM1336.1 922.1h2.4v2.4h-2.4zM1329.3 924.9h1.7v1.7h-1.7zM1342.5 915.6h3.3v3.3h-3.3zM1324.0 917.0h3.1v3.1h-3.1zM1336.4 918.3h3.6v3.6h-3.6zM1330.9 931.4h3.6v3.6h-3.6zM1347.7 914.1h3.1v3.1h-3.1zM1345.0 915.4h3.2v3.2h-3.2zM1327.7 919.6h3.5v3.5h-3.5zM1339.6 921.4h3.3v3.3h-3.3zM1342.6 921.5h2.1v2.1h-2.1zM1241.8 930.2h3.0v3.0h-3.0zM1264.4 928.7h2.7v2.7h-2.7zM1251.7 910.5h2.7v2.7h-2.7zM1245.2 927.3h3.1v3.1h-3.1zM1258.8 917.2h3.6v3.6h-3.6zM1258.5 919.7h2.3v2.3h-2.3zM1244.8 925.3h2.5v2.5h-2.5zM1248.9 930.5h2.8v2.8h-2.8zM1262.8 922.9h2.1v2.1h-2.1zM1246.3 925.5h3.5v3.5h-3.5zM1252.2 915.3h3.2v3.2h-3.2zM1254.2 913.5h3.3v3.3h-3.3zM1249.9 934.7h2.7v2.7h-2.7zM1251.4 928.3h2.1v2.1h-2.1zM1265.9 927.7h2.1v2.1h-2.1zM1267.1 929.8h2.0v2.0h-2.0zM1258.9 925.0h1.7v1.7h-1.7zM1259.6 933.1h3.5v3.5h-3.5zM1256.1 929.2h1.7v1.7h-1.7zM1310.6 940.0h3.6v3.6h-3.6zM1303.4 941.4h3.3v3.3h-3.3zM1315.3 938.3h2.1v2.1h-2.1zM1309.3 939.3h2.9v2.9h-2.9zM1311.6 933.6h3.3v3.3h-3.3zM1310.6 948.1h2.0v2.0h-2.0zM1301.5 942.9h3.6v3.6h-3.6zM1304.5 929.3h3.1v3.1h-3.1zM1299.5 934.7h2.2v2.2h-2.2zM1299.7 931.6h2.1v2.1h-2.1zM1303.1 927.2h1.8v1.8h-1.8zM1532.4 764.9h1.7v1.7h-1.7zM1535.9 770.5h2.0v2.0h-2.0zM1625.7 791.0h3.5v3.5h-3.5zM1621.6 784.5h3.4v3.4h-3.4zM1629.0 776.3h2.9v2.9h-2.9zM1620.5 799.1h2.6v2.6h-2.6zM1623.9 795.1h3.4v3.4h-3.4zM1626.0 785.5h3.0v3.0h-3.0zM1630.3 781.8h3.2v3.2h-3.2zM1631.7 792.7h2.2v2.2h-2.2zM1637.4 794.6h2.8v2.8h-2.8zM1619.2 778.0h3.2v3.2h-3.2zM1615.1 775.5h3.5v3.5h-3.5zM1624.9 775.0h2.5v2.5h-2.5zM1622.5 778.8h2.4v2.4h-2.4zM1614.9 772.4h2.0v2.0h-2.0zM1632.8 844.7h3.3v3.3h-3.3zM1640.3 851.6h2.5v2.5h-2.5zM1625.3 846.5h1.8v1.8h-1.8zM1628.4 845.0h3.5v3.5h-3.5zM1627.7 842.1h3.5v3.5h-3.5zM1626.3 841.0h1.9v1.9h-1.9zM1627.4 842.5h2.1v2.1h-2.1zM1642.8 833.4h3.4v3.4h-3.4zM1649.4 872.7h2.0v2.0h-2.0zM1640.1 871.8h1.8v1.8h-1.8zM1646.4 876.4h3.6v3.6h-3.6zM1642.7 867.0h3.4v3.4h-3.4zM1625.9 897.6h2.5v2.5h-2.5zM1625.5 897.2h3.5v3.5h-3.5zM1623.7 904.8h1.7v1.7h-1.7zM1672.5 897.7h1.9v1.9h-1.9zM1675.5 890.9h2.1v2.1h-2.1zM1674.0 891.5h3.6v3.6h-3.6zM1666.7 898.3h3.5v3.5h-3.5zM1670.0 897.0h2.0v2.0h-2.0zM1537.7 779.8h2.5v2.5h-2.5zM1537.3 775.5h2.1v2.1h-2.1zM1542.7 781.0h3.2v3.2h-3.2zM1532.2 781.1h3.6v3.6h-3.6zM1530.7 778.8h3.4v3.4h-3.4zM1547.5 783.9h1.8v1.8h-1.8zM1545.5 784.6h2.6v2.6h-2.6zM1543.7 811.0h2.9v2.9h-2.9zM1536.8 811.6h3.4v3.4h-3.4zM1546.3 807.6h2.0v2.0h-2.0zM1541.4 815.8h2.0v2.0h-2.0zM1548.4 809.6h2.7v2.7h-2.7zM1550.2 809.9h2.4v2.4h-2.4zM1527.7 699.3h2.3v2.3h-2.3zM1523.3 704.5h2.1v2.1h-2.1zM1519.5 702.0h1.8v1.8h-1.8zM1527.9 734.5h2.1v2.1h-2.1zM1522.0 731.0h1.7v1.7h-1.7zM1528.7 731.7h1.7v1.7h-1.7zM1529.7 749.9h1.9v1.9h-1.9zM1526.7 758.0h2.1v2.1h-2.1zM1530.6 757.1h2.5v2.5h-2.5zM1532.4 756.5h1.3v1.3h-1.3zM1203.6 590.3h1.6v1.6h-1.6zM1206.4 590.7h2.6v2.6h-2.6zM1232.4 601.7h1.5v1.5h-1.5zM1229.8 596.3h1.6v1.6h-1.6zM1230.7 597.0h1.6v1.6h-1.6zM1231.5 601.4h1.3v1.3h-1.3zM1225.9 607.3h2.2v2.2h-2.2zM1249.8 622.6h1.3v1.3h-1.3zM1246.3 611.8h1.7v1.7h-1.7zM1251.1 614.7h1.9v1.9h-1.9zM1247.0 610.6h1.7v1.7h-1.7zM1266.9 630.3h2.4v2.4h-2.4zM1261.6 637.2h2.5v2.5h-2.5zM1261.7 634.6h1.7v1.7h-1.7zM1261.1 629.1h2.3v2.3h-2.3zM1225.2 690.9h2.6v2.6h-2.6zM1226.2 689.6h3.0v3.0h-3.0zM1222.8 693.4h2.7v2.7h-2.7zM1231.3 688.7h2.7v2.7h-2.7zM1230.9 692.0h3.2v3.2h-3.2zM1231.6 697.8h2.1v2.1h-2.1zM1232.4 695.1h2.7v2.7h-2.7zM1256.6 691.9h1.5v1.5h-1.5zM1249.5 686.3h1.8v1.8h-1.8zM1260.9 692.8h2.1v2.1h-2.1zM1260.1 691.5h1.5v1.5h-1.5zM1259.0 695.6h1.9v1.9h-1.9zM1251.2 689.5h2.6v2.6h-2.6zM1200.6 586.8h1.8v1.8h-1.8zM1199.6 585.1h2.0v2.0h-2.0zM1198.4 589.2h1.8v1.8h-1.8zM1177.2 694.9h2.6v2.6h-2.6zM1179.8 706.7h2.5v2.5h-2.5zM1184.0 706.9h3.0v3.0h-3.0zM1186.9 702.6h1.9v1.9h-1.9zM1182.1 704.9h1.8v1.8h-1.8zM1181.2 700.2h3.5v3.5h-3.5zM1181.9 700.9h2.5v2.5h-2.5zM1182.2 699.1h3.2v3.2h-3.2zM1174.1 707.2h2.7v2.7h-2.7zM1184.4 704.0h1.8v1.8h-1.8zM1182.1 701.4h2.7v2.7h-2.7zM1182.9 700.3h3.1v3.1h-3.1zM1196.5 696.9h1.4v1.4h-1.4zM1202.1 694.9h1.3v1.3h-1.3z"/>
<path fill="#2a3022" d="M1124.2 212.9h1.8v1.8h-1.8zM1118.3 215.6h3.5v3.5h-3.5zM1119.8 219.3h2.8v2.8h-2.8zM1123.5 209.1h2.7v2.7h-2.7zM1122.7 208.0h1.8v1.8h-1.8zM1129.1 206.3h2.2v2.2h-2.2zM1121.9 203.6h3.0v3.0h-3.0zM1117.5 213.2h3.2v3.2h-3.2zM1098.9 242.3h3.5v3.5h-3.5zM1086.3 235.2h2.5v2.5h-2.5zM1086.8 242.6h1.9v1.9h-1.9zM1086.9 248.1h2.9v2.9h-2.9zM1097.9 242.3h3.2v3.2h-3.2zM1096.4 244.4h2.7v2.7h-2.7zM1097.0 234.8h3.2v3.2h-3.2zM1096.9 231.8h3.1v3.1h-3.1zM1136.9 234.8h2.3v2.3h-2.3zM1130.3 234.7h2.4v2.4h-2.4zM1132.0 233.8h1.9v1.9h-1.9zM1137.0 238.7h2.1v2.1h-2.1zM1186.3 220.8h2.2v2.2h-2.2zM1185.7 226.8h2.0v2.0h-2.0zM1172.2 224.5h3.0v3.0h-3.0zM1182.7 222.1h1.7v1.7h-1.7zM1176.9 220.5h3.6v3.6h-3.6zM1182.5 223.7h2.9v2.9h-2.9zM1012.2 330.1h1.9v1.9h-1.9zM1016.6 324.2h3.2v3.2h-3.2zM1012.1 321.0h2.2v2.2h-2.2zM1005.9 326.9h2.6v2.6h-2.6zM1004.2 325.8h3.4v3.4h-3.4zM1010.5 334.2h3.6v3.6h-3.6zM1013.0 325.9h2.0v2.0h-2.0zM999.7 327.7h2.8v2.8h-2.8zM1014.8 322.4h2.5v2.5h-2.5zM990.2 348.0h3.1v3.1h-3.1zM989.8 347.4h2.7v2.7h-2.7zM1226.4 290.4h1.7v1.7h-1.7zM1219.8 286.2h2.0v2.0h-2.0zM1227.3 292.9h2.1v2.1h-2.1zM1224.3 289.7h1.9v1.9h-1.9zM1218.5 286.9h2.4v2.4h-2.4zM1249.8 289.1h1.3v1.3h-1.3zM1246.5 279.1h2.3v2.3h-2.3zM1248.0 288.3h2.2v2.2h-2.2zM1247.3 285.9h1.3v1.3h-1.3zM1255.6 276.9h1.8v1.8h-1.8zM1262.7 283.1h1.2v1.2h-1.2zM1267.3 280.1h2.6v2.6h-2.6zM1255.2 281.9h1.6v1.6h-1.6zM1280.0 281.1h2.5v2.5h-2.5zM1278.0 272.3h1.7v1.7h-1.7zM1278.4 278.9h2.3v2.3h-2.3zM1280.8 285.5h1.9v1.9h-1.9zM1277.2 276.1h1.9v1.9h-1.9zM1285.4 278.7h1.2v1.2h-1.2zM1292.9 271.7h2.6v2.6h-2.6zM1304.9 268.8h3.5v3.5h-3.5zM1302.7 273.8h2.8v2.8h-2.8zM1298.4 270.2h2.8v2.8h-2.8zM1301.4 270.9h3.3v3.3h-3.3zM1308.0 277.6h2.3v2.3h-2.3zM1314.2 283.6h1.8v1.8h-1.8zM1321.2 288.1h2.8v2.8h-2.8zM1309.4 292.4h3.6v3.6h-3.6zM1316.0 279.2h2.8v2.8h-2.8zM1308.8 286.1h2.7v2.7h-2.7zM1317.6 288.8h3.3v3.3h-3.3zM1315.2 292.2h2.4v2.4h-2.4zM1309.0 283.4h1.9v1.9h-1.9zM1310.0 283.5h1.8v1.8h-1.8zM1319.3 304.6h1.9v1.9h-1.9zM1310.4 297.6h2.4v2.4h-2.4zM1310.9 318.9h2.5v2.5h-2.5zM1312.0 322.5h2.7v2.7h-2.7zM1301.3 321.3h3.6v3.6h-3.6zM1311.9 324.6h2.5v2.5h-2.5zM1309.2 329.3h2.7v2.7h-2.7zM1300.6 320.4h1.8v1.8h-1.8zM1303.9 327.5h2.2v2.2h-2.2zM1443.5 224.4h2.0v2.0h-2.0zM1430.0 236.6h2.4v2.4h-2.4zM1417.2 227.9h2.0v2.0h-2.0zM1441.4 215.5h2.8v2.8h-2.8zM1440.3 230.6h3.0v3.0h-3.0zM1422.8 217.3h2.9v2.9h-2.9zM1444.6 225.9h2.3v2.3h-2.3zM1434.6 233.1h1.7v1.7h-1.7zM1426.8 217.6h3.1v3.1h-3.1zM1427.6 205.4h2.9v2.9h-2.9zM1488.6 199.9h2.8v2.8h-2.8zM1490.6 187.1h3.3v3.3h-3.3zM1488.9 190.6h2.6v2.6h-2.6zM1481.7 192.7h1.9v1.9h-1.9zM1489.0 199.1h2.3v2.3h-2.3zM1476.5 194.7h2.6v2.6h-2.6zM1478.3 192.5h1.7v1.7h-1.7zM1477.3 197.1h2.9v2.9h-2.9zM1490.8 191.9h3.6v3.6h-3.6zM1481.4 215.7h2.0v2.0h-2.0zM1495.2 216.0h2.2v2.2h-2.2zM1490.5 210.0h2.1v2.1h-2.1zM1488.3 207.3h2.9v2.9h-2.9zM1496.1 219.7h2.9v2.9h-2.9zM1497.2 218.6h3.5v3.5h-3.5zM1495.6 227.9h2.5v2.5h-2.5zM1496.3 215.4h2.1v2.1h-2.1zM1494.3 218.5h2.3v2.3h-2.3zM1415.1 338.4h2.3v2.3h-2.3zM1410.6 344.9h3.1v3.1h-3.1zM1409.2 347.6h2.1v2.1h-2.1zM1413.1 356.3h2.7v2.7h-2.7zM1394.9 345.1h3.6v3.6h-3.6zM1405.5 360.3h2.1v2.1h-2.1zM1398.9 352.9h2.4v2.4h-2.4zM1417.9 346.9h3.0v3.0h-3.0zM1412.4 338.0h3.5v3.5h-3.5zM1399.5 345.1h3.6v3.6h-3.6zM1398.1 342.1h3.6v3.6h-3.6zM1410.3 339.8h2.9v2.9h-2.9zM1410.5 351.4h2.2v2.2h-2.2zM1577.0 191.3h2.8v2.8h-2.8zM1551.2 202.6h2.7v2.7h-2.7zM1555.1 197.4h3.2v3.2h-3.2zM1553.3 180.2h2.5v2.5h-2.5zM1561.7 187.8h2.1v2.1h-2.1zM1564.5 188.2h2.5v2.5h-2.5zM1548.7 189.3h2.5v2.5h-2.5zM1566.6 186.8h2.1v2.1h-2.1zM1565.9 210.0h2.8v2.8h-2.8zM1563.9 190.7h2.5v2.5h-2.5zM1548.7 192.7h2.1v2.1h-2.1zM1557.5 182.2h2.5v2.5h-2.5zM1558.0 193.5h3.2v3.2h-3.2zM1563.5 192.1h2.9v2.9h-2.9zM1550.7 208.0h3.0v3.0h-3.0zM1566.3 198.5h2.5v2.5h-2.5zM1551.8 205.4h1.9v1.9h-1.9zM1544.2 194.0h1.7v1.7h-1.7zM1566.7 197.2h3.3v3.3h-3.3zM1561.3 209.5h2.7v2.7h-2.7zM1562.9 189.4h2.3v2.3h-2.3zM1565.4 210.1h3.0v3.0h-3.0zM1571.1 205.5h3.5v3.5h-3.5zM1555.3 210.5h2.7v2.7h-2.7zM1544.8 185.4h3.4v3.4h-3.4zM1573.7 194.5h1.7v1.7h-1.7zM1649.9 173.6h1.7v1.7h-1.7zM1667.0 180.8h2.8v2.8h-2.8zM1655.8 167.6h3.2v3.2h-3.2zM1655.1 183.7h2.7v2.7h-2.7zM1663.5 168.9h2.6v2.6h-2.6zM1653.7 167.4h3.6v3.6h-3.6zM1652.4 162.1h2.9v2.9h-2.9zM1655.7 161.3h1.8v1.8h-1.8zM1657.7 180.1h2.8v2.8h-2.8zM1658.1 171.9h3.2v3.2h-3.2zM1668.8 170.1h3.0v3.0h-3.0zM1660.5 168.6h3.4v3.4h-3.4zM1719.5 304.1h2.1v2.1h-2.1zM1716.4 308.2h3.3v3.3h-3.3zM1730.2 309.8h2.4v2.4h-2.4zM1733.1 325.1h2.9v2.9h-2.9zM1713.9 290.4h3.4v3.4h-3.4zM1705.0 320.9h3.3v3.3h-3.3zM1721.5 330.0h2.1v2.1h-2.1zM1730.3 304.1h2.0v2.0h-2.0zM1699.1 311.7h3.2v3.2h-3.2zM1704.7 298.8h1.8v1.8h-1.8zM1711.4 294.8h2.6v2.6h-2.6zM1710.0 290.2h2.9v2.9h-2.9zM1703.2 295.7h3.2v3.2h-3.2zM1711.2 304.4h3.2v3.2h-3.2zM1736.9 298.7h3.1v3.1h-3.1zM1716.0 301.8h3.5v3.5h-3.5zM1718.7 319.9h2.5v2.5h-2.5zM1709.5 315.3h1.8v1.8h-1.8zM1720.7 298.6h2.2v2.2h-2.2zM1737.1 305.2h2.8v2.8h-2.8zM1705.8 299.0h2.3v2.3h-2.3zM1718.7 293.9h1.8v1.8h-1.8zM1720.2 311.6h2.1v2.1h-2.1zM1724.1 317.0h1.9v1.9h-1.9zM1721.7 329.8h2.2v2.2h-2.2zM1717.3 323.7h2.6v2.6h-2.6zM1703.0 314.1h1.9v1.9h-1.9zM1710.5 313.0h2.3v2.3h-2.3zM1705.2 307.3h2.3v2.3h-2.3zM1729.3 315.5h3.2v3.2h-3.2zM1702.9 307.8h3.3v3.3h-3.3zM1731.7 324.0h3.5v3.5h-3.5zM1719.5 306.6h2.6v2.6h-2.6zM1732.8 303.9h3.0v3.0h-3.0zM1729.3 311.1h2.5v2.5h-2.5zM1703.3 301.5h2.1v2.1h-2.1zM1728.4 309.3h2.3v2.3h-2.3zM1731.8 316.9h3.3v3.3h-3.3zM1726.4 292.8h2.7v2.7h-2.7zM1737.6 296.9h2.1v2.1h-2.1zM1716.3 300.3h2.3v2.3h-2.3zM1729.4 319.6h2.5v2.5h-2.5zM1602.1 326.4h2.6v2.6h-2.6zM1605.2 321.6h1.4v1.4h-1.4zM1606.2 324.6h2.6v2.6h-2.6zM1605.4 314.8h1.5v1.5h-1.5zM1605.3 316.3h1.8v1.8h-1.8zM1602.4 322.3h1.5v1.5h-1.5zM1610.1 320.7h1.4v1.4h-1.4zM1847.7 286.7h1.8v1.8h-1.8zM1846.5 321.1h1.7v1.7h-1.7zM1849.3 322.3h2.0v2.0h-2.0zM1844.3 320.7h1.3v1.3h-1.3zM1104.3 540.2h1.4v1.4h-1.4zM1106.1 542.5h1.7v1.7h-1.7zM1100.2 541.0h1.8v1.8h-1.8zM1734.8 480.6h2.9v2.9h-2.9zM1729.3 486.5h2.8v2.8h-2.8zM1725.9 485.4h1.8v1.8h-1.8zM1738.4 477.1h2.5v2.5h-2.5zM1720.7 478.4h2.1v2.1h-2.1zM1717.6 466.9h3.0v3.0h-3.0zM1720.9 477.4h3.5v3.5h-3.5zM1724.8 461.8h3.5v3.5h-3.5zM1723.5 476.0h2.2v2.2h-2.2zM1734.2 467.1h3.5v3.5h-3.5zM1723.3 464.8h3.3v3.3h-3.3zM1722.6 455.9h2.4v2.4h-2.4zM1726.4 471.6h1.8v1.8h-1.8zM1712.6 484.9h2.1v2.1h-2.1zM1730.6 485.3h3.2v3.2h-3.2zM1713.3 471.9h3.5v3.5h-3.5zM1723.8 466.5h2.2v2.2h-2.2zM1732.8 477.4h2.4v2.4h-2.4zM1723.9 468.8h2.6v2.6h-2.6zM1708.0 474.4h2.2v2.2h-2.2zM1725.5 487.6h2.9v2.9h-2.9zM1699.0 467.1h2.7v2.7h-2.7zM1713.1 463.7h3.0v3.0h-3.0zM1712.3 466.4h2.4v2.4h-2.4zM1712.2 472.2h3.6v3.6h-3.6zM1697.4 474.8h3.5v3.5h-3.5zM1697.7 464.9h2.6v2.6h-2.6zM1705.2 473.6h3.2v3.2h-3.2zM1701.8 471.0h3.2v3.2h-3.2zM1706.6 474.5h3.5v3.5h-3.5zM1702.1 462.2h2.0v2.0h-2.0zM1747.2 459.6h2.2v2.2h-2.2zM1749.0 467.7h3.3v3.3h-3.3zM1745.4 468.4h2.5v2.5h-2.5zM1741.0 459.7h3.6v3.6h-3.6zM1738.7 462.0h1.9v1.9h-1.9zM1737.5 465.1h2.3v2.3h-2.3zM1656.0 502.6h2.2v2.2h-2.2zM1671.4 528.6h2.4v2.4h-2.4zM1666.3 527.6h2.4v2.4h-2.4zM1667.2 500.9h3.6v3.6h-3.6zM1674.2 528.2h3.3v3.3h-3.3zM1659.2 511.9h1.8v1.8h-1.8zM1660.6 509.8h2.4v2.4h-2.4zM1660.8 504.7h3.1v3.1h-3.1zM1660.5 506.2h2.8v2.8h-2.8zM1663.2 506.4h3.0v3.0h-3.0zM1673.4 500.6h2.5v2.5h-2.5zM1649.6 519.3h2.9v2.9h-2.9zM1659.1 504.9h2.6v2.6h-2.6zM1668.7 511.0h2.2v2.2h-2.2zM1657.1 513.5h2.1v2.1h-2.1zM1649.4 521.9h1.8v1.8h-1.8zM1647.4 515.0h1.9v1.9h-1.9zM1641.5 524.7h2.2v2.2h-2.2zM1654.5 514.6h3.2v3.2h-3.2zM1652.0 517.2h2.3v2.3h-2.3zM1650.8 512.3h3.2v3.2h-3.2zM1653.1 519.4h2.1v2.1h-2.1zM1651.8 511.2h2.9v2.9h-2.9zM1646.0 513.4h2.8v2.8h-2.8zM1687.9 514.6h2.3v2.3h-2.3zM1686.5 507.2h3.0v3.0h-3.0zM1676.5 508.0h2.9v2.9h-2.9zM1689.7 505.0h3.6v3.6h-3.6zM1676.6 508.9h2.8v2.8h-2.8zM1694.0 503.4h2.6v2.6h-2.6zM1679.2 514.0h2.5v2.5h-2.5zM1685.6 500.1h2.1v2.1h-2.1zM1616.7 531.8h2.5v2.5h-2.5zM1615.3 527.7h2.7v2.7h-2.7zM1614.2 531.9h3.2v3.2h-3.2zM1623.0 528.3h3.3v3.3h-3.3zM1615.5 530.9h3.5v3.5h-3.5zM1710.8 519.5h2.3v2.3h-2.3zM1716.3 517.4h2.2v2.2h-2.2zM1715.6 514.9h1.8v1.8h-1.8zM1710.1 525.6h1.4v1.4h-1.4zM1718.1 521.9h1.6v1.6h-1.6zM1712.2 525.5h1.3v1.3h-1.3zM1746.3 510.4h1.7v1.7h-1.7zM1739.4 511.1h1.8v1.8h-1.8zM1740.8 513.0h1.4v1.4h-1.4zM1747.4 516.6h1.9v1.9h-1.9zM1747.8 545.2h1.6v1.6h-1.6zM1750.6 544.4h1.3v1.3h-1.3zM1752.2 543.8h1.6v1.6h-1.6zM1749.4 549.3h1.8v1.8h-1.8zM1743.5 549.9h1.6v1.6h-1.6zM1580.3 540.3h2.0v2.0h-2.0zM1574.0 543.7h2.5v2.5h-2.5zM1575.2 539.5h1.7v1.7h-1.7zM1570.2 537.1h1.9v1.9h-1.9zM1534.0 543.2h2.5v2.5h-2.5zM1541.9 537.8h2.0v2.0h-2.0zM1534.4 547.0h2.5v2.5h-2.5zM912.7 751.6h2.4v2.4h-2.4zM906.5 748.3h2.7v2.7h-2.7zM906.1 745.0h3.3v3.3h-3.3zM904.9 745.3h2.2v2.2h-2.2zM916.7 745.1h2.1v2.1h-2.1zM914.5 738.9h2.8v2.8h-2.8zM910.0 745.7h1.9v1.9h-1.9zM1045.0 723.7h3.0v3.0h-3.0zM1033.6 722.1h3.0v3.0h-3.0zM1024.5 741.1h2.3v2.3h-2.3zM1032.4 731.4h3.2v3.2h-3.2zM1031.5 735.8h3.4v3.4h-3.4zM1035.1 737.0h3.3v3.3h-3.3zM1030.4 725.1h1.7v1.7h-1.7zM1040.0 731.2h2.3v2.3h-2.3zM1035.9 742.0h3.2v3.2h-3.2zM1037.5 731.9h2.3v2.3h-2.3zM1041.1 739.6h3.4v3.4h-3.4zM1034.2 724.4h2.5v2.5h-2.5zM1035.5 722.5h2.4v2.4h-2.4zM1037.0 734.3h1.9v1.9h-1.9zM1046.3 735.0h2.1v2.1h-2.1zM1028.0 738.9h2.2v2.2h-2.2zM1045.7 750.8h2.8v2.8h-2.8zM1023.4 733.5h2.2v2.2h-2.2zM1044.2 730.6h3.3v3.3h-3.3zM1037.4 739.0h2.3v2.3h-2.3zM1035.4 732.2h3.5v3.5h-3.5zM1031.1 735.4h1.9v1.9h-1.9zM1026.0 730.5h1.8v1.8h-1.8zM1026.3 747.4h2.1v2.1h-2.1zM1033.1 749.3h2.1v2.1h-2.1zM1038.3 760.3h3.6v3.6h-3.6zM1028.2 744.6h3.0v3.0h-3.0zM1046.8 754.1h3.5v3.5h-3.5zM1036.2 745.8h3.3v3.3h-3.3zM1029.7 754.6h3.4v3.4h-3.4zM1047.6 758.4h3.4v3.4h-3.4zM1040.5 743.0h3.2v3.2h-3.2zM1041.2 761.4h2.9v2.9h-2.9zM1038.3 765.8h2.4v2.4h-2.4zM1042.8 758.1h1.9v1.9h-1.9zM1038.9 750.7h3.0v3.0h-3.0zM916.6 652.9h2.4v2.4h-2.4zM923.6 649.5h3.1v3.1h-3.1zM924.6 664.6h2.1v2.1h-2.1zM919.3 661.2h2.3v2.3h-2.3zM918.6 657.4h2.8v2.8h-2.8zM929.5 648.7h3.5v3.5h-3.5zM927.5 655.3h2.6v2.6h-2.6zM923.9 662.5h2.5v2.5h-2.5zM922.4 653.2h2.4v2.4h-2.4zM932.4 652.1h3.5v3.5h-3.5zM918.4 656.8h1.9v1.9h-1.9zM1469.4 602.8h2.8v2.8h-2.8zM1454.4 618.9h3.6v3.6h-3.6zM1440.5 605.3h2.2v2.2h-2.2zM1464.7 616.8h2.6v2.6h-2.6zM1454.0 591.6h2.3v2.3h-2.3zM1456.2 613.2h3.2v3.2h-3.2zM1472.5 607.2h1.9v1.9h-1.9zM1440.1 614.7h2.1v2.1h-2.1zM1457.7 610.4h1.8v1.8h-1.8zM1459.4 586.4h2.7v2.7h-2.7zM1475.4 601.5h3.4v3.4h-3.4zM1463.7 605.6h3.2v3.2h-3.2zM1468.4 596.6h2.9v2.9h-2.9zM1450.3 605.2h2.1v2.1h-2.1zM1461.1 602.9h2.6v2.6h-2.6zM1472.6 594.8h2.2v2.2h-2.2zM1468.8 607.4h1.7v1.7h-1.7zM1437.6 608.3h3.2v3.2h-3.2zM1447.4 613.4h2.4v2.4h-2.4zM1462.6 622.2h3.6v3.6h-3.6zM1463.0 619.6h2.4v2.4h-2.4zM1438.2 600.6h2.6v2.6h-2.6zM1464.1 617.0h3.0v3.0h-3.0zM1459.4 597.0h2.8v2.8h-2.8zM1454.5 599.2h2.3v2.3h-2.3zM1449.2 612.4h2.7v2.7h-2.7zM1456.4 618.5h2.4v2.4h-2.4zM1466.7 591.2h1.8v1.8h-1.8zM1449.4 613.1h3.5v3.5h-3.5zM1452.1 625.2h1.8v1.8h-1.8zM1449.0 586.2h2.7v2.7h-2.7zM1441.0 583.3h1.8v1.8h-1.8zM1434.7 590.6h1.9v1.9h-1.9zM1440.2 598.2h3.6v3.6h-3.6zM1449.2 581.4h1.8v1.8h-1.8zM1439.5 594.4h2.1v2.1h-2.1zM1446.1 597.7h1.7v1.7h-1.7zM1439.8 585.0h3.5v3.5h-3.5zM1462.8 619.2h1.9v1.9h-1.9zM1467.2 620.1h3.0v3.0h-3.0zM1462.9 622.4h1.9v1.9h-1.9zM1471.9 631.7h3.3v3.3h-3.3zM1477.7 627.9h2.2v2.2h-2.2zM1475.4 630.3h2.3v2.3h-2.3zM1468.0 628.5h3.3v3.3h-3.3zM1491.1 627.5h1.6v1.6h-1.6zM1484.7 626.4h1.9v1.9h-1.9zM1486.1 627.9h2.6v2.6h-2.6zM1490.0 616.0h1.6v1.6h-1.6zM1512.4 628.0h2.2v2.2h-2.2zM1505.0 628.2h2.6v2.6h-2.6zM1510.3 627.7h2.1v2.1h-2.1zM1508.5 638.0h1.5v1.5h-1.5zM1433.7 548.4h1.9v1.9h-1.9zM1439.1 549.3h2.6v2.6h-2.6zM1438.3 544.1h3.5v3.5h-3.5zM1435.2 542.0h2.4v2.4h-2.4zM1435.0 553.3h2.3v2.3h-2.3zM1438.4 543.1h2.5v2.5h-2.5zM1441.7 544.1h2.8v2.8h-2.8zM1448.3 545.8h3.3v3.3h-3.3zM1451.1 552.2h1.8v1.8h-1.8zM1454.9 547.5h2.3v2.3h-2.3zM1441.1 541.6h2.3v2.3h-2.3zM1443.0 548.6h3.3v3.3h-3.3zM1448.2 540.1h2.7v2.7h-2.7zM1450.7 542.0h3.2v3.2h-3.2zM1441.9 546.9h3.4v3.4h-3.4zM1465.0 548.0h3.1v3.1h-3.1zM1465.1 534.1h2.9v2.9h-2.9zM1459.6 551.9h1.9v1.9h-1.9zM1467.0 545.7h3.5v3.5h-3.5zM1468.5 539.9h3.4v3.4h-3.4zM1470.0 543.7h3.3v3.3h-3.3zM1469.4 547.5h3.0v3.0h-3.0zM1472.6 542.9h3.4v3.4h-3.4zM1472.0 540.2h3.6v3.6h-3.6zM1483.1 537.6h3.3v3.3h-3.3zM1479.5 540.9h1.8v1.8h-1.8zM1488.7 538.7h2.7v2.7h-2.7zM1497.1 544.1h3.1v3.1h-3.1zM1492.1 548.6h1.7v1.7h-1.7zM1487.5 534.2h1.9v1.9h-1.9zM1494.9 539.8h2.9v2.9h-2.9zM1485.9 540.6h2.4v2.4h-2.4zM1501.2 540.3h1.3v1.3h-1.3zM1499.9 547.7h2.2v2.2h-2.2zM1508.5 552.2h1.3v1.3h-1.3zM1505.5 542.5h1.2v1.2h-1.2zM1500.2 546.9h2.2v2.2h-2.2zM1501.3 540.8h1.9v1.9h-1.9zM1652.7 614.7h3.1v3.1h-3.1zM1638.7 621.1h2.6v2.6h-2.6zM1651.6 609.4h3.2v3.2h-3.2zM1645.1 609.1h1.7v1.7h-1.7zM1648.0 610.3h2.2v2.2h-2.2zM1640.1 621.5h2.0v2.0h-2.0zM1638.8 618.3h1.9v1.9h-1.9zM1614.9 685.4h1.8v1.8h-1.8zM1621.7 685.0h2.4v2.4h-2.4zM1615.6 682.8h2.6v2.6h-2.6zM1630.8 737.2h3.5v3.5h-3.5zM1630.8 733.9h2.2v2.2h-2.2zM1628.1 730.0h1.8v1.8h-1.8zM1616.5 737.6h2.2v2.2h-2.2zM1628.0 736.8h2.2v2.2h-2.2zM880.7 817.7h1.4v1.4h-1.4zM884.1 827.0h1.9v1.9h-1.9zM889.3 822.2h2.4v2.4h-2.4zM889.0 818.3h2.3v2.3h-2.3zM878.3 822.8h2.5v2.5h-2.5zM880.7 822.1h1.4v1.4h-1.4zM882.4 816.3h1.7v1.7h-1.7zM880.4 819.0h2.5v2.5h-2.5zM897.3 860.4h1.6v1.6h-1.6zM901.4 867.7h1.3v1.3h-1.3zM894.0 865.0h1.7v1.7h-1.7zM900.6 867.7h2.5v2.5h-2.5zM894.1 866.9h1.4v1.4h-1.4zM896.4 898.9h1.9v1.9h-1.9zM900.0 899.9h1.7v1.7h-1.7zM895.3 902.4h2.1v2.1h-2.1zM893.8 900.4h1.8v1.8h-1.8zM897.8 898.8h1.3v1.3h-1.3zM897.2 908.7h1.4v1.4h-1.4zM902.2 901.4h1.3v1.3h-1.3zM896.6 943.7h2.2v2.2h-2.2zM893.7 942.8h1.8v1.8h-1.8zM899.6 946.5h1.9v1.9h-1.9zM898.0 950.9h2.1v2.1h-2.1zM899.4 946.5h2.5v2.5h-2.5zM1046.9 786.5h2.4v2.4h-2.4zM1042.8 790.0h2.9v2.9h-2.9zM1057.4 792.1h2.9v2.9h-2.9zM1043.6 792.9h3.5v3.5h-3.5zM1055.0 779.0h2.4v2.4h-2.4zM1042.8 782.4h3.3v3.3h-3.3zM1042.5 789.2h1.7v1.7h-1.7zM1047.8 796.8h3.3v3.3h-3.3zM1046.3 787.2h1.8v1.8h-1.8zM1052.5 785.3h2.6v2.6h-2.6zM1051.6 785.7h2.2v2.2h-2.2zM1055.5 780.8h2.0v2.0h-2.0zM1044.6 797.1h2.0v2.0h-2.0zM1051.5 779.9h2.1v2.1h-2.1zM1052.5 796.4h3.1v3.1h-3.1zM1051.3 789.0h2.8v2.8h-2.8zM1053.6 791.9h2.5v2.5h-2.5zM1058.1 848.9h3.6v3.6h-3.6zM1056.6 843.1h2.7v2.7h-2.7zM1041.0 841.8h3.1v3.1h-3.1zM1049.3 854.4h3.2v3.2h-3.2zM1052.2 850.3h3.4v3.4h-3.4zM1048.9 830.6h2.3v2.3h-2.3zM1058.0 830.6h2.1v2.1h-2.1zM1056.6 835.1h2.5v2.5h-2.5zM1054.0 833.1h3.1v3.1h-3.1zM1064.3 847.2h1.9v1.9h-1.9zM1047.0 856.3h2.9v2.9h-2.9zM1091.6 848.2h1.5v1.5h-1.5zM1091.2 842.2h2.2v2.2h-2.2zM1097.5 845.6h2.4v2.4h-2.4zM1090.2 838.5h1.9v1.9h-1.9zM1089.3 850.9h1.3v1.3h-1.3zM1094.9 841.5h2.5v2.5h-2.5zM1139.4 835.5h2.0v2.0h-2.0zM1136.5 840.6h2.3v2.3h-2.3zM1130.5 843.1h1.3v1.3h-1.3zM1173.5 835.9h1.5v1.5h-1.5zM1040.4 761.6h1.4v1.4h-1.4zM1039.6 768.7h2.6v2.6h-2.6zM1037.4 760.2h2.5v2.5h-2.5zM1140.5 932.5h2.6v2.6h-2.6zM1149.8 930.7h2.3v2.3h-2.3zM1136.9 940.3h2.7v2.7h-2.7zM1130.4 939.2h2.8v2.8h-2.8zM1147.8 939.0h2.8v2.8h-2.8zM1144.9 948.9h1.8v1.8h-1.8zM1182.4 940.2h2.9v2.9h-2.9zM1201.7 928.9h2.0v2.0h-2.0zM1180.3 936.8h1.7v1.7h-1.7zM1197.5 918.0h2.5v2.5h-2.5zM1174.9 927.0h2.5v2.5h-2.5zM1189.5 940.1h3.4v3.4h-3.4zM1192.9 925.8h2.5v2.5h-2.5zM1196.4 933.1h3.0v3.0h-3.0zM1187.2 938.0h3.5v3.5h-3.5zM1187.6 920.6h3.3v3.3h-3.3zM1195.5 932.4h2.6v2.6h-2.6zM1195.8 935.7h3.6v3.6h-3.6zM1179.2 938.6h3.0v3.0h-3.0zM1196.2 918.0h2.6v2.6h-2.6zM1184.4 925.0h2.9v2.9h-2.9zM1182.0 917.4h2.3v2.3h-2.3zM1186.0 925.2h3.4v3.4h-3.4zM1244.4 829.6h2.9v2.9h-2.9zM1238.9 827.0h1.8v1.8h-1.8zM1243.9 836.8h3.5v3.5h-3.5zM1244.5 834.6h2.4v2.4h-2.4zM1237.6 827.0h2.7v2.7h-2.7zM1236.0 840.3h3.4v3.4h-3.4zM1232.7 827.0h3.1v3.1h-3.1zM1232.5 832.9h3.0v3.0h-3.0zM1244.5 829.2h2.4v2.4h-2.4zM1240.3 816.1h1.5v1.5h-1.5zM1237.5 823.9h2.1v2.1h-2.1zM1239.7 814.9h2.1v2.1h-2.1zM1270.7 830.6h1.4v1.4h-1.4zM1269.5 838.8h1.2v1.2h-1.2zM1265.2 833.6h2.3v2.3h-2.3zM1271.5 837.3h1.3v1.3h-1.3zM1269.8 837.2h2.2v2.2h-2.2zM1270.9 840.2h1.7v1.7h-1.7zM1264.4 836.1h1.6v1.6h-1.6zM1338.3 846.0h1.4v1.4h-1.4zM1330.0 838.0h1.3v1.3h-1.3zM1338.4 839.5h1.9v1.9h-1.9zM1380.9 832.3h2.0v2.0h-2.0zM1375.7 835.7h1.9v1.9h-1.9zM1370.7 836.0h2.6v2.6h-2.6zM1371.2 837.9h1.8v1.8h-1.8zM1372.7 833.7h2.1v2.1h-2.1zM1423.1 832.8h2.0v2.0h-2.0zM1419.6 833.6h1.4v1.4h-1.4zM1460.7 830.5h2.2v2.2h-2.2zM1501.4 824.0h1.3v1.3h-1.3zM1504.5 847.0h3.6v3.6h-3.6zM1513.0 859.0h3.2v3.2h-3.2zM1498.2 852.6h2.3v2.3h-2.3zM1505.0 852.1h3.1v3.1h-3.1zM1512.1 860.4h2.3v2.3h-2.3zM1502.3 854.7h3.3v3.3h-3.3zM1504.9 862.4h3.2v3.2h-3.2zM1430.0 868.6h2.4v2.4h-2.4zM1432.1 868.9h2.1v2.1h-2.1zM1434.3 869.2h1.8v1.8h-1.8zM1425.7 869.9h1.5v1.5h-1.5zM1428.6 873.6h1.2v1.2h-1.2zM1359.4 902.3h3.2v3.2h-3.2zM1368.7 921.4h2.7v2.7h-2.7zM1362.4 907.9h2.0v2.0h-2.0zM1365.9 906.9h2.3v2.3h-2.3zM1376.1 916.3h1.9v1.9h-1.9zM1367.7 919.5h1.8v1.8h-1.8zM1379.5 906.2h2.6v2.6h-2.6zM1372.2 909.0h3.2v3.2h-3.2zM1377.5 902.3h2.8v2.8h-2.8zM1378.0 914.8h2.6v2.6h-2.6zM1357.4 911.5h2.5v2.5h-2.5zM1333.0 911.4h3.6v3.6h-3.6zM1347.0 929.2h3.4v3.4h-3.4zM1341.2 927.3h3.0v3.0h-3.0zM1339.6 921.3h3.3v3.3h-3.3zM1344.9 910.5h1.7v1.7h-1.7zM1338.1 924.6h2.8v2.8h-2.8zM1324.6 918.3h2.7v2.7h-2.7zM1329.8 925.0h3.2v3.2h-3.2zM1329.3 921.5h2.5v2.5h-2.5zM1238.1 918.7h3.4v3.4h-3.4zM1251.2 918.2h3.3v3.3h-3.3zM1246.8 936.1h2.8v2.8h-2.8zM1259.5 914.3h3.6v3.6h-3.6zM1254.1 935.5h2.5v2.5h-2.5zM1247.7 919.2h3.1v3.1h-3.1zM1242.2 918.8h2.2v2.2h-2.2zM1261.2 926.8h2.2v2.2h-2.2zM1260.9 912.1h3.3v3.3h-3.3zM1242.6 930.2h1.8v1.8h-1.8zM1259.1 928.0h2.9v2.9h-2.9zM1255.9 913.2h3.4v3.4h-3.4zM1258.2 938.6h2.2v2.2h-2.2zM1263.0 928.1h3.0v3.0h-3.0zM1251.8 919.6h2.9v2.9h-2.9zM1242.9 917.8h3.0v3.0h-3.0zM1262.7 932.4h2.0v2.0h-2.0zM1244.2 919.6h3.3v3.3h-3.3zM1265.3 923.1h3.0v3.0h-3.0zM1294.2 934.2h2.4v2.4h-2.4zM1294.7 931.2h2.5v2.5h-2.5zM1298.1 940.2h2.1v2.1h-2.1zM1305.6 928.9h3.1v3.1h-3.1zM1300.4 934.3h3.0v3.0h-3.0zM1311.0 945.6h2.7v2.7h-2.7zM1308.1 944.4h2.9v2.9h-2.9zM1297.6 942.6h3.0v3.0h-3.0zM1301.1 949.5h3.1v3.1h-3.1zM1296.6 937.7h3.2v3.2h-3.2zM1299.7 946.5h2.1v2.1h-2.1zM1301.8 949.4h3.4v3.4h-3.4zM1306.5 930.9h3.1v3.1h-3.1zM1293.8 938.8h3.6v3.6h-3.6zM1309.8 931.4h2.1v2.1h-2.1zM1293.0 941.1h2.1v2.1h-2.1zM1312.6 932.6h2.4v2.4h-2.4zM1534.5 768.3h2.5v2.5h-2.5zM1533.3 771.5h1.6v1.6h-1.6zM1529.4 773.1h1.4v1.4h-1.4zM1532.6 766.4h2.2v2.2h-2.2zM1620.8 798.3h2.8v2.8h-2.8zM1618.9 780.6h2.7v2.7h-2.7zM1635.6 786.0h3.0v3.0h-3.0zM1631.1 787.6h2.9v2.9h-2.9zM1621.2 792.3h3.1v3.1h-3.1zM1622.1 796.0h2.5v2.5h-2.5zM1615.5 786.5h2.6v2.6h-2.6zM1623.4 783.2h2.3v2.3h-2.3zM1635.8 783.6h3.3v3.3h-3.3zM1629.5 800.8h2.8v2.8h-2.8zM1621.9 781.8h3.4v3.4h-3.4zM1624.9 778.7h2.4v2.4h-2.4zM1624.0 777.5h2.7v2.7h-2.7zM1617.3 773.3h2.3v2.3h-2.3zM1640.0 848.9h3.5v3.5h-3.5zM1635.9 856.1h2.4v2.4h-2.4zM1639.4 836.6h3.0v3.0h-3.0zM1643.2 833.7h1.8v1.8h-1.8zM1628.2 834.2h2.8v2.8h-2.8zM1633.1 845.5h3.4v3.4h-3.4zM1643.2 848.7h3.1v3.1h-3.1zM1629.0 839.7h2.7v2.7h-2.7zM1634.8 846.2h2.3v2.3h-2.3zM1638.7 843.7h3.1v3.1h-3.1zM1635.9 844.3h3.1v3.1h-3.1zM1631.8 849.6h2.3v2.3h-2.3zM1639.7 847.1h2.2v2.2h-2.2zM1637.8 854.6h2.4v2.4h-2.4zM1634.0 847.7h2.6v2.6h-2.6zM1640.0 841.1h3.4v3.4h-3.4zM1639.2 873.7h1.8v1.8h-1.8zM1650.0 867.4h3.1v3.1h-3.1zM1641.4 871.0h3.4v3.4h-3.4zM1642.7 875.7h2.1v2.1h-2.1zM1639.3 864.7h2.7v2.7h-2.7zM1644.8 869.8h2.4v2.4h-2.4zM1643.0 868.6h3.3v3.3h-3.3zM1651.9 866.0h1.7v1.7h-1.7zM1628.2 905.5h1.8v1.8h-1.8zM1627.4 901.5h2.5v2.5h-2.5zM1628.6 895.0h3.0v3.0h-3.0zM1621.7 899.9h3.4v3.4h-3.4zM1633.6 897.6h3.2v3.2h-3.2zM1670.3 902.0h1.8v1.8h-1.8zM1671.1 892.8h2.6v2.6h-2.6zM1667.6 902.1h2.1v2.1h-2.1zM1542.4 785.2h2.1v2.1h-2.1zM1536.5 783.7h2.3v2.3h-2.3zM1542.6 788.0h3.5v3.5h-3.5zM1535.9 782.0h3.5v3.5h-3.5zM1545.8 780.2h2.2v2.2h-2.2zM1533.0 777.1h2.4v2.4h-2.4zM1550.7 773.5h3.2v3.2h-3.2zM1546.6 776.5h2.8v2.8h-2.8zM1544.1 770.1h1.9v1.9h-1.9zM1544.4 810.1h2.4v2.4h-2.4zM1536.1 810.0h3.6v3.6h-3.6zM1544.0 810.2h2.7v2.7h-2.7zM1548.9 808.2h3.2v3.2h-3.2zM1543.4 809.6h3.4v3.4h-3.4zM1539.8 805.7h2.0v2.0h-2.0zM1546.6 804.2h1.7v1.7h-1.7zM1546.0 805.8h2.4v2.4h-2.4zM1520.9 694.1h1.5v1.5h-1.5zM1522.8 701.0h2.1v2.1h-2.1zM1527.2 733.9h2.2v2.2h-2.2zM1523.7 733.3h1.6v1.6h-1.6zM1526.9 728.6h2.5v2.5h-2.5zM1525.1 728.9h1.2v1.2h-1.2zM1528.3 749.1h2.3v2.3h-2.3zM1529.4 749.6h1.3v1.3h-1.3zM1524.6 754.7h2.5v2.5h-2.5zM1527.4 755.7h2.0v2.0h-2.0zM1204.6 586.7h2.4v2.4h-2.4zM1229.4 597.2h2.1v2.1h-2.1zM1225.4 597.2h1.8v1.8h-1.8zM1230.4 603.1h2.4v2.4h-2.4zM1225.0 602.8h1.4v1.4h-1.4zM1247.9 616.1h2.2v2.2h-2.2zM1246.4 610.3h1.6v1.6h-1.6zM1240.8 617.6h1.8v1.8h-1.8zM1261.4 629.7h1.5v1.5h-1.5zM1265.8 630.6h1.8v1.8h-1.8zM1264.1 624.9h1.9v1.9h-1.9zM1261.5 630.9h2.2v2.2h-2.2zM1258.3 630.6h1.7v1.7h-1.7zM1231.2 695.3h1.9v1.9h-1.9zM1222.7 691.3h2.0v2.0h-2.0zM1229.5 694.6h2.4v2.4h-2.4zM1227.9 696.8h2.7v2.7h-2.7zM1249.3 689.4h1.9v1.9h-1.9zM1256.7 688.5h1.8v1.8h-1.8zM1252.2 688.7h1.4v1.4h-1.4zM1255.2 688.8h2.1v2.1h-2.1zM1196.1 589.0h1.9v1.9h-1.9zM1196.6 585.0h1.6v1.6h-1.6zM1191.7 588.8h1.9v1.9h-1.9zM1191.6 589.9h2.0v2.0h-2.0zM1174.7 697.3h2.8v2.8h-2.8zM1180.9 702.6h2.1v2.1h-2.1zM1184.4 700.9h3.2v3.2h-3.2zM1194.0 700.1h1.8v1.8h-1.8zM1196.3 700.1h2.2v2.2h-2.2zM1200.2 699.7h1.6v1.6h-1.6zM1200.2 704.9h2.1v2.1h-2.1z"/>
<path fill="#1b1f17" d="M1121.4 219.5h3.4v3.4h-3.4zM1121.8 219.8h2.3v2.3h-2.3zM1118.3 209.0h2.3v2.3h-2.3zM1123.3 207.5h2.2v2.2h-2.2zM1127.3 205.3h1.8v1.8h-1.8zM1096.9 242.4h1.8v1.8h-1.8zM1088.3 234.2h2.2v2.2h-2.2zM1088.0 241.4h3.1v3.1h-3.1zM1088.9 241.0h3.2v3.2h-3.2zM1100.8 243.5h2.0v2.0h-2.0zM1088.6 245.6h2.4v2.4h-2.4zM1088.2 242.2h2.4v2.4h-2.4zM1093.7 241.0h3.5v3.5h-3.5zM1087.1 232.3h2.1v2.1h-2.1zM1131.1 239.6h1.6v1.6h-1.6zM1134.7 240.9h2.4v2.4h-2.4zM1134.4 242.7h2.0v2.0h-2.0zM1134.8 234.9h2.3v2.3h-2.3zM1132.5 242.0h2.4v2.4h-2.4zM1134.7 231.3h1.5v1.5h-1.5zM1133.8 237.3h1.4v1.4h-1.4zM1181.2 220.3h2.3v2.3h-2.3zM1179.6 230.1h1.9v1.9h-1.9zM1176.2 215.7h3.6v3.6h-3.6zM1173.2 225.9h2.8v2.8h-2.8zM1013.9 333.0h2.9v2.9h-2.9zM1006.7 333.0h1.7v1.7h-1.7zM1010.2 326.1h3.2v3.2h-3.2zM1009.5 320.3h2.6v2.6h-2.6zM1012.7 322.7h2.8v2.8h-2.8zM1010.9 330.4h2.2v2.2h-2.2zM985.0 341.9h2.9v2.9h-2.9zM985.4 341.2h2.9v2.9h-2.9zM1221.7 282.3h2.3v2.3h-2.3zM1218.8 289.4h2.1v2.1h-2.1zM1220.5 280.9h2.3v2.3h-2.3zM1250.7 284.0h1.5v1.5h-1.5zM1243.7 282.8h2.1v2.1h-2.1zM1250.4 285.0h2.1v2.1h-2.1zM1238.2 281.6h1.6v1.6h-1.6zM1239.6 286.0h2.4v2.4h-2.4zM1241.6 287.9h1.7v1.7h-1.7zM1245.8 279.9h1.6v1.6h-1.6zM1245.9 278.7h1.6v1.6h-1.6zM1262.3 282.5h1.9v1.9h-1.9zM1268.0 278.2h2.1v2.1h-2.1zM1267.7 277.8h2.0v2.0h-2.0zM1282.4 275.3h1.2v1.2h-1.2zM1281.6 281.3h2.2v2.2h-2.2zM1277.6 282.4h1.3v1.3h-1.3zM1275.4 279.2h1.6v1.6h-1.6zM1305.4 274.9h1.8v1.8h-1.8zM1295.4 275.8h2.4v2.4h-2.4zM1304.6 268.7h2.6v2.6h-2.6zM1299.1 279.0h1.9v1.9h-1.9zM1297.1 273.2h3.4v3.4h-3.4zM1299.6 276.2h2.5v2.5h-2.5zM1309.3 290.9h1.8v1.8h-1.8zM1317.9 284.0h2.0v2.0h-2.0zM1319.3 291.1h3.3v3.3h-3.3zM1322.2 287.4h3.1v3.1h-3.1zM1315.7 282.3h2.2v2.2h-2.2zM1313.6 296.1h2.0v2.0h-2.0zM1318.2 300.2h1.9v1.9h-1.9zM1311.3 306.7h1.2v1.2h-1.2zM1318.9 308.8h1.7v1.7h-1.7zM1310.9 302.5h2.6v2.6h-2.6zM1306.0 316.6h1.5v1.5h-1.5zM1306.7 320.3h2.4v2.4h-2.4zM1313.2 315.0h2.5v2.5h-2.5zM1299.2 326.5h3.6v3.6h-3.6zM1303.6 318.5h1.9v1.9h-1.9zM1308.8 330.7h2.3v2.3h-2.3zM1424.8 226.5h3.6v3.6h-3.6zM1420.4 223.6h2.5v2.5h-2.5zM1436.1 219.1h2.4v2.4h-2.4zM1436.0 211.0h3.1v3.1h-3.1zM1428.5 218.9h2.3v2.3h-2.3zM1443.1 230.1h2.5v2.5h-2.5zM1442.4 225.0h3.3v3.3h-3.3zM1422.3 219.8h1.8v1.8h-1.8zM1426.8 211.6h1.9v1.9h-1.9zM1421.3 211.0h3.5v3.5h-3.5zM1426.1 227.4h3.3v3.3h-3.3zM1430.0 227.1h3.5v3.5h-3.5zM1438.6 210.3h2.5v2.5h-2.5zM1432.9 223.0h3.1v3.1h-3.1zM1419.5 212.0h1.8v1.8h-1.8zM1422.8 215.9h2.8v2.8h-2.8zM1416.9 223.3h2.3v2.3h-2.3zM1477.9 185.0h2.8v2.8h-2.8zM1491.7 197.5h3.0v3.0h-3.0zM1486.0 187.4h2.8v2.8h-2.8zM1489.6 186.2h3.0v3.0h-3.0zM1483.2 190.7h2.0v2.0h-2.0zM1483.9 185.9h2.6v2.6h-2.6zM1491.1 209.6h2.9v2.9h-2.9zM1486.5 213.1h3.2v3.2h-3.2zM1487.9 212.4h3.1v3.1h-3.1zM1487.2 207.4h3.3v3.3h-3.3zM1482.2 210.6h2.1v2.1h-2.1zM1496.5 220.7h3.0v3.0h-3.0zM1498.7 222.9h3.1v3.1h-3.1zM1488.9 230.0h3.2v3.2h-3.2zM1489.9 229.5h1.9v1.9h-1.9zM1498.4 218.5h2.9v2.9h-2.9zM1490.1 225.1h3.2v3.2h-3.2zM1491.5 210.8h3.5v3.5h-3.5zM1396.6 342.3h2.1v2.1h-2.1zM1400.0 357.7h3.1v3.1h-3.1zM1403.7 337.9h1.8v1.8h-1.8zM1406.2 341.4h2.0v2.0h-2.0zM1405.5 350.0h2.6v2.6h-2.6zM1396.2 344.0h3.6v3.6h-3.6zM1396.7 349.4h2.6v2.6h-2.6zM1404.2 349.7h3.6v3.6h-3.6zM1400.2 337.0h3.2v3.2h-3.2zM1399.9 355.4h2.7v2.7h-2.7zM1406.8 342.6h3.0v3.0h-3.0zM1413.0 347.6h2.8v2.8h-2.8zM1410.3 343.4h2.5v2.5h-2.5zM1556.6 191.8h3.0v3.0h-3.0zM1560.1 204.0h2.2v2.2h-2.2zM1558.6 186.7h3.5v3.5h-3.5zM1545.7 193.7h3.0v3.0h-3.0zM1571.6 190.0h3.0v3.0h-3.0zM1558.2 201.9h2.8v2.8h-2.8zM1556.8 179.1h2.3v2.3h-2.3zM1558.3 195.8h2.4v2.4h-2.4zM1578.1 193.2h2.7v2.7h-2.7zM1555.8 192.7h2.0v2.0h-2.0zM1565.7 203.1h2.6v2.6h-2.6zM1560.0 185.8h3.2v3.2h-3.2zM1561.5 207.7h1.8v1.8h-1.8zM1574.2 197.1h3.0v3.0h-3.0zM1555.3 187.5h2.9v2.9h-2.9zM1561.7 188.1h3.1v3.1h-3.1zM1548.0 203.4h3.2v3.2h-3.2zM1566.3 183.9h1.9v1.9h-1.9zM1551.9 179.1h2.5v2.5h-2.5zM1569.7 185.2h2.5v2.5h-2.5zM1550.9 196.7h2.1v2.1h-2.1zM1551.5 201.7h1.7v1.7h-1.7zM1545.4 198.5h2.2v2.2h-2.2zM1557.1 187.7h3.2v3.2h-3.2zM1659.6 161.5h1.7v1.7h-1.7zM1659.1 172.4h3.5v3.5h-3.5zM1666.2 172.5h2.8v2.8h-2.8zM1647.5 173.4h2.4v2.4h-2.4zM1664.7 179.7h1.8v1.8h-1.8zM1657.2 181.1h1.9v1.9h-1.9zM1652.4 172.9h2.0v2.0h-2.0zM1652.2 182.5h2.7v2.7h-2.7zM1672.5 175.8h2.8v2.8h-2.8zM1661.5 163.9h3.5v3.5h-3.5zM1654.8 161.8h1.9v1.9h-1.9zM1653.9 181.8h1.8v1.8h-1.8zM1665.5 176.6h2.9v2.9h-2.9zM1663.4 166.3h2.4v2.4h-2.4zM1665.3 160.4h2.3v2.3h-2.3zM1657.6 177.7h2.5v2.5h-2.5zM1661.3 166.4h3.2v3.2h-3.2zM1719.5 322.3h2.0v2.0h-2.0zM1721.7 296.3h3.4v3.4h-3.4zM1722.3 294.1h3.6v3.6h-3.6zM1732.3 293.4h1.9v1.9h-1.9zM1720.2 321.2h2.4v2.4h-2.4zM1721.3 289.0h3.6v3.6h-3.6zM1711.8 322.7h2.4v2.4h-2.4zM1739.5 309.6h2.1v2.1h-2.1zM1725.0 294.4h1.9v1.9h-1.9zM1723.6 327.2h3.4v3.4h-3.4zM1703.5 315.8h3.0v3.0h-3.0zM1728.2 315.4h2.4v2.4h-2.4zM1729.8 323.8h2.8v2.8h-2.8zM1732.9 324.1h2.2v2.2h-2.2zM1707.9 292.6h3.2v3.2h-3.2zM1713.8 312.3h1.8v1.8h-1.8zM1721.7 301.2h3.3v3.3h-3.3zM1723.1 292.1h2.0v2.0h-2.0zM1711.1 321.2h1.8v1.8h-1.8zM1713.5 327.2h2.2v2.2h-2.2zM1729.9 299.0h2.7v2.7h-2.7zM1705.8 314.2h2.7v2.7h-2.7zM1711.3 303.3h2.4v2.4h-2.4zM1711.2 297.9h3.6v3.6h-3.6zM1740.4 304.5h2.1v2.1h-2.1zM1714.3 313.6h2.9v2.9h-2.9zM1729.4 306.9h3.2v3.2h-3.2zM1605.5 324.0h1.9v1.9h-1.9zM1601.2 326.4h2.4v2.4h-2.4zM1603.2 314.1h1.8v1.8h-1.8zM1598.1 316.3h1.5v1.5h-1.5zM1603.8 326.7h2.4v2.4h-2.4zM1852.1 282.8h1.9v1.9h-1.9zM1849.5 282.8h1.8v1.8h-1.8zM1847.8 284.9h1.8v1.8h-1.8zM1851.5 288.6h2.1v2.1h-2.1zM1846.2 281.8h2.1v2.1h-2.1zM1839.9 326.0h2.0v2.0h-2.0zM1844.7 327.2h2.2v2.2h-2.2zM1849.5 321.8h1.2v1.2h-1.2zM1841.0 321.0h2.5v2.5h-2.5zM1846.3 328.3h2.4v2.4h-2.4zM1844.5 329.8h1.8v1.8h-1.8zM1846.4 319.5h1.6v1.6h-1.6zM1106.4 533.2h1.5v1.5h-1.5zM1103.3 541.9h2.4v2.4h-2.4zM1106.4 541.8h1.9v1.9h-1.9zM1731.2 482.3h1.9v1.9h-1.9zM1738.2 472.1h3.1v3.1h-3.1zM1725.8 458.8h3.0v3.0h-3.0zM1711.3 461.5h2.5v2.5h-2.5zM1717.3 480.8h2.9v2.9h-2.9zM1726.7 486.2h2.0v2.0h-2.0zM1733.9 470.3h2.4v2.4h-2.4zM1738.4 467.0h2.9v2.9h-2.9zM1718.8 462.5h3.2v3.2h-3.2zM1713.4 464.3h3.4v3.4h-3.4zM1708.4 472.5h2.1v2.1h-2.1zM1733.8 471.5h2.8v2.8h-2.8zM1725.9 470.4h3.3v3.3h-3.3zM1712.9 484.0h3.4v3.4h-3.4zM1711.0 474.0h3.1v3.1h-3.1zM1725.3 482.4h2.6v2.6h-2.6zM1696.2 469.9h2.1v2.1h-2.1zM1693.2 469.0h2.3v2.3h-2.3zM1693.5 471.5h2.6v2.6h-2.6zM1693.8 464.4h3.0v3.0h-3.0zM1704.2 463.8h1.9v1.9h-1.9zM1703.0 479.7h1.9v1.9h-1.9zM1699.5 473.7h1.9v1.9h-1.9zM1711.5 475.2h1.9v1.9h-1.9zM1738.4 470.5h2.2v2.2h-2.2zM1745.0 468.6h2.7v2.7h-2.7zM1746.0 459.3h1.8v1.8h-1.8zM1743.5 470.5h3.5v3.5h-3.5zM1739.5 472.9h2.4v2.4h-2.4zM1747.6 469.3h2.0v2.0h-2.0zM1739.0 465.9h2.1v2.1h-2.1zM1673.9 497.9h2.5v2.5h-2.5zM1673.8 504.9h2.5v2.5h-2.5zM1673.6 525.3h3.1v3.1h-3.1zM1662.0 530.3h3.4v3.4h-3.4zM1664.4 515.1h2.4v2.4h-2.4zM1667.0 527.3h2.8v2.8h-2.8zM1657.6 522.3h2.7v2.7h-2.7zM1676.6 521.7h1.9v1.9h-1.9zM1670.6 507.0h3.4v3.4h-3.4zM1673.7 502.2h2.8v2.8h-2.8zM1664.1 518.3h3.6v3.6h-3.6zM1671.2 504.1h3.6v3.6h-3.6zM1667.2 498.8h3.4v3.4h-3.4zM1672.8 500.7h3.1v3.1h-3.1zM1649.6 510.5h2.1v2.1h-2.1zM1681.2 516.3h1.8v1.8h-1.8zM1678.0 500.7h2.5v2.5h-2.5zM1664.8 513.7h1.8v1.8h-1.8zM1674.3 498.6h2.1v2.1h-2.1zM1665.4 497.5h2.2v2.2h-2.2zM1659.2 519.1h2.1v2.1h-2.1zM1665.6 497.8h3.4v3.4h-3.4zM1665.1 524.6h1.9v1.9h-1.9zM1669.4 519.5h3.4v3.4h-3.4zM1657.2 511.4h3.2v3.2h-3.2zM1673.0 513.0h2.3v2.3h-2.3zM1665.7 523.6h2.6v2.6h-2.6zM1656.7 518.8h1.9v1.9h-1.9zM1654.9 515.0h1.7v1.7h-1.7zM1653.4 524.4h1.7v1.7h-1.7zM1654.3 518.2h3.2v3.2h-3.2zM1652.4 524.1h2.9v2.9h-2.9zM1653.2 525.1h2.5v2.5h-2.5zM1655.9 522.7h3.0v3.0h-3.0zM1655.1 526.2h2.5v2.5h-2.5zM1656.9 522.1h2.8v2.8h-2.8zM1647.2 527.0h2.3v2.3h-2.3zM1656.6 511.5h3.5v3.5h-3.5zM1653.9 519.0h3.1v3.1h-3.1zM1681.1 496.1h3.3v3.3h-3.3zM1689.1 514.5h2.1v2.1h-2.1zM1684.9 508.9h3.6v3.6h-3.6zM1688.5 510.2h3.1v3.1h-3.1zM1616.9 530.4h3.6v3.6h-3.6zM1625.0 531.5h3.4v3.4h-3.4zM1627.8 529.7h3.0v3.0h-3.0zM1621.7 524.4h2.8v2.8h-2.8zM1619.8 529.7h2.4v2.4h-2.4zM1714.8 518.6h2.5v2.5h-2.5zM1717.1 515.6h1.6v1.6h-1.6zM1711.2 517.9h2.1v2.1h-2.1zM1715.3 524.0h1.2v1.2h-1.2zM1708.3 521.3h2.4v2.4h-2.4zM1741.2 512.6h1.9v1.9h-1.9zM1737.2 516.7h1.4v1.4h-1.4zM1750.3 547.9h1.7v1.7h-1.7zM1742.4 545.7h1.3v1.3h-1.3zM1741.3 548.3h2.3v2.3h-2.3zM1745.9 549.2h2.2v2.2h-2.2zM1569.4 533.8h2.1v2.1h-2.1zM1571.5 542.5h2.2v2.2h-2.2zM1576.1 531.4h2.4v2.4h-2.4zM1579.4 537.0h1.2v1.2h-1.2zM1569.6 540.1h1.8v1.8h-1.8zM1574.8 530.8h2.5v2.5h-2.5zM1574.0 541.1h2.2v2.2h-2.2zM1534.9 547.5h1.5v1.5h-1.5zM1538.4 543.8h1.7v1.7h-1.7zM1538.3 547.6h2.5v2.5h-2.5zM1542.9 539.6h1.6v1.6h-1.6zM918.0 745.5h1.7v1.7h-1.7zM915.7 749.5h3.3v3.3h-3.3zM913.1 746.0h3.4v3.4h-3.4zM936.9 747.3h2.0v2.0h-2.0zM939.7 750.7h2.8v2.8h-2.8zM934.9 752.5h3.5v3.5h-3.5zM943.8 750.7h2.0v2.0h-2.0zM935.7 744.9h3.6v3.6h-3.6zM938.3 742.4h3.3v3.3h-3.3zM934.7 749.3h2.5v2.5h-2.5zM943.1 742.6h3.5v3.5h-3.5zM936.4 749.3h1.9v1.9h-1.9zM943.2 748.1h2.1v2.1h-2.1zM1030.1 734.1h2.2v2.2h-2.2zM1039.2 752.5h3.2v3.2h-3.2zM1030.5 726.4h2.2v2.2h-2.2zM1045.0 743.9h2.2v2.2h-2.2zM1038.1 741.4h3.4v3.4h-3.4zM1034.4 722.5h3.2v3.2h-3.2zM1024.7 740.4h2.3v2.3h-2.3zM1030.6 747.5h2.5v2.5h-2.5zM1039.6 724.8h2.4v2.4h-2.4zM1041.1 733.1h1.9v1.9h-1.9zM1044.5 736.6h1.7v1.7h-1.7zM1047.1 731.3h3.2v3.2h-3.2zM1049.0 741.9h3.0v3.0h-3.0zM1032.6 744.9h3.3v3.3h-3.3zM1034.4 741.9h1.7v1.7h-1.7zM1025.2 758.5h2.3v2.3h-2.3zM1040.0 751.4h3.1v3.1h-3.1zM1042.1 746.6h3.5v3.5h-3.5zM1030.4 761.4h2.7v2.7h-2.7zM1039.8 764.7h3.5v3.5h-3.5zM1036.7 742.5h1.8v1.8h-1.8zM1046.4 759.3h2.1v2.1h-2.1zM1044.2 753.2h3.4v3.4h-3.4zM918.0 661.6h2.0v2.0h-2.0zM926.6 660.2h2.4v2.4h-2.4zM917.4 654.7h1.8v1.8h-1.8zM925.1 665.9h2.7v2.7h-2.7zM931.9 658.8h2.7v2.7h-2.7zM914.8 661.6h2.6v2.6h-2.6zM1446.8 593.5h3.3v3.3h-3.3zM1449.7 597.0h3.5v3.5h-3.5zM1438.3 609.0h2.6v2.6h-2.6zM1440.9 604.4h3.4v3.4h-3.4zM1442.8 604.7h3.1v3.1h-3.1zM1455.4 624.4h1.9v1.9h-1.9zM1451.2 599.1h2.8v2.8h-2.8zM1457.8 617.4h1.9v1.9h-1.9zM1443.8 598.1h1.7v1.7h-1.7zM1451.5 602.7h2.1v2.1h-2.1zM1469.9 600.8h1.7v1.7h-1.7zM1454.4 605.7h2.0v2.0h-2.0zM1438.7 612.6h2.9v2.9h-2.9zM1455.7 598.2h2.7v2.7h-2.7zM1448.0 591.5h2.6v2.6h-2.6zM1458.2 592.4h1.8v1.8h-1.8zM1461.8 609.8h2.0v2.0h-2.0zM1469.8 619.4h3.0v3.0h-3.0zM1451.8 598.8h3.4v3.4h-3.4zM1450.8 608.5h2.0v2.0h-2.0zM1439.3 600.9h1.8v1.8h-1.8zM1463.9 609.4h1.8v1.8h-1.8zM1473.6 598.0h3.6v3.6h-3.6zM1450.0 600.7h1.9v1.9h-1.9zM1461.1 607.7h3.4v3.4h-3.4zM1460.7 587.3h2.1v2.1h-2.1zM1472.6 609.8h2.4v2.4h-2.4zM1443.1 597.4h2.5v2.5h-2.5zM1438.2 589.3h2.9v2.9h-2.9zM1435.6 590.5h3.1v3.1h-3.1zM1445.2 580.5h3.1v3.1h-3.1zM1452.4 593.3h3.4v3.4h-3.4zM1447.2 595.1h2.2v2.2h-2.2zM1441.2 582.4h2.1v2.1h-2.1zM1449.9 582.3h3.4v3.4h-3.4zM1446.8 597.0h2.8v2.8h-2.8zM1450.9 583.3h2.4v2.4h-2.4zM1459.5 622.9h2.6v2.6h-2.6zM1469.7 630.9h3.1v3.1h-3.1zM1471.9 622.6h2.0v2.0h-2.0zM1459.7 620.0h3.2v3.2h-3.2zM1477.7 624.1h3.1v3.1h-3.1zM1466.7 626.1h2.6v2.6h-2.6zM1461.8 620.9h2.0v2.0h-2.0zM1464.3 632.0h2.8v2.8h-2.8zM1489.6 621.7h2.5v2.5h-2.5zM1482.5 627.0h2.2v2.2h-2.2zM1485.0 615.3h1.9v1.9h-1.9zM1491.7 617.1h1.3v1.3h-1.3zM1481.2 626.1h2.5v2.5h-2.5zM1483.2 618.5h2.0v2.0h-2.0zM1484.3 622.2h1.7v1.7h-1.7zM1489.2 619.1h2.5v2.5h-2.5zM1480.9 620.6h2.6v2.6h-2.6zM1486.4 620.2h1.2v1.2h-1.2zM1515.0 632.7h1.5v1.5h-1.5zM1510.2 628.6h2.2v2.2h-2.2zM1508.5 640.4h1.7v1.7h-1.7zM1503.8 638.9h1.6v1.6h-1.6zM1515.7 632.6h1.6v1.6h-1.6zM1508.1 633.9h1.5v1.5h-1.5zM1515.6 634.7h2.0v2.0h-2.0zM1437.3 537.7h3.0v3.0h-3.0zM1429.3 542.4h3.2v3.2h-3.2zM1438.2 549.0h2.3v2.3h-2.3zM1433.9 540.0h3.1v3.1h-3.1zM1427.9 546.9h2.5v2.5h-2.5zM1436.5 541.9h3.1v3.1h-3.1zM1456.5 543.8h3.4v3.4h-3.4zM1453.2 542.0h3.5v3.5h-3.5zM1460.2 544.4h2.6v2.6h-2.6zM1468.4 547.5h2.4v2.4h-2.4zM1465.8 550.2h2.3v2.3h-2.3zM1455.9 541.2h3.6v3.6h-3.6zM1463.5 540.7h2.9v2.9h-2.9zM1458.4 550.2h2.5v2.5h-2.5zM1462.6 550.5h2.1v2.1h-2.1zM1469.7 548.1h2.3v2.3h-2.3zM1471.7 547.5h2.1v2.1h-2.1zM1475.6 540.4h2.1v2.1h-2.1zM1474.2 542.6h3.0v3.0h-3.0zM1479.4 546.9h3.2v3.2h-3.2zM1480.2 544.3h2.6v2.6h-2.6zM1470.1 539.9h3.6v3.6h-3.6zM1481.7 548.6h2.2v2.2h-2.2zM1471.2 546.1h2.5v2.5h-2.5zM1472.1 551.3h3.1v3.1h-3.1zM1494.5 543.0h2.9v2.9h-2.9zM1483.9 539.8h3.1v3.1h-3.1zM1484.0 538.5h2.3v2.3h-2.3zM1486.8 537.2h3.2v3.2h-3.2zM1485.1 546.1h2.6v2.6h-2.6zM1489.3 545.2h3.4v3.4h-3.4zM1488.8 546.6h2.0v2.0h-2.0zM1484.9 543.7h2.7v2.7h-2.7zM1495.7 545.9h2.1v2.1h-2.1zM1494.7 542.8h3.5v3.5h-3.5zM1504.1 542.4h1.4v1.4h-1.4zM1509.8 546.1h1.7v1.7h-1.7zM1504.6 548.4h1.6v1.6h-1.6zM1507.1 545.4h1.7v1.7h-1.7zM1503.6 545.8h2.6v2.6h-2.6zM1497.7 546.5h2.2v2.2h-2.2zM1653.2 618.3h2.8v2.8h-2.8zM1640.6 619.7h2.4v2.4h-2.4zM1653.0 613.3h3.1v3.1h-3.1zM1647.8 621.5h2.3v2.3h-2.3zM1642.7 615.8h1.8v1.8h-1.8zM1616.5 692.1h1.7v1.7h-1.7zM1617.6 682.1h2.2v2.2h-2.2zM1619.0 729.6h1.9v1.9h-1.9zM1631.4 728.7h2.8v2.8h-2.8zM1628.5 730.4h1.7v1.7h-1.7zM883.6 819.1h2.5v2.5h-2.5zM890.0 819.4h2.3v2.3h-2.3zM895.4 861.9h1.7v1.7h-1.7zM897.9 859.7h2.5v2.5h-2.5zM894.7 858.2h1.3v1.3h-1.3zM897.3 911.4h2.3v2.3h-2.3zM894.6 947.7h2.6v2.6h-2.6zM891.2 946.0h2.4v2.4h-2.4zM894.1 947.1h2.3v2.3h-2.3zM896.6 946.2h1.8v1.8h-1.8zM898.3 947.3h1.3v1.3h-1.3zM894.9 950.2h1.9v1.9h-1.9zM1056.7 792.3h2.9v2.9h-2.9zM1046.8 787.7h2.4v2.4h-2.4zM1044.3 795.2h2.5v2.5h-2.5zM1045.7 794.2h2.4v2.4h-2.4zM1046.2 796.8h2.7v2.7h-2.7zM1047.8 794.2h2.1v2.1h-2.1zM1055.4 791.1h1.9v1.9h-1.9zM1050.7 797.6h3.0v3.0h-3.0zM1052.2 789.4h3.3v3.3h-3.3zM1060.9 854.9h3.2v3.2h-3.2zM1057.5 855.3h3.5v3.5h-3.5zM1052.0 859.0h2.1v2.1h-2.1zM1041.2 849.7h2.3v2.3h-2.3zM1042.1 842.8h3.6v3.6h-3.6zM1056.0 833.6h2.2v2.2h-2.2zM1039.3 837.4h2.1v2.1h-2.1zM1038.6 846.3h3.6v3.6h-3.6zM1052.1 836.1h3.0v3.0h-3.0zM1057.9 834.6h2.2v2.2h-2.2zM1056.0 853.1h2.1v2.1h-2.1zM1045.4 842.5h2.5v2.5h-2.5zM1045.1 845.1h1.7v1.7h-1.7zM1045.7 849.4h3.5v3.5h-3.5zM1046.3 848.3h1.8v1.8h-1.8zM1054.8 841.8h2.8v2.8h-2.8zM1048.5 834.8h2.8v2.8h-2.8zM1057.9 854.6h2.1v2.1h-2.1zM1055.7 838.6h3.2v3.2h-3.2zM1059.2 849.4h3.2v3.2h-3.2zM1051.5 856.3h3.5v3.5h-3.5zM1037.3 844.3h2.3v2.3h-2.3zM1089.8 845.8h2.0v2.0h-2.0zM1096.2 843.5h2.3v2.3h-2.3zM1096.6 840.1h2.0v2.0h-2.0zM1128.0 838.4h1.6v1.6h-1.6zM1133.4 841.6h1.5v1.5h-1.5zM1136.1 832.3h2.6v2.6h-2.6zM1131.6 834.9h2.2v2.2h-2.2zM1135.7 842.5h1.6v1.6h-1.6zM1169.4 835.6h1.8v1.8h-1.8zM1173.1 832.0h2.0v2.0h-2.0zM1176.3 836.8h2.5v2.5h-2.5zM1180.4 835.6h1.4v1.4h-1.4zM1171.8 830.4h2.4v2.4h-2.4zM1045.5 760.3h1.8v1.8h-1.8zM1044.5 759.2h1.3v1.3h-1.3zM1040.6 769.0h2.1v2.1h-2.1zM1046.0 765.7h2.1v2.1h-2.1zM1044.3 761.6h1.9v1.9h-1.9zM1132.6 947.4h2.0v2.0h-2.0zM1139.8 934.7h3.0v3.0h-3.0zM1129.8 938.8h2.4v2.4h-2.4zM1129.7 941.7h2.7v2.7h-2.7zM1139.9 941.0h2.5v2.5h-2.5zM1128.2 942.8h3.3v3.3h-3.3zM1134.0 943.0h3.3v3.3h-3.3zM1150.4 934.4h2.4v2.4h-2.4zM1138.0 946.0h2.4v2.4h-2.4zM1127.8 937.0h2.4v2.4h-2.4zM1178.6 935.5h2.1v2.1h-2.1zM1187.7 935.9h3.3v3.3h-3.3zM1183.0 925.9h2.6v2.6h-2.6zM1199.3 926.4h2.8v2.8h-2.8zM1187.9 941.0h2.7v2.7h-2.7zM1196.7 940.1h3.3v3.3h-3.3zM1187.7 920.7h2.5v2.5h-2.5zM1191.4 932.4h2.7v2.7h-2.7zM1189.7 932.4h1.9v1.9h-1.9zM1239.8 839.1h3.3v3.3h-3.3zM1243.8 829.1h3.1v3.1h-3.1zM1238.5 827.3h3.3v3.3h-3.3zM1240.8 826.2h2.3v2.3h-2.3zM1245.7 836.9h2.2v2.2h-2.2zM1242.9 829.7h3.4v3.4h-3.4zM1242.0 834.5h3.1v3.1h-3.1zM1235.5 822.9h1.2v1.2h-1.2zM1241.9 819.9h2.0v2.0h-2.0zM1235.8 812.6h2.0v2.0h-2.0zM1234.4 814.9h1.8v1.8h-1.8zM1270.7 830.7h2.4v2.4h-2.4zM1266.0 837.7h2.0v2.0h-2.0zM1269.2 835.3h1.9v1.9h-1.9zM1270.0 836.3h1.5v1.5h-1.5zM1263.1 834.3h2.0v2.0h-2.0zM1271.9 836.6h1.9v1.9h-1.9zM1331.5 845.6h1.8v1.8h-1.8zM1331.9 835.0h1.7v1.7h-1.7zM1333.6 836.6h2.1v2.1h-2.1zM1330.1 841.5h2.4v2.4h-2.4zM1332.8 845.3h2.2v2.2h-2.2zM1332.4 837.3h1.7v1.7h-1.7zM1374.7 828.7h1.7v1.7h-1.7zM1376.4 834.3h2.4v2.4h-2.4zM1423.3 823.2h2.4v2.4h-2.4zM1417.7 834.3h1.2v1.2h-1.2zM1417.9 833.4h1.5v1.5h-1.5zM1417.6 824.0h1.6v1.6h-1.6zM1420.1 830.1h2.2v2.2h-2.2zM1466.2 825.9h2.5v2.5h-2.5zM1455.3 827.6h2.4v2.4h-2.4zM1459.9 831.0h2.5v2.5h-2.5zM1460.8 822.3h1.5v1.5h-1.5zM1460.5 830.3h2.3v2.3h-2.3zM1503.5 819.6h1.8v1.8h-1.8zM1504.0 813.4h1.5v1.5h-1.5zM1500.3 823.6h1.3v1.3h-1.3zM1509.9 816.0h2.3v2.3h-2.3zM1502.2 811.9h2.3v2.3h-2.3zM1501.4 824.5h1.6v1.6h-1.6zM1498.0 853.4h1.7v1.7h-1.7zM1510.2 851.1h1.9v1.9h-1.9zM1503.0 858.1h3.4v3.4h-3.4zM1429.1 866.9h2.3v2.3h-2.3zM1436.0 865.5h2.3v2.3h-2.3zM1429.7 865.5h2.4v2.4h-2.4zM1427.4 865.3h2.4v2.4h-2.4zM1428.5 870.9h2.4v2.4h-2.4zM1381.6 913.8h3.0v3.0h-3.0zM1361.5 913.0h3.5v3.5h-3.5zM1370.0 909.7h3.6v3.6h-3.6zM1370.4 895.2h3.2v3.2h-3.2zM1356.4 901.8h3.6v3.6h-3.6zM1374.5 911.6h3.6v3.6h-3.6zM1381.0 903.2h2.6v2.6h-2.6zM1377.1 901.5h1.8v1.8h-1.8zM1376.0 905.0h3.0v3.0h-3.0zM1375.9 905.8h3.4v3.4h-3.4zM1366.2 918.9h2.4v2.4h-2.4zM1381.4 907.4h1.9v1.9h-1.9zM1378.3 914.3h1.9v1.9h-1.9zM1365.0 918.3h2.6v2.6h-2.6zM1371.7 898.5h3.4v3.4h-3.4zM1375.3 909.1h1.9v1.9h-1.9zM1359.0 903.4h2.6v2.6h-2.6zM1360.6 909.3h1.7v1.7h-1.7zM1369.9 918.3h3.0v3.0h-3.0zM1338.9 934.5h2.7v2.7h-2.7zM1329.7 929.9h2.0v2.0h-2.0zM1337.7 932.8h3.2v3.2h-3.2zM1341.0 926.5h1.9v1.9h-1.9zM1337.5 917.9h1.9v1.9h-1.9zM1330.2 913.8h2.3v2.3h-2.3zM1336.6 920.0h2.1v2.1h-2.1zM1346.8 916.4h3.6v3.6h-3.6zM1328.8 918.6h2.6v2.6h-2.6zM1335.5 908.0h3.2v3.2h-3.2zM1336.3 923.9h2.0v2.0h-2.0zM1348.8 925.4h3.4v3.4h-3.4zM1331.4 929.5h2.3v2.3h-2.3zM1341.2 933.3h2.4v2.4h-2.4zM1248.4 923.7h2.4v2.4h-2.4zM1253.7 911.1h3.0v3.0h-3.0zM1252.2 915.9h2.8v2.8h-2.8zM1241.1 932.1h2.0v2.0h-2.0zM1242.1 920.8h2.6v2.6h-2.6zM1260.2 924.3h3.1v3.1h-3.1zM1253.0 914.2h2.0v2.0h-2.0zM1246.5 920.8h2.3v2.3h-2.3zM1246.6 933.7h2.4v2.4h-2.4zM1256.9 929.1h3.6v3.6h-3.6zM1300.8 945.9h1.8v1.8h-1.8zM1304.5 949.5h2.3v2.3h-2.3zM1299.7 951.4h2.0v2.0h-2.0zM1297.7 927.9h3.6v3.6h-3.6zM1300.2 930.0h2.9v2.9h-2.9zM1302.9 926.4h3.2v3.2h-3.2zM1306.6 947.9h2.2v2.2h-2.2zM1531.6 768.8h2.3v2.3h-2.3zM1528.9 766.2h2.6v2.6h-2.6zM1627.8 798.8h1.7v1.7h-1.7zM1637.2 785.2h3.0v3.0h-3.0zM1620.3 794.2h2.0v2.0h-2.0zM1635.5 789.4h3.3v3.3h-3.3zM1619.8 783.2h2.2v2.2h-2.2zM1631.8 792.0h2.7v2.7h-2.7zM1622.1 792.7h1.8v1.8h-1.8zM1636.1 787.9h2.2v2.2h-2.2zM1632.6 796.5h3.0v3.0h-3.0zM1637.8 782.1h3.5v3.5h-3.5zM1631.3 784.8h3.6v3.6h-3.6zM1618.2 796.0h3.5v3.5h-3.5zM1620.7 796.0h3.2v3.2h-3.2zM1617.4 770.8h2.2v2.2h-2.2zM1613.5 778.7h3.5v3.5h-3.5zM1624.3 775.3h2.4v2.4h-2.4zM1615.0 768.3h2.4v2.4h-2.4zM1625.1 775.6h2.1v2.1h-2.1zM1624.4 780.8h1.8v1.8h-1.8zM1645.9 846.3h3.6v3.6h-3.6zM1638.4 842.3h1.8v1.8h-1.8zM1636.3 832.7h2.1v2.1h-2.1zM1642.7 844.4h2.8v2.8h-2.8zM1628.8 851.7h2.3v2.3h-2.3zM1629.5 847.8h3.1v3.1h-3.1zM1642.9 841.9h2.7v2.7h-2.7zM1643.6 867.4h3.1v3.1h-3.1zM1651.6 866.7h2.5v2.5h-2.5zM1639.7 876.0h2.2v2.2h-2.2zM1646.5 865.5h1.7v1.7h-1.7zM1631.1 899.6h2.8v2.8h-2.8zM1620.2 894.7h1.8v1.8h-1.8zM1622.4 891.4h3.4v3.4h-3.4zM1629.4 899.9h1.8v1.8h-1.8zM1628.8 904.9h1.9v1.9h-1.9zM1669.0 903.4h3.0v3.0h-3.0zM1676.7 900.6h2.1v2.1h-2.1zM1672.6 899.3h2.9v2.9h-2.9zM1675.8 898.3h3.6v3.6h-3.6zM1676.6 901.4h2.7v2.7h-2.7zM1664.5 894.0h3.3v3.3h-3.3zM1535.2 774.1h2.9v2.9h-2.9zM1551.0 783.6h2.0v2.0h-2.0zM1541.8 789.3h2.3v2.3h-2.3zM1533.0 772.6h2.4v2.4h-2.4zM1539.5 771.1h2.9v2.9h-2.9zM1544.1 786.6h2.7v2.7h-2.7zM1536.9 784.2h2.4v2.4h-2.4zM1541.8 773.7h2.4v2.4h-2.4zM1544.8 779.6h2.7v2.7h-2.7zM1536.6 783.6h2.5v2.5h-2.5zM1545.7 771.5h3.5v3.5h-3.5zM1544.0 777.6h2.2v2.2h-2.2zM1537.0 781.8h2.2v2.2h-2.2zM1540.3 807.5h2.7v2.7h-2.7zM1545.3 806.0h2.6v2.6h-2.6zM1548.9 814.5h2.0v2.0h-2.0zM1548.3 806.8h2.6v2.6h-2.6zM1520.0 699.2h2.4v2.4h-2.4zM1518.6 702.4h2.0v2.0h-2.0zM1522.5 702.8h2.3v2.3h-2.3zM1517.4 698.3h1.5v1.5h-1.5zM1522.7 695.8h1.6v1.6h-1.6zM1517.7 698.9h2.5v2.5h-2.5zM1519.1 696.3h1.2v1.2h-1.2zM1519.2 696.2h1.4v1.4h-1.4zM1527.2 733.1h1.7v1.7h-1.7zM1528.3 725.7h1.7v1.7h-1.7zM1530.6 724.9h2.1v2.1h-2.1zM1528.9 730.1h1.3v1.3h-1.3zM1526.5 751.7h2.2v2.2h-2.2zM1526.8 751.3h1.9v1.9h-1.9zM1528.7 757.8h2.4v2.4h-2.4zM1532.7 753.2h1.5v1.5h-1.5zM1206.4 591.1h2.2v2.2h-2.2zM1204.3 589.5h2.4v2.4h-2.4zM1212.7 588.1h2.1v2.1h-2.1zM1227.2 600.9h1.5v1.5h-1.5zM1233.5 598.6h1.5v1.5h-1.5zM1244.5 618.5h1.4v1.4h-1.4zM1242.8 613.7h2.2v2.2h-2.2zM1241.6 617.6h1.4v1.4h-1.4zM1248.4 612.4h2.1v2.1h-2.1zM1244.8 616.2h1.2v1.2h-1.2zM1246.3 616.3h1.6v1.6h-1.6zM1269.9 634.3h2.1v2.1h-2.1zM1260.2 628.8h1.3v1.3h-1.3zM1260.0 631.1h1.8v1.8h-1.8zM1225.4 686.9h2.5v2.5h-2.5zM1222.6 691.5h3.6v3.6h-3.6zM1224.5 698.8h3.1v3.1h-3.1zM1220.8 698.8h3.2v3.2h-3.2zM1228.3 693.5h3.4v3.4h-3.4zM1258.1 694.4h2.3v2.3h-2.3zM1252.5 694.1h2.5v2.5h-2.5zM1258.2 695.3h1.8v1.8h-1.8zM1194.8 585.7h1.5v1.5h-1.5zM1193.7 585.3h2.4v2.4h-2.4zM1193.2 592.8h2.5v2.5h-2.5zM1200.9 587.3h2.4v2.4h-2.4zM1191.9 589.0h2.3v2.3h-2.3zM1193.3 585.2h2.4v2.4h-2.4zM1199.0 585.3h2.1v2.1h-2.1zM1176.5 703.7h3.0v3.0h-3.0zM1178.3 704.8h2.4v2.4h-2.4zM1185.1 703.5h3.4v3.4h-3.4zM1179.5 707.4h2.2v2.2h-2.2zM1175.1 706.6h2.7v2.7h-2.7zM1177.4 697.2h2.6v2.6h-2.6zM1199.3 698.1h1.4v1.4h-1.4zM1194.6 699.9h2.5v2.5h-2.5zM1196.0 697.5h2.0v2.0h-2.0zM1199.8 694.6h1.2v1.2h-1.2z"/>
<path fill="#3d4631" d="M1124.4 204.4h3.3v3.3h-3.3zM1123.7 215.0h2.6v2.6h-2.6zM1117.1 217.9h2.1v2.1h-2.1zM1123.3 214.4h2.2v2.2h-2.2zM1125.1 211.9h2.6v2.6h-2.6zM1123.0 214.4h2.7v2.7h-2.7zM1096.8 245.5h2.9v2.9h-2.9zM1082.0 246.1h2.6v2.6h-2.6zM1093.7 246.4h2.0v2.0h-2.0zM1093.6 238.9h2.6v2.6h-2.6zM1097.1 235.3h3.3v3.3h-3.3zM1096.3 232.7h2.0v2.0h-2.0zM1094.0 244.0h3.1v3.1h-3.1zM1094.1 250.5h2.6v2.6h-2.6zM1131.8 236.7h1.3v1.3h-1.3zM1137.4 239.2h2.4v2.4h-2.4zM1139.3 241.3h1.5v1.5h-1.5zM1185.4 225.0h2.5v2.5h-2.5zM1172.6 221.2h2.0v2.0h-2.0zM1184.0 223.9h2.1v2.1h-2.1zM1006.9 329.3h3.0v3.0h-3.0zM1008.3 336.1h2.2v2.2h-2.2zM1002.8 326.8h3.4v3.4h-3.4zM1005.6 323.1h2.3v2.3h-2.3zM1009.1 332.2h2.9v2.9h-2.9zM1004.7 324.2h2.1v2.1h-2.1zM1007.7 335.5h3.6v3.6h-3.6zM989.0 347.2h2.4v2.4h-2.4zM988.4 341.1h2.5v2.5h-2.5zM986.4 352.6h3.1v3.1h-3.1zM989.9 343.0h3.0v3.0h-3.0zM988.8 346.5h2.2v2.2h-2.2zM982.1 353.8h2.6v2.6h-2.6zM980.8 346.5h3.5v3.5h-3.5zM986.8 350.2h3.2v3.2h-3.2zM1218.9 288.3h1.5v1.5h-1.5zM1220.2 287.8h2.0v2.0h-2.0zM1224.8 282.0h2.3v2.3h-2.3zM1227.1 280.8h2.3v2.3h-2.3zM1217.1 287.6h2.2v2.2h-2.2zM1245.4 281.7h1.9v1.9h-1.9zM1248.7 285.3h1.2v1.2h-1.2zM1246.0 289.5h1.8v1.8h-1.8zM1249.6 280.8h1.7v1.7h-1.7zM1259.0 274.7h2.6v2.6h-2.6zM1260.9 276.4h2.2v2.2h-2.2zM1265.4 277.8h2.2v2.2h-2.2zM1265.1 281.8h2.2v2.2h-2.2zM1258.1 284.1h1.8v1.8h-1.8zM1265.8 285.2h1.7v1.7h-1.7zM1258.7 284.6h2.6v2.6h-2.6zM1258.6 277.7h1.8v1.8h-1.8zM1276.3 282.6h2.0v2.0h-2.0zM1275.9 277.4h1.7v1.7h-1.7zM1280.1 280.2h1.8v1.8h-1.8zM1278.6 283.4h1.5v1.5h-1.5zM1276.6 276.3h2.3v2.3h-2.3zM1284.5 278.0h1.3v1.3h-1.3zM1296.3 278.8h2.0v2.0h-2.0zM1303.6 275.6h3.2v3.2h-3.2zM1297.3 275.4h2.1v2.1h-2.1zM1308.0 270.3h2.6v2.6h-2.6zM1308.0 270.9h3.4v3.4h-3.4zM1305.4 278.5h2.6v2.6h-2.6zM1302.4 274.0h3.4v3.4h-3.4zM1293.4 272.0h1.9v1.9h-1.9zM1306.7 273.8h2.2v2.2h-2.2zM1303.4 273.6h2.2v2.2h-2.2zM1308.9 274.7h2.7v2.7h-2.7zM1298.0 273.5h2.0v2.0h-2.0zM1319.7 282.0h3.2v3.2h-3.2zM1316.2 292.6h3.1v3.1h-3.1zM1318.8 289.2h3.2v3.2h-3.2zM1314.7 289.0h2.9v2.9h-2.9zM1312.1 288.3h2.8v2.8h-2.8zM1318.1 291.3h3.1v3.1h-3.1zM1314.9 302.3h1.4v1.4h-1.4zM1317.4 304.5h1.2v1.2h-1.2zM1318.9 301.6h1.6v1.6h-1.6zM1316.7 301.4h2.0v2.0h-2.0zM1313.8 307.2h2.2v2.2h-2.2zM1310.8 321.4h2.2v2.2h-2.2zM1305.0 317.8h1.4v1.4h-1.4zM1309.1 320.2h2.1v2.1h-2.1zM1306.9 317.3h2.0v2.0h-2.0zM1301.4 320.1h3.3v3.3h-3.3zM1303.6 319.4h2.0v2.0h-2.0zM1311.1 319.0h1.8v1.8h-1.8zM1445.0 224.1h1.9v1.9h-1.9zM1434.3 213.3h2.2v2.2h-2.2zM1425.2 213.8h2.0v2.0h-2.0zM1436.4 225.9h3.3v3.3h-3.3zM1419.0 217.5h3.2v3.2h-3.2zM1422.0 221.4h2.6v2.6h-2.6zM1426.3 224.9h2.0v2.0h-2.0zM1441.9 213.8h3.2v3.2h-3.2zM1438.2 225.5h2.1v2.1h-2.1zM1431.7 206.2h3.4v3.4h-3.4zM1431.6 226.2h3.5v3.5h-3.5zM1429.4 218.9h1.8v1.8h-1.8zM1438.2 212.6h3.0v3.0h-3.0zM1437.8 209.8h2.6v2.6h-2.6zM1432.4 227.1h3.2v3.2h-3.2zM1426.7 225.5h2.9v2.9h-2.9zM1438.4 231.7h3.0v3.0h-3.0zM1429.1 220.2h3.0v3.0h-3.0zM1438.7 218.0h2.3v2.3h-2.3zM1416.5 217.7h2.0v2.0h-2.0zM1420.5 214.9h3.2v3.2h-3.2zM1436.4 227.4h2.4v2.4h-2.4zM1432.1 207.1h2.3v2.3h-2.3zM1440.7 218.4h3.4v3.4h-3.4zM1432.5 223.4h2.5v2.5h-2.5zM1430.6 221.7h3.6v3.6h-3.6zM1416.7 218.8h3.3v3.3h-3.3zM1485.3 198.3h2.2v2.2h-2.2zM1486.2 200.2h3.0v3.0h-3.0zM1492.0 197.0h2.4v2.4h-2.4zM1490.8 198.5h1.8v1.8h-1.8zM1486.4 191.9h3.1v3.1h-3.1zM1485.9 191.3h2.4v2.4h-2.4zM1480.2 197.2h2.3v2.3h-2.3zM1482.4 196.8h2.6v2.6h-2.6zM1500.4 214.0h1.9v1.9h-1.9zM1492.8 209.1h2.1v2.1h-2.1zM1498.0 212.2h2.7v2.7h-2.7zM1494.6 208.3h2.0v2.0h-2.0zM1478.3 216.0h2.3v2.3h-2.3zM1488.2 228.8h1.9v1.9h-1.9zM1499.8 224.7h2.8v2.8h-2.8zM1483.5 227.9h3.4v3.4h-3.4zM1487.6 228.2h3.5v3.5h-3.5zM1486.8 223.6h2.0v2.0h-2.0zM1479.0 225.7h3.5v3.5h-3.5zM1491.2 219.8h3.1v3.1h-3.1zM1485.0 226.9h3.4v3.4h-3.4zM1402.0 356.1h3.6v3.6h-3.6zM1407.9 342.6h3.5v3.5h-3.5zM1410.1 348.9h3.6v3.6h-3.6zM1402.8 352.0h3.6v3.6h-3.6zM1401.0 352.0h2.5v2.5h-2.5zM1400.8 352.9h2.5v2.5h-2.5zM1410.2 354.2h3.0v3.0h-3.0zM1403.8 339.7h2.6v2.6h-2.6zM1403.0 354.7h1.7v1.7h-1.7zM1405.5 341.4h2.3v2.3h-2.3zM1398.0 352.0h2.2v2.2h-2.2zM1399.1 353.6h3.5v3.5h-3.5zM1558.7 192.7h2.7v2.7h-2.7zM1551.6 186.1h3.1v3.1h-3.1zM1558.3 193.5h3.1v3.1h-3.1zM1565.2 181.5h2.0v2.0h-2.0zM1553.6 208.8h2.0v2.0h-2.0zM1573.4 204.8h1.9v1.9h-1.9zM1573.7 196.8h1.9v1.9h-1.9zM1546.9 202.4h1.8v1.8h-1.8zM1569.9 179.6h2.6v2.6h-2.6zM1560.5 199.8h2.1v2.1h-2.1zM1555.4 199.7h2.5v2.5h-2.5zM1544.6 194.8h2.8v2.8h-2.8zM1564.6 190.3h2.8v2.8h-2.8zM1551.8 207.3h2.6v2.6h-2.6zM1557.8 187.5h2.4v2.4h-2.4zM1574.9 200.0h3.3v3.3h-3.3zM1549.9 201.2h2.2v2.2h-2.2zM1558.9 190.0h3.3v3.3h-3.3zM1553.0 200.6h2.0v2.0h-2.0zM1577.7 195.0h1.9v1.9h-1.9zM1652.0 169.2h3.2v3.2h-3.2zM1672.5 170.7h2.4v2.4h-2.4zM1666.0 162.4h3.5v3.5h-3.5zM1653.1 178.4h2.3v2.3h-2.3zM1663.0 183.6h3.2v3.2h-3.2zM1652.9 166.7h2.9v2.9h-2.9zM1673.0 170.1h2.9v2.9h-2.9zM1654.9 174.7h3.1v3.1h-3.1zM1732.6 309.0h1.8v1.8h-1.8zM1724.1 294.5h3.3v3.3h-3.3zM1723.5 320.1h1.7v1.7h-1.7zM1731.4 299.1h2.9v2.9h-2.9zM1728.4 324.0h3.4v3.4h-3.4zM1725.2 310.6h2.2v2.2h-2.2zM1726.2 296.0h1.9v1.9h-1.9zM1708.4 305.9h1.9v1.9h-1.9zM1729.3 328.2h2.5v2.5h-2.5zM1712.8 289.8h1.9v1.9h-1.9zM1715.7 298.5h3.2v3.2h-3.2zM1729.2 302.9h2.5v2.5h-2.5zM1709.9 326.1h1.7v1.7h-1.7zM1707.3 320.8h2.8v2.8h-2.8zM1731.4 313.9h2.2v2.2h-2.2zM1732.1 304.1h2.7v2.7h-2.7zM1728.7 324.0h3.4v3.4h-3.4zM1717.1 321.9h3.2v3.2h-3.2zM1736.7 314.3h3.3v3.3h-3.3zM1736.4 322.5h2.7v2.7h-2.7zM1735.9 323.8h2.6v2.6h-2.6zM1709.6 295.6h1.7v1.7h-1.7zM1728.1 298.5h3.4v3.4h-3.4zM1701.6 315.6h2.2v2.2h-2.2zM1726.8 299.3h2.3v2.3h-2.3zM1699.3 307.6h2.6v2.6h-2.6zM1712.7 301.9h3.3v3.3h-3.3zM1703.8 302.6h1.9v1.9h-1.9zM1709.9 305.0h2.5v2.5h-2.5zM1722.9 298.6h2.8v2.8h-2.8zM1724.7 305.7h3.2v3.2h-3.2zM1708.2 313.2h3.2v3.2h-3.2zM1709.3 319.7h2.4v2.4h-2.4zM1709.2 323.5h2.5v2.5h-2.5zM1726.9 292.3h3.0v3.0h-3.0zM1732.0 292.7h2.8v2.8h-2.8zM1720.0 315.3h1.7v1.7h-1.7zM1729.8 315.0h2.0v2.0h-2.0zM1605.4 321.2h1.3v1.3h-1.3zM1604.2 321.0h2.6v2.6h-2.6zM1601.6 324.3h1.7v1.7h-1.7zM1848.4 281.9h1.2v1.2h-1.2zM1846.5 321.3h1.5v1.5h-1.5zM1846.2 319.5h2.0v2.0h-2.0zM1848.4 320.7h1.3v1.3h-1.3zM1104.2 534.0h1.3v1.3h-1.3zM1109.2 540.8h1.2v1.2h-1.2zM1725.6 480.8h2.3v2.3h-2.3zM1708.3 473.0h1.7v1.7h-1.7zM1714.0 464.9h3.3v3.3h-3.3zM1729.2 463.7h3.5v3.5h-3.5zM1706.1 470.8h3.3v3.3h-3.3zM1706.1 470.5h2.8v2.8h-2.8zM1729.6 481.4h1.7v1.7h-1.7zM1728.3 456.6h2.0v2.0h-2.0zM1714.4 469.4h3.3v3.3h-3.3zM1715.2 484.8h2.2v2.2h-2.2zM1706.1 473.1h2.6v2.6h-2.6zM1710.7 473.8h2.7v2.7h-2.7zM1724.8 465.2h2.8v2.8h-2.8zM1730.7 484.1h1.7v1.7h-1.7zM1713.1 461.5h2.0v2.0h-2.0zM1732.0 473.9h3.0v3.0h-3.0zM1711.9 476.1h1.7v1.7h-1.7zM1710.5 470.2h3.0v3.0h-3.0zM1737.4 465.9h2.4v2.4h-2.4zM1728.1 466.6h3.6v3.6h-3.6zM1738.7 477.2h2.7v2.7h-2.7zM1735.5 478.8h3.4v3.4h-3.4zM1713.8 485.7h2.0v2.0h-2.0zM1721.8 478.2h3.5v3.5h-3.5zM1708.2 463.9h3.6v3.6h-3.6zM1698.3 467.4h1.7v1.7h-1.7zM1693.6 470.2h2.1v2.1h-2.1zM1698.5 475.3h2.3v2.3h-2.3zM1701.7 460.7h2.5v2.5h-2.5zM1698.3 476.0h2.7v2.7h-2.7zM1708.8 469.4h2.0v2.0h-2.0zM1712.0 468.2h3.0v3.0h-3.0zM1703.9 473.1h2.0v2.0h-2.0zM1694.3 470.6h3.1v3.1h-3.1zM1698.8 470.9h3.2v3.2h-3.2zM1709.4 468.7h1.8v1.8h-1.8zM1693.5 468.1h2.2v2.2h-2.2zM1692.7 468.6h3.1v3.1h-3.1zM1742.0 468.9h3.1v3.1h-3.1zM1748.0 466.9h2.5v2.5h-2.5zM1741.1 470.5h3.0v3.0h-3.0zM1747.1 472.0h2.0v2.0h-2.0zM1749.7 470.5h3.4v3.4h-3.4zM1747.4 470.4h2.8v2.8h-2.8zM1746.1 460.8h3.1v3.1h-3.1zM1655.5 525.5h3.1v3.1h-3.1zM1650.7 510.9h3.6v3.6h-3.6zM1658.8 523.9h3.1v3.1h-3.1zM1683.6 512.5h2.4v2.4h-2.4zM1658.2 526.4h2.9v2.9h-2.9zM1669.3 526.8h2.8v2.8h-2.8zM1663.1 521.1h3.4v3.4h-3.4zM1661.4 524.6h2.4v2.4h-2.4zM1659.2 503.1h2.9v2.9h-2.9zM1681.5 507.5h2.3v2.3h-2.3zM1663.6 508.9h3.5v3.5h-3.5zM1675.1 508.6h2.4v2.4h-2.4zM1675.6 525.3h1.9v1.9h-1.9zM1660.0 502.4h2.6v2.6h-2.6zM1661.5 512.8h2.0v2.0h-2.0zM1673.1 519.9h2.3v2.3h-2.3zM1664.1 504.1h3.3v3.3h-3.3zM1674.5 526.8h2.5v2.5h-2.5zM1652.8 515.6h3.2v3.2h-3.2zM1671.8 498.1h2.3v2.3h-2.3zM1652.3 509.1h2.9v2.9h-2.9zM1668.8 530.3h2.4v2.4h-2.4zM1677.7 522.3h3.3v3.3h-3.3zM1659.6 513.7h3.6v3.6h-3.6zM1655.8 503.1h3.5v3.5h-3.5zM1665.3 530.3h2.2v2.2h-2.2zM1666.5 530.6h2.5v2.5h-2.5zM1660.0 498.2h3.6v3.6h-3.6zM1641.8 515.9h2.8v2.8h-2.8zM1652.9 509.5h2.5v2.5h-2.5zM1655.3 517.4h2.5v2.5h-2.5zM1641.4 514.4h2.2v2.2h-2.2zM1651.7 513.8h2.3v2.3h-2.3zM1657.8 515.1h3.3v3.3h-3.3zM1678.3 510.8h2.4v2.4h-2.4zM1689.8 506.0h1.8v1.8h-1.8zM1692.5 512.6h2.5v2.5h-2.5zM1682.1 503.9h2.6v2.6h-2.6zM1682.3 502.9h1.9v1.9h-1.9zM1684.7 511.3h3.0v3.0h-3.0zM1680.2 502.9h3.6v3.6h-3.6zM1683.7 499.4h1.8v1.8h-1.8zM1689.2 498.9h2.8v2.8h-2.8zM1620.5 527.3h2.6v2.6h-2.6zM1624.7 528.7h3.0v3.0h-3.0zM1617.9 535.0h1.8v1.8h-1.8zM1626.8 528.6h3.2v3.2h-3.2zM1627.6 526.6h2.9v2.9h-2.9zM1627.1 525.2h3.5v3.5h-3.5zM1613.1 530.1h3.5v3.5h-3.5zM1715.0 526.5h2.3v2.3h-2.3zM1717.4 513.8h1.7v1.7h-1.7zM1717.2 517.8h2.2v2.2h-2.2zM1712.1 518.2h1.8v1.8h-1.8zM1739.3 515.9h1.5v1.5h-1.5zM1742.3 520.1h1.9v1.9h-1.9zM1741.9 515.6h2.6v2.6h-2.6zM1741.7 510.9h1.3v1.3h-1.3zM1740.4 511.4h2.1v2.1h-2.1zM1748.7 549.3h1.3v1.3h-1.3zM1744.7 544.1h1.8v1.8h-1.8zM1752.5 544.3h2.3v2.3h-2.3zM1575.1 532.3h1.3v1.3h-1.3zM1569.0 535.7h2.2v2.2h-2.2zM1570.9 542.0h2.0v2.0h-2.0zM1573.2 541.8h2.5v2.5h-2.5zM1542.9 548.4h2.5v2.5h-2.5zM1545.6 540.6h1.3v1.3h-1.3zM1541.9 543.0h2.2v2.2h-2.2zM1539.7 545.2h2.1v2.1h-2.1zM1545.0 545.3h1.4v1.4h-1.4zM1546.1 544.7h1.9v1.9h-1.9zM1534.9 543.2h1.3v1.3h-1.3zM918.0 743.6h1.8v1.8h-1.8zM909.0 745.9h3.4v3.4h-3.4zM910.4 746.9h3.2v3.2h-3.2zM917.0 750.1h3.3v3.3h-3.3zM920.1 750.0h2.7v2.7h-2.7zM914.3 750.0h1.8v1.8h-1.8zM921.8 747.2h2.6v2.6h-2.6zM913.4 740.1h3.1v3.1h-3.1zM918.0 739.5h3.5v3.5h-3.5zM946.1 742.1h2.5v2.5h-2.5zM940.8 738.2h3.2v3.2h-3.2zM944.3 749.8h2.5v2.5h-2.5zM939.2 752.5h2.2v2.2h-2.2zM941.3 749.5h1.9v1.9h-1.9zM942.8 753.2h2.3v2.3h-2.3zM938.3 752.4h3.1v3.1h-3.1zM1049.6 742.4h3.4v3.4h-3.4zM1031.9 736.0h3.4v3.4h-3.4zM1040.5 735.4h1.9v1.9h-1.9zM1045.2 750.7h2.7v2.7h-2.7zM1029.3 725.2h3.0v3.0h-3.0zM1040.5 737.5h2.1v2.1h-2.1zM1038.7 735.3h3.3v3.3h-3.3zM1041.4 735.3h2.5v2.5h-2.5zM1029.1 749.4h3.6v3.6h-3.6zM1035.5 724.7h3.5v3.5h-3.5zM1036.6 722.6h2.8v2.8h-2.8zM1031.7 748.4h3.3v3.3h-3.3zM1023.3 740.7h2.3v2.3h-2.3zM1040.7 758.1h3.3v3.3h-3.3zM1035.6 756.7h2.2v2.2h-2.2zM1034.2 746.6h3.2v3.2h-3.2zM1040.7 760.1h2.8v2.8h-2.8zM1027.8 753.4h2.7v2.7h-2.7zM1028.8 759.1h2.7v2.7h-2.7zM1045.5 755.1h2.9v2.9h-2.9zM1037.1 746.5h2.3v2.3h-2.3zM1045.9 748.1h3.1v3.1h-3.1zM1041.3 746.0h2.1v2.1h-2.1zM1039.3 760.7h1.7v1.7h-1.7zM1032.2 760.4h3.1v3.1h-3.1zM1027.0 751.9h2.5v2.5h-2.5zM915.2 660.0h2.1v2.1h-2.1zM928.4 660.8h3.0v3.0h-3.0zM927.8 649.1h3.4v3.4h-3.4zM922.9 655.2h2.6v2.6h-2.6zM914.9 661.2h1.7v1.7h-1.7zM927.4 650.2h3.0v3.0h-3.0zM930.2 665.1h2.0v2.0h-2.0zM914.4 658.4h2.1v2.1h-2.1zM922.8 665.3h1.8v1.8h-1.8zM922.6 655.5h2.4v2.4h-2.4zM1442.8 595.0h2.0v2.0h-2.0zM1464.6 600.6h2.3v2.3h-2.3zM1470.6 618.4h2.4v2.4h-2.4zM1468.3 590.9h1.9v1.9h-1.9zM1443.0 615.5h3.1v3.1h-3.1zM1452.6 602.8h3.4v3.4h-3.4zM1464.1 604.1h1.7v1.7h-1.7zM1443.9 592.7h3.3v3.3h-3.3zM1451.4 602.0h2.1v2.1h-2.1zM1462.2 602.9h1.9v1.9h-1.9zM1449.7 616.7h3.0v3.0h-3.0zM1470.0 618.9h2.7v2.7h-2.7zM1454.5 625.0h2.5v2.5h-2.5zM1451.8 587.1h3.3v3.3h-3.3zM1466.2 600.3h2.7v2.7h-2.7zM1451.4 622.5h3.3v3.3h-3.3zM1468.7 611.6h3.6v3.6h-3.6zM1454.0 590.8h2.2v2.2h-2.2zM1459.4 594.0h2.7v2.7h-2.7zM1465.7 619.6h3.6v3.6h-3.6zM1461.8 616.2h2.3v2.3h-2.3zM1440.1 609.5h2.8v2.8h-2.8zM1454.2 619.8h2.6v2.6h-2.6zM1451.9 607.2h3.5v3.5h-3.5zM1459.6 601.8h2.7v2.7h-2.7zM1445.4 598.2h3.2v3.2h-3.2zM1454.4 585.8h1.7v1.7h-1.7zM1439.5 583.9h2.5v2.5h-2.5zM1448.2 589.7h3.5v3.5h-3.5zM1437.6 588.1h3.3v3.3h-3.3zM1440.1 586.0h3.1v3.1h-3.1zM1474.3 628.4h2.0v2.0h-2.0zM1474.3 616.1h3.2v3.2h-3.2zM1474.3 622.3h2.7v2.7h-2.7zM1469.7 626.6h2.1v2.1h-2.1zM1473.9 620.5h3.0v3.0h-3.0zM1460.3 622.3h2.0v2.0h-2.0zM1475.3 619.2h3.3v3.3h-3.3zM1469.0 625.3h3.2v3.2h-3.2zM1470.4 628.7h3.0v3.0h-3.0zM1470.7 619.5h3.5v3.5h-3.5zM1477.1 628.9h2.7v2.7h-2.7zM1481.7 621.8h1.8v1.8h-1.8zM1491.5 621.9h2.6v2.6h-2.6zM1514.0 636.9h1.4v1.4h-1.4zM1513.3 634.2h1.3v1.3h-1.3zM1432.7 541.9h2.6v2.6h-2.6zM1430.0 544.7h2.7v2.7h-2.7zM1429.1 547.0h3.0v3.0h-3.0zM1436.6 554.3h2.6v2.6h-2.6zM1431.4 544.9h3.3v3.3h-3.3zM1426.9 545.8h3.0v3.0h-3.0zM1441.8 549.6h2.9v2.9h-2.9zM1429.1 540.5h3.2v3.2h-3.2zM1448.3 535.3h3.1v3.1h-3.1zM1447.0 552.6h2.0v2.0h-2.0zM1455.5 545.6h1.9v1.9h-1.9zM1439.6 545.6h3.6v3.6h-3.6zM1456.6 544.9h3.2v3.2h-3.2zM1452.9 539.3h3.3v3.3h-3.3zM1452.3 551.4h2.3v2.3h-2.3zM1448.7 536.6h3.2v3.2h-3.2zM1449.9 540.4h2.8v2.8h-2.8zM1446.8 547.5h2.0v2.0h-2.0zM1465.2 544.2h1.9v1.9h-1.9zM1463.4 550.1h2.1v2.1h-2.1zM1461.9 536.4h3.1v3.1h-3.1zM1462.8 547.4h2.8v2.8h-2.8zM1471.7 539.4h2.9v2.9h-2.9zM1461.6 542.3h3.4v3.4h-3.4zM1472.5 545.6h2.4v2.4h-2.4zM1476.9 551.3h2.8v2.8h-2.8zM1483.0 546.0h2.0v2.0h-2.0zM1469.0 546.9h3.0v3.0h-3.0zM1470.5 538.7h2.8v2.8h-2.8zM1475.6 545.7h2.4v2.4h-2.4zM1478.0 547.5h2.2v2.2h-2.2zM1484.5 547.2h1.7v1.7h-1.7zM1495.1 540.3h2.2v2.2h-2.2zM1487.1 536.3h2.7v2.7h-2.7zM1495.2 542.6h2.3v2.3h-2.3zM1492.1 549.4h1.7v1.7h-1.7zM1499.5 539.1h1.9v1.9h-1.9zM1508.8 546.6h1.9v1.9h-1.9zM1504.8 547.1h1.6v1.6h-1.6zM1505.2 552.5h1.8v1.8h-1.8zM1641.4 611.7h2.7v2.7h-2.7zM1652.0 613.2h3.6v3.6h-3.6zM1641.3 610.0h2.9v2.9h-2.9zM1638.6 615.2h2.6v2.6h-2.6zM1647.1 618.2h3.0v3.0h-3.0zM1649.5 608.4h2.6v2.6h-2.6zM1636.3 608.4h3.5v3.5h-3.5zM1646.4 609.6h2.3v2.3h-2.3zM1614.2 692.0h1.6v1.6h-1.6zM1620.8 683.4h1.3v1.3h-1.3zM1616.2 685.6h1.9v1.9h-1.9zM1611.8 688.0h2.2v2.2h-2.2zM1620.4 726.1h2.1v2.1h-2.1zM1624.7 735.0h1.9v1.9h-1.9zM1624.0 732.3h3.3v3.3h-3.3zM1629.1 739.3h3.0v3.0h-3.0zM1627.5 728.3h2.7v2.7h-2.7zM1621.2 736.7h1.7v1.7h-1.7zM1615.7 732.7h2.0v2.0h-2.0zM1616.6 732.5h2.2v2.2h-2.2zM1620.5 729.4h3.0v3.0h-3.0zM1623.1 731.9h3.0v3.0h-3.0zM1626.9 729.0h2.4v2.4h-2.4zM1631.8 733.0h2.5v2.5h-2.5zM1621.0 726.2h3.3v3.3h-3.3zM887.1 821.0h2.1v2.1h-2.1zM898.6 866.6h2.5v2.5h-2.5zM900.0 867.5h1.3v1.3h-1.3zM901.2 907.4h1.8v1.8h-1.8zM896.1 905.6h2.0v2.0h-2.0zM898.1 909.2h1.9v1.9h-1.9zM899.1 901.2h2.2v2.2h-2.2zM903.0 906.5h2.0v2.0h-2.0zM902.1 911.5h1.3v1.3h-1.3zM1051.4 783.3h3.1v3.1h-3.1zM1048.4 798.4h2.4v2.4h-2.4zM1043.4 784.3h2.8v2.8h-2.8zM1053.5 779.2h2.9v2.9h-2.9zM1046.1 794.3h2.8v2.8h-2.8zM1044.8 793.8h2.6v2.6h-2.6zM1056.8 787.4h3.2v3.2h-3.2zM1048.7 788.3h3.1v3.1h-3.1zM1047.6 787.3h2.3v2.3h-2.3zM1057.8 830.0h3.5v3.5h-3.5zM1042.0 849.1h2.4v2.4h-2.4zM1045.3 834.2h3.1v3.1h-3.1zM1037.5 839.2h3.0v3.0h-3.0zM1046.8 831.0h3.0v3.0h-3.0zM1065.5 837.0h2.4v2.4h-2.4zM1048.1 844.6h2.9v2.9h-2.9zM1045.9 845.8h3.4v3.4h-3.4zM1062.6 835.1h3.5v3.5h-3.5zM1086.6 846.2h2.3v2.3h-2.3zM1086.7 843.8h2.1v2.1h-2.1zM1089.1 843.0h1.9v1.9h-1.9zM1095.0 841.0h1.8v1.8h-1.8zM1086.6 840.7h2.0v2.0h-2.0zM1090.3 850.0h2.5v2.5h-2.5zM1095.7 841.7h1.8v1.8h-1.8zM1087.9 848.2h1.6v1.6h-1.6zM1131.8 832.4h1.8v1.8h-1.8zM1128.8 839.9h1.8v1.8h-1.8zM1135.2 833.1h2.3v2.3h-2.3zM1130.8 834.8h1.3v1.3h-1.3zM1169.4 833.4h1.4v1.4h-1.4zM1170.3 836.7h1.4v1.4h-1.4zM1040.8 769.9h1.7v1.7h-1.7zM1037.7 761.9h2.6v2.6h-2.6zM1043.6 760.7h1.3v1.3h-1.3zM1148.1 947.9h2.3v2.3h-2.3zM1140.1 950.7h3.2v3.2h-3.2zM1149.3 932.1h2.3v2.3h-2.3zM1129.5 945.2h3.2v3.2h-3.2zM1127.9 935.1h2.6v2.6h-2.6zM1131.5 927.2h2.9v2.9h-2.9zM1131.6 934.0h2.2v2.2h-2.2zM1137.8 929.5h2.5v2.5h-2.5zM1132.9 943.5h1.8v1.8h-1.8zM1128.6 939.6h3.2v3.2h-3.2zM1133.2 944.3h2.4v2.4h-2.4zM1176.9 928.2h2.2v2.2h-2.2zM1191.6 939.8h2.5v2.5h-2.5zM1194.2 931.2h2.4v2.4h-2.4zM1196.4 935.6h2.2v2.2h-2.2zM1183.8 933.7h2.7v2.7h-2.7zM1193.1 926.6h3.2v3.2h-3.2zM1203.4 926.0h3.0v3.0h-3.0zM1193.1 935.7h1.9v1.9h-1.9zM1187.3 923.9h3.1v3.1h-3.1zM1184.2 931.5h3.3v3.3h-3.3zM1201.5 924.1h3.3v3.3h-3.3zM1198.0 918.0h2.3v2.3h-2.3zM1187.5 937.5h3.0v3.0h-3.0zM1238.7 842.2h2.5v2.5h-2.5zM1231.8 828.7h2.0v2.0h-2.0zM1232.5 834.5h2.4v2.4h-2.4zM1241.6 838.4h2.7v2.7h-2.7zM1240.6 833.2h2.3v2.3h-2.3zM1239.9 838.2h3.6v3.6h-3.6zM1241.1 837.7h2.4v2.4h-2.4zM1235.2 814.1h1.9v1.9h-1.9zM1238.9 817.7h1.7v1.7h-1.7zM1233.1 823.5h1.7v1.7h-1.7zM1234.2 816.5h2.4v2.4h-2.4zM1271.2 831.5h1.9v1.9h-1.9zM1267.7 841.3h2.4v2.4h-2.4zM1331.7 843.2h1.4v1.4h-1.4zM1334.5 836.2h1.9v1.9h-1.9zM1331.7 838.7h1.9v1.9h-1.9zM1335.5 835.9h1.9v1.9h-1.9zM1332.2 842.2h2.5v2.5h-2.5zM1336.9 840.9h2.5v2.5h-2.5zM1337.9 835.9h1.6v1.6h-1.6zM1330.7 844.0h1.5v1.5h-1.5zM1331.7 846.0h2.2v2.2h-2.2zM1370.5 839.2h1.8v1.8h-1.8zM1374.0 830.4h2.2v2.2h-2.2zM1370.5 837.2h2.5v2.5h-2.5zM1375.4 830.4h1.9v1.9h-1.9zM1418.1 829.5h1.9v1.9h-1.9zM1418.6 824.9h1.3v1.3h-1.3zM1423.7 825.3h2.3v2.3h-2.3zM1422.5 833.4h2.5v2.5h-2.5zM1420.1 835.7h1.5v1.5h-1.5zM1417.6 823.5h2.6v2.6h-2.6zM1419.4 830.5h1.4v1.4h-1.4zM1460.8 827.8h2.4v2.4h-2.4zM1455.0 823.2h2.5v2.5h-2.5zM1458.5 824.3h1.8v1.8h-1.8zM1507.4 821.7h1.3v1.3h-1.3zM1502.8 817.1h1.7v1.7h-1.7zM1506.1 817.7h2.3v2.3h-2.3zM1510.5 818.7h2.5v2.5h-2.5zM1506.1 818.6h2.3v2.3h-2.3zM1510.8 850.8h2.8v2.8h-2.8zM1508.1 854.0h2.5v2.5h-2.5zM1503.0 863.8h2.1v2.1h-2.1zM1501.1 848.5h2.0v2.0h-2.0zM1507.0 855.1h2.5v2.5h-2.5zM1507.4 860.7h3.4v3.4h-3.4zM1509.5 858.9h2.5v2.5h-2.5zM1500.4 857.5h2.1v2.1h-2.1zM1504.3 861.2h2.1v2.1h-2.1zM1429.6 871.9h2.0v2.0h-2.0zM1426.5 875.1h1.8v1.8h-1.8zM1424.5 870.9h1.3v1.3h-1.3zM1427.5 874.0h2.3v2.3h-2.3zM1424.8 869.3h2.1v2.1h-2.1zM1427.3 863.6h2.4v2.4h-2.4zM1428.4 874.8h2.3v2.3h-2.3zM1359.8 902.6h2.2v2.2h-2.2zM1363.4 912.5h1.9v1.9h-1.9zM1360.4 907.4h3.2v3.2h-3.2zM1365.8 907.2h2.6v2.6h-2.6zM1362.9 910.8h3.2v3.2h-3.2zM1360.4 909.6h2.4v2.4h-2.4zM1374.2 907.5h3.4v3.4h-3.4zM1368.7 907.3h3.2v3.2h-3.2zM1373.3 912.7h2.9v2.9h-2.9zM1372.6 920.6h3.5v3.5h-3.5zM1362.8 911.0h3.1v3.1h-3.1zM1366.5 920.3h2.5v2.5h-2.5zM1348.7 915.2h3.4v3.4h-3.4zM1334.9 934.4h2.1v2.1h-2.1zM1341.2 924.6h3.6v3.6h-3.6zM1332.2 914.3h3.2v3.2h-3.2zM1337.4 912.7h2.3v2.3h-2.3zM1324.8 922.1h2.4v2.4h-2.4zM1331.7 923.1h3.2v3.2h-3.2zM1335.5 910.9h3.4v3.4h-3.4zM1334.7 915.2h3.1v3.1h-3.1zM1339.1 915.4h2.9v2.9h-2.9zM1337.3 932.0h3.3v3.3h-3.3zM1335.9 916.7h2.4v2.4h-2.4zM1332.2 916.0h3.5v3.5h-3.5zM1336.9 914.7h3.1v3.1h-3.1zM1335.0 918.3h3.6v3.6h-3.6zM1347.8 916.7h2.0v2.0h-2.0zM1328.8 918.9h2.7v2.7h-2.7zM1339.1 918.3h3.3v3.3h-3.3zM1260.2 935.3h2.5v2.5h-2.5zM1243.2 930.3h3.5v3.5h-3.5zM1252.0 928.4h2.0v2.0h-2.0zM1252.8 939.3h2.6v2.6h-2.6zM1258.2 912.6h1.9v1.9h-1.9zM1258.6 933.1h3.3v3.3h-3.3zM1249.4 921.6h2.7v2.7h-2.7zM1264.0 926.9h2.9v2.9h-2.9zM1263.4 919.9h2.8v2.8h-2.8zM1245.9 932.3h3.0v3.0h-3.0zM1248.7 938.3h2.3v2.3h-2.3zM1264.2 926.2h2.6v2.6h-2.6zM1266.8 930.6h2.6v2.6h-2.6zM1252.4 920.2h1.8v1.8h-1.8zM1246.1 924.1h2.7v2.7h-2.7zM1261.9 917.4h2.2v2.2h-2.2zM1240.7 932.1h3.6v3.6h-3.6zM1306.2 946.5h2.0v2.0h-2.0zM1296.5 949.8h1.8v1.8h-1.8zM1293.9 941.8h3.4v3.4h-3.4zM1293.8 939.9h3.3v3.3h-3.3zM1293.8 939.6h2.9v2.9h-2.9zM1304.0 938.3h2.4v2.4h-2.4zM1298.5 949.7h3.6v3.6h-3.6zM1313.6 943.6h3.0v3.0h-3.0zM1298.1 950.7h3.4v3.4h-3.4zM1300.3 936.8h1.8v1.8h-1.8zM1290.4 943.0h2.8v2.8h-2.8zM1532.9 775.1h1.4v1.4h-1.4zM1529.2 765.7h2.0v2.0h-2.0zM1535.9 773.1h2.0v2.0h-2.0zM1530.5 772.7h2.6v2.6h-2.6zM1622.1 780.7h3.4v3.4h-3.4zM1619.2 793.1h3.0v3.0h-3.0zM1631.6 780.5h2.7v2.7h-2.7zM1623.1 777.6h1.8v1.8h-1.8zM1634.9 784.3h2.0v2.0h-2.0zM1621.8 791.7h2.3v2.3h-2.3zM1636.4 789.3h3.1v3.1h-3.1zM1632.2 781.4h2.0v2.0h-2.0zM1626.9 785.1h2.7v2.7h-2.7zM1629.6 782.0h2.8v2.8h-2.8zM1631.7 793.7h3.3v3.3h-3.3zM1639.8 788.3h1.8v1.8h-1.8zM1628.5 778.5h2.0v2.0h-2.0zM1626.6 784.4h2.4v2.4h-2.4zM1613.6 768.3h2.9v2.9h-2.9zM1627.4 775.1h2.6v2.6h-2.6zM1619.3 774.6h3.2v3.2h-3.2zM1626.9 773.9h3.2v3.2h-3.2zM1617.0 778.4h3.5v3.5h-3.5zM1619.1 778.4h3.5v3.5h-3.5zM1623.7 774.3h3.3v3.3h-3.3zM1636.9 832.0h2.3v2.3h-2.3zM1646.7 837.4h2.0v2.0h-2.0zM1638.5 848.6h2.7v2.7h-2.7zM1626.2 842.5h3.2v3.2h-3.2zM1632.2 851.0h2.8v2.8h-2.8zM1631.1 840.5h2.3v2.3h-2.3zM1637.9 849.8h3.2v3.2h-3.2zM1644.4 842.2h2.2v2.2h-2.2zM1631.4 850.0h3.1v3.1h-3.1zM1646.4 869.5h3.2v3.2h-3.2zM1647.5 873.7h2.3v2.3h-2.3zM1640.1 862.3h3.6v3.6h-3.6zM1647.5 866.4h2.5v2.5h-2.5zM1639.6 873.0h3.2v3.2h-3.2zM1636.3 870.1h3.4v3.4h-3.4zM1630.3 892.4h3.5v3.5h-3.5zM1626.8 890.5h2.6v2.6h-2.6zM1628.4 889.8h1.8v1.8h-1.8zM1626.5 900.9h3.3v3.3h-3.3zM1631.6 899.1h3.5v3.5h-3.5zM1633.1 893.7h2.8v2.8h-2.8zM1620.7 893.8h2.8v2.8h-2.8zM1678.3 896.9h2.9v2.9h-2.9zM1667.0 893.6h1.9v1.9h-1.9zM1666.5 898.2h3.2v3.2h-3.2zM1678.4 893.0h2.3v2.3h-2.3zM1675.4 899.0h2.8v2.8h-2.8zM1670.9 901.1h1.8v1.8h-1.8zM1666.3 900.1h2.9v2.9h-2.9zM1674.5 902.7h3.4v3.4h-3.4zM1539.6 788.0h2.2v2.2h-2.2zM1538.4 783.3h2.1v2.1h-2.1zM1546.4 778.4h3.6v3.6h-3.6zM1546.7 810.2h2.7v2.7h-2.7zM1542.2 813.6h3.0v3.0h-3.0zM1545.3 810.4h1.7v1.7h-1.7zM1550.0 816.7h2.2v2.2h-2.2zM1525.8 700.6h1.7v1.7h-1.7zM1517.8 698.1h2.4v2.4h-2.4zM1522.5 697.7h2.3v2.3h-2.3zM1520.6 699.8h1.8v1.8h-1.8zM1530.5 727.3h2.6v2.6h-2.6zM1530.5 731.5h1.5v1.5h-1.5zM1521.7 732.2h1.7v1.7h-1.7zM1522.4 726.4h1.9v1.9h-1.9zM1524.7 729.8h2.4v2.4h-2.4zM1527.8 724.3h2.0v2.0h-2.0zM1526.9 726.2h1.5v1.5h-1.5zM1529.3 759.6h1.4v1.4h-1.4zM1534.5 756.0h1.2v1.2h-1.2zM1206.7 594.8h1.3v1.3h-1.3zM1206.7 586.2h1.2v1.2h-1.2zM1211.9 592.7h1.9v1.9h-1.9zM1204.5 588.9h1.6v1.6h-1.6zM1214.4 589.9h1.5v1.5h-1.5zM1204.6 591.9h1.5v1.5h-1.5zM1213.5 585.7h2.2v2.2h-2.2zM1213.7 590.5h2.4v2.4h-2.4zM1233.4 604.6h1.8v1.8h-1.8zM1232.6 597.1h1.7v1.7h-1.7zM1249.2 622.1h1.6v1.6h-1.6zM1248.0 617.5h2.0v2.0h-2.0zM1246.9 617.8h2.4v2.4h-2.4zM1244.4 619.1h1.3v1.3h-1.3zM1241.1 615.4h1.5v1.5h-1.5zM1247.1 610.9h1.8v1.8h-1.8zM1246.7 613.1h2.6v2.6h-2.6zM1262.0 628.4h1.3v1.3h-1.3zM1262.6 628.2h2.0v2.0h-2.0zM1262.1 626.7h2.6v2.6h-2.6zM1271.3 632.5h2.6v2.6h-2.6zM1260.9 631.1h2.0v2.0h-2.0zM1259.1 630.5h1.4v1.4h-1.4zM1266.7 628.7h1.5v1.5h-1.5zM1222.5 692.1h2.4v2.4h-2.4zM1225.3 701.5h2.6v2.6h-2.6zM1222.7 693.6h1.7v1.7h-1.7zM1227.7 698.1h3.5v3.5h-3.5zM1249.0 695.3h2.0v2.0h-2.0zM1248.8 688.0h1.6v1.6h-1.6zM1255.2 684.0h2.5v2.5h-2.5zM1249.7 690.9h1.3v1.3h-1.3zM1260.0 691.9h1.8v1.8h-1.8zM1193.4 586.7h2.5v2.5h-2.5zM1174.7 706.6h3.6v3.6h-3.6zM1177.3 703.0h3.2v3.2h-3.2zM1194.2 696.6h1.6v1.6h-1.6zM1200.4 694.1h1.4v1.4h-1.4zM1198.7 698.9h1.6v1.6h-1.6z"/>
<path fill="#34481f" d="M1278.8 647.1h1.7v1.7h-1.7zM1281.9 650.4h1.6v1.6h-1.6zM1283.5 646.7h2.5v2.5h-2.5zM1290.5 657.4h2.4v2.4h-2.4zM1287.9 656.4h1.8v1.8h-1.8zM1287.7 655.7h1.5v1.5h-1.5zM1291.6 650.1h2.4v2.4h-2.4zM1212.6 624.8h2.5v2.5h-2.5zM1209.9 633.4h1.5v1.5h-1.5zM1229.8 632.9h2.0v2.0h-2.0zM1249.8 642.2h1.4v1.4h-1.4zM1249.9 644.2h1.4v1.4h-1.4zM1251.4 643.0h2.1v2.1h-2.1zM1248.5 642.8h2.1v2.1h-2.1zM1271.8 652.2h2.4v2.4h-2.4zM1270.3 645.8h2.0v2.0h-2.0zM1207.1 676.8h1.9v1.9h-1.9zM1211.3 673.4h2.0v2.0h-2.0zM1224.5 673.7h1.4v1.4h-1.4zM1224.4 672.2h1.7v1.7h-1.7zM1246.0 674.7h1.7v1.7h-1.7zM1243.5 677.3h2.1v2.1h-2.1zM1242.5 673.7h2.2v2.2h-2.2zM1263.7 673.5h1.9v1.9h-1.9zM1281.8 678.8h1.3v1.3h-1.3zM1286.9 679.6h1.7v1.7h-1.7zM1286.3 675.0h2.0v2.0h-2.0zM1283.6 676.6h2.6v2.6h-2.6zM1284.4 679.6h2.5v2.5h-2.5zM1204.8 696.9h1.7v1.7h-1.7zM1201.0 699.3h1.6v1.6h-1.6zM1204.9 695.3h1.5v1.5h-1.5zM1183.0 573.9h1.9v1.9h-1.9zM1205.3 606.1h1.5v1.5h-1.5zM1200.1 606.0h1.7v1.7h-1.7zM1205.0 607.5h1.9v1.9h-1.9zM1203.4 609.6h1.7v1.7h-1.7zM1134.2 564.0h1.4v1.4h-1.4zM1135.6 562.5h2.4v2.4h-2.4zM1140.9 564.2h1.8v1.8h-1.8zM1161.1 561.7h2.0v2.0h-2.0zM1157.7 567.0h2.4v2.4h-2.4zM1159.0 565.2h2.5v2.5h-2.5zM1187.0 687.6h1.2v1.2h-1.2zM1181.8 680.6h2.1v2.1h-2.1zM1188.9 684.3h1.6v1.6h-1.6zM1173.8 693.4h2.2v2.2h-2.2zM1171.3 687.1h2.5v2.5h-2.5zM1164.3 690.8h2.0v2.0h-2.0zM907.3 387.1h2.4v2.4h-2.4zM910.4 392.0h1.2v1.2h-1.2zM904.4 388.4h2.0v2.0h-2.0zM905.9 391.4h1.9v1.9h-1.9zM906.4 405.9h2.4v2.4h-2.4zM909.1 407.9h2.4v2.4h-2.4zM910.6 423.5h1.2v1.2h-1.2zM907.3 428.2h1.6v1.6h-1.6zM910.9 441.8h1.2v1.2h-1.2zM911.6 442.7h1.6v1.6h-1.6zM906.8 445.9h1.7v1.7h-1.7zM912.6 447.4h1.7v1.7h-1.7zM909.2 440.8h1.7v1.7h-1.7zM909.9 441.6h2.2v2.2h-2.2zM911.2 446.7h1.8v1.8h-1.8zM912.2 461.6h2.0v2.0h-2.0zM911.6 460.4h1.9v1.9h-1.9zM908.1 464.2h2.3v2.3h-2.3zM911.9 465.7h2.4v2.4h-2.4zM911.2 484.2h1.3v1.3h-1.3zM914.0 480.9h1.4v1.4h-1.4zM909.6 484.8h2.4v2.4h-2.4zM909.1 479.6h1.4v1.4h-1.4zM912.2 504.2h2.4v2.4h-2.4zM911.9 505.4h1.7v1.7h-1.7zM909.5 499.7h2.5v2.5h-2.5zM911.2 519.3h2.0v2.0h-2.0zM910.3 519.4h1.3v1.3h-1.3zM913.7 538.6h1.9v1.9h-1.9zM912.9 539.4h1.7v1.7h-1.7zM914.9 538.0h1.6v1.6h-1.6zM911.3 556.5h2.5v2.5h-2.5zM909.4 557.2h2.2v2.2h-2.2zM915.3 556.0h1.2v1.2h-1.2zM915.8 552.5h2.5v2.5h-2.5zM911.2 573.7h2.0v2.0h-2.0zM915.7 574.2h2.2v2.2h-2.2zM911.1 572.1h1.3v1.3h-1.3zM912.7 591.4h1.3v1.3h-1.3zM1544.8 248.3h2.4v2.4h-2.4zM1545.9 249.9h2.4v2.4h-2.4zM1543.0 252.4h1.7v1.7h-1.7zM1562.4 249.6h1.6v1.6h-1.6zM1562.2 250.8h2.3v2.3h-2.3zM1561.6 248.8h1.4v1.4h-1.4zM1564.9 245.8h1.7v1.7h-1.7zM1543.6 278.9h1.8v1.8h-1.8zM1544.7 276.5h2.0v2.0h-2.0zM1546.5 273.8h2.0v2.0h-2.0zM1549.5 275.8h1.9v1.9h-1.9zM1566.7 274.5h2.4v2.4h-2.4zM1565.2 267.7h2.0v2.0h-2.0zM1572.3 270.7h1.8v1.8h-1.8zM1547.6 848.1h1.8v1.8h-1.8zM1548.1 851.9h2.4v2.4h-2.4zM1545.7 851.9h1.6v1.6h-1.6zM1545.9 850.6h1.7v1.7h-1.7zM1560.0 848.6h2.2v2.2h-2.2zM1556.7 849.7h2.0v2.0h-2.0zM1555.9 847.5h2.0v2.0h-2.0zM1556.1 849.0h2.2v2.2h-2.2zM1573.0 848.4h1.8v1.8h-1.8zM1571.3 846.7h2.1v2.1h-2.1zM1572.0 847.4h2.1v2.1h-2.1zM1564.9 847.7h2.4v2.4h-2.4zM1570.2 849.1h1.6v1.6h-1.6zM1577.2 847.6h1.5v1.5h-1.5zM1580.4 845.6h2.2v2.2h-2.2zM990.0 600.5h1.8v1.8h-1.8zM988.6 599.0h1.8v1.8h-1.8zM986.2 599.6h3.6v3.6h-3.6zM1000.6 602.8h2.4v2.4h-2.4zM989.9 610.9h1.8v1.8h-1.8zM992.0 611.9h3.4v3.4h-3.4zM996.8 694.1h1.9v1.9h-1.9zM994.9 689.6h1.8v1.8h-1.8zM1001.3 698.0h1.8v1.8h-1.8zM999.1 698.6h2.5v2.5h-2.5zM999.3 696.2h1.5v1.5h-1.5zM1007.9 706.0h1.9v1.9h-1.9zM1006.5 705.7h1.3v1.3h-1.3zM1008.6 702.9h2.4v2.4h-2.4zM1005.6 704.4h1.8v1.8h-1.8zM999.8 646.6h2.6v2.6h-2.6zM1000.0 642.9h2.5v2.5h-2.5zM1009.4 644.0h1.8v1.8h-1.8zM1010.2 644.0h1.4v1.4h-1.4zM1022.0 641.5h1.6v1.6h-1.6zM1018.5 641.0h2.0v2.0h-2.0zM1021.7 643.0h2.2v2.2h-2.2zM1030.3 644.3h1.7v1.7h-1.7zM1051.2 639.8h1.8v1.8h-1.8zM1053.6 641.4h2.6v2.6h-2.6zM1064.7 632.6h2.6v2.6h-2.6zM1085.1 629.8h2.1v2.1h-2.1zM1086.7 634.0h1.3v1.3h-1.3zM1096.8 634.3h2.5v2.5h-2.5zM1098.2 632.3h1.8v1.8h-1.8zM1096.7 631.3h2.4v2.4h-2.4zM1104.5 628.8h1.2v1.2h-1.2zM1108.6 626.2h2.4v2.4h-2.4zM1118.7 631.0h1.6v1.6h-1.6zM1128.8 624.4h1.2v1.2h-1.2zM1128.4 627.1h1.2v1.2h-1.2zM1140.6 625.2h1.2v1.2h-1.2zM996.9 656.1h1.3v1.3h-1.3zM996.6 653.6h2.5v2.5h-2.5zM995.5 656.3h2.1v2.1h-2.1zM995.7 656.1h1.9v1.9h-1.9zM1137.9 633.3h2.4v2.4h-2.4zM1140.9 631.9h1.5v1.5h-1.5zM1140.6 638.9h1.9v1.9h-1.9zM1136.5 638.4h1.6v1.6h-1.6zM1138.9 638.9h1.8v1.8h-1.8zM1370.0 344.5h2.4v2.4h-2.4zM1370.0 345.0h1.9v1.9h-1.9zM1378.8 337.6h2.6v2.6h-2.6zM1381.1 339.3h1.3v1.3h-1.3zM1378.2 341.2h1.8v1.8h-1.8zM1378.3 337.9h2.0v2.0h-2.0zM1386.4 340.6h1.3v1.3h-1.3zM1384.1 341.1h2.5v2.5h-2.5zM1389.9 341.8h1.3v1.3h-1.3zM1801.1 214.9h1.2v1.2h-1.2zM1803.5 216.9h1.7v1.7h-1.7zM1805.7 228.1h1.3v1.3h-1.3zM1809.0 229.2h1.4v1.4h-1.4zM1805.7 237.1h1.8v1.8h-1.8zM1801.8 291.6h2.0v2.0h-2.0zM1550.6 680.3h2.1v2.1h-2.1zM1555.7 688.8h2.3v2.3h-2.3zM1558.4 689.7h1.6v1.6h-1.6zM1548.0 692.8h1.5v1.5h-1.5zM1548.8 689.3h1.7v1.7h-1.7zM1545.2 689.0h1.5v1.5h-1.5zM1548.3 690.2h2.5v2.5h-2.5zM1478.8 881.5h2.0v2.0h-2.0zM1476.3 879.2h1.5v1.5h-1.5zM1474.2 880.1h2.3v2.3h-2.3zM1476.4 878.6h1.8v1.8h-1.8zM1491.0 891.9h1.2v1.2h-1.2zM1489.2 886.3h2.3v2.3h-2.3zM1495.7 901.5h1.4v1.4h-1.4zM1492.4 902.1h2.2v2.2h-2.2zM1491.7 905.2h1.6v1.6h-1.6zM1494.5 905.9h1.9v1.9h-1.9zM1500.1 923.8h1.8v1.8h-1.8zM1497.1 942.8h2.0v2.0h-2.0zM1496.3 944.0h1.5v1.5h-1.5zM1486.3 895.9h2.5v2.5h-2.5zM1487.8 899.8h2.1v2.1h-2.1zM1487.0 901.9h2.4v2.4h-2.4z"/>
<path fill="#2a361c" d="M1279.8 645.1h2.1v2.1h-2.1zM1284.3 642.4h1.2v1.2h-1.2zM1281.3 642.9h1.5v1.5h-1.5zM1286.8 651.5h2.4v2.4h-2.4zM1209.7 627.1h2.3v2.3h-2.3zM1230.3 633.1h2.4v2.4h-2.4zM1231.0 631.6h1.9v1.9h-1.9zM1228.4 632.1h2.4v2.4h-2.4zM1227.2 635.5h2.3v2.3h-2.3zM1233.5 635.8h2.1v2.1h-2.1zM1234.6 637.6h2.4v2.4h-2.4zM1228.6 636.7h1.3v1.3h-1.3zM1229.4 639.1h1.8v1.8h-1.8zM1253.6 640.4h1.3v1.3h-1.3zM1245.6 640.6h2.6v2.6h-2.6zM1270.3 646.8h1.4v1.4h-1.4zM1209.2 675.3h2.1v2.1h-2.1zM1206.3 675.9h2.5v2.5h-2.5zM1224.4 672.3h1.9v1.9h-1.9zM1223.8 676.6h1.3v1.3h-1.3zM1244.5 674.4h1.9v1.9h-1.9zM1264.8 672.4h1.8v1.8h-1.8zM1262.3 675.8h1.8v1.8h-1.8zM1263.9 679.2h1.8v1.8h-1.8zM1266.1 677.1h1.6v1.6h-1.6zM1266.2 678.5h1.8v1.8h-1.8zM1285.6 674.4h1.9v1.9h-1.9zM1282.8 676.5h1.3v1.3h-1.3zM1209.0 694.8h1.4v1.4h-1.4zM1208.0 698.2h2.3v2.3h-2.3zM1180.8 574.9h1.9v1.9h-1.9zM1186.8 577.2h1.4v1.4h-1.4zM1184.3 577.8h1.3v1.3h-1.3zM1184.1 573.1h1.5v1.5h-1.5zM1182.6 577.6h1.7v1.7h-1.7zM1187.0 573.8h2.3v2.3h-2.3zM1204.6 604.6h2.5v2.5h-2.5zM1204.2 603.9h2.4v2.4h-2.4zM1199.3 602.9h2.3v2.3h-2.3zM1134.5 561.8h2.6v2.6h-2.6zM1138.4 562.5h1.2v1.2h-1.2zM1161.1 567.9h1.8v1.8h-1.8zM1159.8 568.8h1.8v1.8h-1.8zM1191.0 681.9h1.5v1.5h-1.5zM1185.8 685.6h1.6v1.6h-1.6zM1190.5 680.8h2.0v2.0h-2.0zM1187.4 677.5h1.8v1.8h-1.8zM1170.7 691.0h1.7v1.7h-1.7zM1168.7 693.7h1.7v1.7h-1.7zM1173.0 693.9h1.9v1.9h-1.9zM1172.8 693.3h1.2v1.2h-1.2zM909.0 389.7h1.7v1.7h-1.7zM909.4 392.4h2.4v2.4h-2.4zM903.2 408.8h2.6v2.6h-2.6zM908.1 407.5h2.4v2.4h-2.4zM908.6 411.0h1.3v1.3h-1.3zM904.3 409.1h2.5v2.5h-2.5zM908.2 426.0h1.5v1.5h-1.5zM907.9 446.8h1.3v1.3h-1.3zM905.8 446.8h1.4v1.4h-1.4zM912.6 464.1h1.7v1.7h-1.7zM906.1 482.5h2.6v2.6h-2.6zM907.0 483.2h1.9v1.9h-1.9zM913.3 482.6h1.8v1.8h-1.8zM913.5 482.4h1.9v1.9h-1.9zM911.9 482.7h1.7v1.7h-1.7zM911.8 503.1h1.5v1.5h-1.5zM912.9 498.9h1.5v1.5h-1.5zM908.8 521.9h2.4v2.4h-2.4zM913.7 518.7h2.3v2.3h-2.3zM915.7 539.0h1.8v1.8h-1.8zM915.0 556.2h1.6v1.6h-1.6zM909.9 556.4h2.1v2.1h-2.1zM916.6 572.7h1.8v1.8h-1.8zM914.4 569.9h2.2v2.2h-2.2zM913.5 575.1h2.4v2.4h-2.4zM913.0 574.6h1.6v1.6h-1.6zM915.8 594.5h2.4v2.4h-2.4zM915.1 593.5h2.4v2.4h-2.4zM912.8 595.0h1.9v1.9h-1.9zM1541.2 253.6h1.6v1.6h-1.6zM1546.8 249.2h2.5v2.5h-2.5zM1563.9 243.1h1.5v1.5h-1.5zM1563.8 251.1h1.7v1.7h-1.7zM1548.4 280.4h2.5v2.5h-2.5zM1549.5 279.8h2.4v2.4h-2.4zM1547.4 278.1h2.4v2.4h-2.4zM1550.9 275.8h2.2v2.2h-2.2zM1566.1 273.8h2.6v2.6h-2.6zM1569.3 272.3h2.5v2.5h-2.5zM1546.4 847.8h2.0v2.0h-2.0zM1542.7 847.2h1.5v1.5h-1.5zM1543.6 849.8h1.9v1.9h-1.9zM1560.4 850.8h1.5v1.5h-1.5zM1558.8 847.1h1.9v1.9h-1.9zM1560.5 845.6h1.3v1.3h-1.3zM1559.1 849.4h2.4v2.4h-2.4zM1567.6 842.9h2.2v2.2h-2.2zM1570.1 849.0h1.8v1.8h-1.8zM1578.6 846.7h1.4v1.4h-1.4zM1580.9 843.6h1.8v1.8h-1.8zM1581.5 848.2h1.7v1.7h-1.7zM1577.4 843.0h1.9v1.9h-1.9zM993.2 601.9h1.8v1.8h-1.8zM993.1 610.9h2.2v2.2h-2.2zM984.8 610.0h1.9v1.9h-1.9zM995.7 609.5h2.0v2.0h-2.0zM989.4 595.8h3.1v3.1h-3.1zM986.8 612.0h1.8v1.8h-1.8zM998.2 610.0h1.7v1.7h-1.7zM982.3 603.9h3.4v3.4h-3.4zM993.2 610.1h2.9v2.9h-2.9zM996.9 694.8h1.3v1.3h-1.3zM995.4 692.6h1.6v1.6h-1.6zM996.0 690.2h1.4v1.4h-1.4zM993.5 692.8h1.5v1.5h-1.5zM995.0 692.5h2.5v2.5h-2.5zM1002.2 703.3h1.6v1.6h-1.6zM1006.5 705.9h2.2v2.2h-2.2zM1008.0 648.3h1.7v1.7h-1.7zM1009.1 646.3h2.5v2.5h-2.5zM1008.4 648.1h2.5v2.5h-2.5zM1020.4 642.5h2.0v2.0h-2.0zM1032.2 643.0h1.7v1.7h-1.7zM1041.4 638.7h1.3v1.3h-1.3zM1042.9 639.0h1.7v1.7h-1.7zM1041.2 638.0h1.9v1.9h-1.9zM1043.1 637.4h1.9v1.9h-1.9zM1052.5 641.6h1.6v1.6h-1.6zM1052.3 642.2h1.7v1.7h-1.7zM1061.5 634.7h1.6v1.6h-1.6zM1064.3 634.1h1.6v1.6h-1.6zM1075.6 636.0h1.4v1.4h-1.4zM1073.1 638.1h2.1v2.1h-2.1zM1074.1 636.4h1.3v1.3h-1.3zM1084.2 630.7h2.4v2.4h-2.4zM1087.4 632.2h2.5v2.5h-2.5zM1098.0 631.2h2.1v2.1h-2.1zM1107.2 629.7h2.5v2.5h-2.5zM1120.0 630.0h2.2v2.2h-2.2zM1116.2 631.5h2.2v2.2h-2.2zM1139.5 628.8h1.4v1.4h-1.4zM1139.6 624.6h2.5v2.5h-2.5zM993.3 655.1h2.1v2.1h-2.1zM994.1 655.2h2.4v2.4h-2.4zM1137.4 632.1h2.3v2.3h-2.3zM1139.8 633.9h1.8v1.8h-1.8zM1138.0 630.9h1.7v1.7h-1.7zM1140.9 639.3h1.6v1.6h-1.6zM1136.3 637.6h1.9v1.9h-1.9zM1370.3 340.1h2.0v2.0h-2.0zM1380.7 340.6h1.3v1.3h-1.3zM1378.5 340.8h1.7v1.7h-1.7zM1378.5 340.1h2.5v2.5h-2.5zM1388.9 345.4h2.1v2.1h-2.1zM1388.4 341.4h2.4v2.4h-2.4zM1802.8 215.4h1.7v1.7h-1.7zM1801.5 215.1h1.9v1.9h-1.9zM1805.1 242.0h2.2v2.2h-2.2zM1803.8 239.3h1.7v1.7h-1.7zM1803.7 291.1h2.0v2.0h-2.0zM1804.1 288.8h2.0v2.0h-2.0zM1804.8 290.7h2.0v2.0h-2.0zM1803.8 293.0h2.2v2.2h-2.2zM1548.8 682.3h1.4v1.4h-1.4zM1548.3 680.1h1.8v1.8h-1.8zM1557.8 689.2h1.6v1.6h-1.6zM1558.3 688.0h2.3v2.3h-2.3zM1555.3 687.9h2.4v2.4h-2.4zM1545.3 688.4h2.6v2.6h-2.6zM1458.3 883.6h2.3v2.3h-2.3zM1459.5 881.0h2.2v2.2h-2.2zM1479.6 881.4h2.1v2.1h-2.1zM1478.6 882.5h1.2v1.2h-1.2zM1492.2 889.0h1.9v1.9h-1.9zM1490.8 903.2h2.5v2.5h-2.5zM1493.0 903.9h1.9v1.9h-1.9zM1495.3 942.3h2.1v2.1h-2.1zM1497.2 941.9h2.6v2.6h-2.6zM1498.9 942.7h2.3v2.3h-2.3zM1500.6 943.6h1.4v1.4h-1.4zM1500.5 945.3h1.5v1.5h-1.5zM1484.4 898.1h2.4v2.4h-2.4z"/>
<path fill="#6f8a3f" d="M1281.6 646.5h1.3v1.3h-1.3zM1280.1 646.5h1.8v1.8h-1.8zM1281.2 642.9h1.9v1.9h-1.9zM1279.7 649.3h1.9v1.9h-1.9zM1283.5 647.9h2.6v2.6h-2.6zM1291.9 657.4h2.5v2.5h-2.5zM1212.4 632.3h2.0v2.0h-2.0zM1210.7 630.3h1.4v1.4h-1.4zM1210.6 631.0h1.9v1.9h-1.9zM1211.8 626.7h1.8v1.8h-1.8zM1210.6 625.0h2.3v2.3h-2.3zM1210.0 624.9h1.8v1.8h-1.8zM1232.1 635.7h2.3v2.3h-2.3zM1248.2 643.0h2.5v2.5h-2.5zM1248.1 644.1h1.4v1.4h-1.4zM1252.9 640.8h1.5v1.5h-1.5zM1266.5 647.8h2.4v2.4h-2.4zM1272.0 651.4h1.6v1.6h-1.6zM1267.0 649.8h2.0v2.0h-2.0zM1271.1 645.8h2.4v2.4h-2.4zM1267.7 652.3h1.8v1.8h-1.8zM1208.2 675.7h2.5v2.5h-2.5zM1206.7 679.1h2.2v2.2h-2.2zM1204.9 677.2h2.5v2.5h-2.5zM1226.0 678.0h1.3v1.3h-1.3zM1226.1 676.2h2.1v2.1h-2.1zM1224.2 679.5h2.1v2.1h-2.1zM1244.8 677.1h1.2v1.2h-1.2zM1244.9 676.9h2.1v2.1h-2.1zM1283.8 678.5h2.1v2.1h-2.1zM1280.6 678.4h2.3v2.3h-2.3zM1205.8 694.7h1.3v1.3h-1.3zM1180.5 571.5h2.3v2.3h-2.3zM1186.0 576.8h1.9v1.9h-1.9zM1180.4 576.7h1.3v1.3h-1.3zM1187.1 574.7h1.9v1.9h-1.9zM1182.5 571.2h2.1v2.1h-2.1zM1203.0 604.0h2.3v2.3h-2.3zM1199.9 608.0h1.5v1.5h-1.5zM1205.4 608.4h1.9v1.9h-1.9zM1143.0 559.4h2.2v2.2h-2.2zM1139.0 557.8h1.3v1.3h-1.3zM1159.2 565.1h2.3v2.3h-2.3zM1160.3 563.1h1.3v1.3h-1.3zM1160.4 567.7h2.1v2.1h-2.1zM1183.2 680.7h1.6v1.6h-1.6zM1180.6 680.8h2.5v2.5h-2.5zM1185.5 685.8h1.7v1.7h-1.7zM1169.2 696.3h1.3v1.3h-1.3zM1170.4 691.7h1.5v1.5h-1.5zM906.5 389.9h1.8v1.8h-1.8zM911.4 410.1h1.6v1.6h-1.6zM905.9 412.1h2.3v2.3h-2.3zM911.7 425.5h2.6v2.6h-2.6zM905.7 425.8h2.6v2.6h-2.6zM911.3 426.4h2.2v2.2h-2.2zM906.6 424.9h2.1v2.1h-2.1zM909.8 426.0h1.3v1.3h-1.3zM908.3 448.0h1.4v1.4h-1.4zM913.0 464.7h2.1v2.1h-2.1zM906.5 483.1h2.3v2.3h-2.3zM909.0 486.8h1.2v1.2h-1.2zM906.9 483.2h2.0v2.0h-2.0zM914.0 503.0h1.2v1.2h-1.2zM914.0 522.9h1.9v1.9h-1.9zM915.5 516.4h2.4v2.4h-2.4zM909.5 518.3h2.5v2.5h-2.5zM908.8 537.2h1.8v1.8h-1.8zM915.7 539.5h2.1v2.1h-2.1zM915.5 555.3h1.7v1.7h-1.7zM916.4 558.0h1.4v1.4h-1.4zM911.2 558.6h1.5v1.5h-1.5zM912.6 571.0h2.5v2.5h-2.5zM911.5 575.5h1.4v1.4h-1.4zM911.6 572.9h2.0v2.0h-2.0zM911.9 591.3h1.5v1.5h-1.5zM914.3 590.0h1.9v1.9h-1.9zM1546.4 248.4h1.5v1.5h-1.5zM1545.7 252.7h1.4v1.4h-1.4zM1547.4 250.4h1.5v1.5h-1.5zM1561.8 252.4h2.4v2.4h-2.4zM1566.0 249.3h2.4v2.4h-2.4zM1566.1 250.7h1.2v1.2h-1.2zM1568.9 267.7h1.8v1.8h-1.8zM1568.0 271.1h2.0v2.0h-2.0zM1572.6 272.9h2.1v2.1h-2.1zM1545.2 845.4h1.8v1.8h-1.8zM1548.5 851.9h2.4v2.4h-2.4zM1546.6 846.0h1.9v1.9h-1.9zM1548.6 850.8h1.7v1.7h-1.7zM1557.2 849.2h1.5v1.5h-1.5zM1570.5 849.9h2.0v2.0h-2.0zM1572.9 844.7h2.6v2.6h-2.6zM1581.5 846.7h2.5v2.5h-2.5zM1583.5 848.6h1.5v1.5h-1.5zM991.1 605.1h3.6v3.6h-3.6zM987.4 609.7h2.8v2.8h-2.8zM992.2 602.5h3.3v3.3h-3.3zM987.3 610.2h2.2v2.2h-2.2zM986.9 597.4h3.5v3.5h-3.5zM987.7 609.9h2.9v2.9h-2.9zM984.6 607.2h3.6v3.6h-3.6zM983.8 604.9h2.3v2.3h-2.3zM983.7 600.2h3.4v3.4h-3.4zM1000.7 701.8h1.3v1.3h-1.3zM998.2 702.2h1.4v1.4h-1.4zM1002.8 706.4h2.4v2.4h-2.4zM1002.8 707.9h2.0v2.0h-2.0zM1003.4 708.6h1.6v1.6h-1.6zM1001.4 707.4h2.1v2.1h-2.1zM997.9 642.9h1.6v1.6h-1.6zM999.5 642.9h1.8v1.8h-1.8zM1009.5 648.6h1.4v1.4h-1.4zM1019.3 642.4h2.3v2.3h-2.3zM1020.8 640.2h2.0v2.0h-2.0zM1030.6 642.3h1.9v1.9h-1.9zM1042.9 637.7h2.2v2.2h-2.2zM1051.1 639.8h1.7v1.7h-1.7zM1054.5 640.2h1.5v1.5h-1.5zM1064.0 636.9h1.8v1.8h-1.8zM1083.9 633.5h1.7v1.7h-1.7zM1094.1 634.1h2.5v2.5h-2.5zM1104.4 627.8h2.0v2.0h-2.0zM1115.3 628.9h1.3v1.3h-1.3zM1130.9 624.5h2.0v2.0h-2.0zM1130.7 625.5h1.7v1.7h-1.7zM1128.5 623.4h1.3v1.3h-1.3zM1130.1 623.3h2.2v2.2h-2.2zM1128.0 627.1h1.2v1.2h-1.2zM1138.1 624.0h1.5v1.5h-1.5zM1140.3 624.1h1.8v1.8h-1.8zM996.1 656.1h1.2v1.2h-1.2zM1135.8 637.2h2.5v2.5h-2.5zM1139.7 641.1h1.3v1.3h-1.3zM1378.3 338.7h2.6v2.6h-2.6zM1384.9 342.3h2.4v2.4h-2.4zM1800.7 214.1h1.7v1.7h-1.7zM1804.0 211.4h2.2v2.2h-2.2zM1807.7 227.8h2.3v2.3h-2.3zM1807.3 228.6h2.5v2.5h-2.5zM1801.8 239.5h2.6v2.6h-2.6zM1804.5 241.5h1.9v1.9h-1.9zM1807.6 240.0h1.5v1.5h-1.5zM1799.3 281.0h1.9v1.9h-1.9zM1799.0 278.6h2.5v2.5h-2.5zM1803.1 292.1h2.5v2.5h-2.5zM1801.4 293.4h2.2v2.2h-2.2zM1550.3 681.1h2.1v2.1h-2.1zM1551.4 683.7h1.3v1.3h-1.3zM1551.8 681.7h1.4v1.4h-1.4zM1557.3 684.8h1.7v1.7h-1.7zM1460.6 881.1h1.9v1.9h-1.9zM1461.0 884.9h1.6v1.6h-1.6zM1475.0 883.3h2.0v2.0h-2.0zM1475.2 882.6h2.2v2.2h-2.2zM1489.2 889.3h1.5v1.5h-1.5zM1487.8 891.8h1.9v1.9h-1.9zM1494.9 903.7h2.6v2.6h-2.6zM1498.1 923.9h2.3v2.3h-2.3zM1494.5 925.9h2.5v2.5h-2.5zM1499.2 924.7h1.7v1.7h-1.7zM1487.2 897.8h1.7v1.7h-1.7z"/>
<path fill="#5f7a36" d="M1283.7 651.3h2.1v2.1h-2.1zM1284.6 643.3h1.2v1.2h-1.2zM1289.9 654.4h1.7v1.7h-1.7zM1291.5 657.6h1.4v1.4h-1.4zM1293.0 653.5h2.5v2.5h-2.5zM1290.9 650.3h2.1v2.1h-2.1zM1209.5 633.2h1.3v1.3h-1.3zM1207.2 627.4h1.7v1.7h-1.7zM1208.9 630.6h2.1v2.1h-2.1zM1249.3 645.1h2.2v2.2h-2.2zM1251.6 644.5h1.7v1.7h-1.7zM1269.8 652.2h1.6v1.6h-1.6zM1273.3 652.3h1.2v1.2h-1.2zM1208.1 680.4h1.8v1.8h-1.8zM1242.2 675.5h1.4v1.4h-1.4zM1246.1 675.8h1.8v1.8h-1.8zM1241.8 679.8h1.9v1.9h-1.9zM1263.4 674.6h2.5v2.5h-2.5zM1264.7 672.4h2.6v2.6h-2.6zM1266.0 671.0h2.2v2.2h-2.2zM1261.7 677.7h1.6v1.6h-1.6zM1285.0 673.9h1.5v1.5h-1.5zM1206.5 698.8h1.5v1.5h-1.5zM1183.9 578.7h1.4v1.4h-1.4zM1188.6 572.2h2.1v2.1h-2.1zM1200.7 601.7h2.4v2.4h-2.4zM1197.5 605.9h2.5v2.5h-2.5zM1207.3 606.3h2.3v2.3h-2.3zM1139.5 560.8h2.2v2.2h-2.2zM1136.5 566.2h2.0v2.0h-2.0zM1136.7 563.6h1.5v1.5h-1.5zM1140.6 566.2h1.7v1.7h-1.7zM1159.3 564.9h1.5v1.5h-1.5zM1189.9 685.6h1.3v1.3h-1.3zM1184.6 681.4h2.2v2.2h-2.2zM1189.2 686.7h1.5v1.5h-1.5zM1164.9 691.5h2.1v2.1h-2.1zM1164.9 694.8h1.4v1.4h-1.4zM906.0 387.5h1.4v1.4h-1.4zM910.0 394.0h1.9v1.9h-1.9zM910.3 393.4h2.4v2.4h-2.4zM906.0 413.8h2.5v2.5h-2.5zM911.4 412.0h1.6v1.6h-1.6zM907.0 412.6h1.5v1.5h-1.5zM911.0 423.7h2.0v2.0h-2.0zM906.1 430.4h1.8v1.8h-1.8zM907.9 430.0h2.5v2.5h-2.5zM909.1 446.3h2.0v2.0h-2.0zM913.4 444.1h1.9v1.9h-1.9zM906.8 465.4h2.4v2.4h-2.4zM908.9 465.2h2.4v2.4h-2.4zM906.3 464.5h2.2v2.2h-2.2zM912.2 466.3h1.8v1.8h-1.8zM910.6 498.2h1.3v1.3h-1.3zM908.4 500.0h2.5v2.5h-2.5zM909.1 499.2h1.4v1.4h-1.4zM910.2 499.8h1.9v1.9h-1.9zM913.2 519.1h1.5v1.5h-1.5zM912.6 521.0h1.9v1.9h-1.9zM910.8 541.0h1.6v1.6h-1.6zM911.6 534.4h1.7v1.7h-1.7zM912.6 538.3h2.4v2.4h-2.4zM916.1 557.1h1.2v1.2h-1.2zM911.5 573.1h1.3v1.3h-1.3zM916.1 572.1h2.0v2.0h-2.0zM916.2 593.3h2.4v2.4h-2.4zM914.3 594.1h1.7v1.7h-1.7zM915.7 593.9h2.2v2.2h-2.2zM917.2 591.2h1.5v1.5h-1.5zM1538.0 253.2h2.5v2.5h-2.5zM1540.7 253.5h1.6v1.6h-1.6zM1543.5 249.7h1.7v1.7h-1.7zM1545.1 249.9h2.1v2.1h-2.1zM1540.9 250.7h2.6v2.6h-2.6zM1560.7 243.0h1.6v1.6h-1.6zM1560.9 243.4h2.0v2.0h-2.0zM1562.2 244.0h1.5v1.5h-1.5zM1543.4 277.7h2.0v2.0h-2.0zM1546.8 271.4h1.4v1.4h-1.4zM1564.3 274.4h1.9v1.9h-1.9zM1563.7 271.4h2.0v2.0h-2.0zM1554.1 847.9h1.3v1.3h-1.3zM1556.2 850.8h2.3v2.3h-2.3zM1570.3 845.4h2.4v2.4h-2.4zM1582.8 847.5h1.8v1.8h-1.8zM1578.3 843.7h2.6v2.6h-2.6zM985.4 603.4h1.8v1.8h-1.8zM989.7 602.2h2.4v2.4h-2.4zM988.9 595.7h2.9v2.9h-2.9zM998.8 697.7h2.5v2.5h-2.5zM998.5 698.3h1.6v1.6h-1.6zM1000.2 706.6h2.0v2.0h-2.0zM1003.0 705.1h1.9v1.9h-1.9zM1007.8 707.5h1.2v1.2h-1.2zM1009.2 704.7h2.0v2.0h-2.0zM1007.0 705.8h1.9v1.9h-1.9zM1000.5 646.7h1.3v1.3h-1.3zM999.9 645.9h1.5v1.5h-1.5zM1009.5 644.9h1.5v1.5h-1.5zM1009.8 644.2h1.6v1.6h-1.6zM1022.5 641.4h2.1v2.1h-2.1zM1030.9 640.2h2.1v2.1h-2.1zM1032.1 640.9h1.7v1.7h-1.7zM1041.5 638.2h1.9v1.9h-1.9zM1055.4 640.3h1.8v1.8h-1.8zM1065.3 634.1h2.1v2.1h-2.1zM1065.5 637.2h1.5v1.5h-1.5zM1074.2 637.6h2.4v2.4h-2.4zM1084.0 629.1h2.1v2.1h-2.1zM1098.2 634.4h1.4v1.4h-1.4zM1104.8 626.5h2.1v2.1h-2.1zM1104.5 628.7h2.5v2.5h-2.5zM1114.7 628.9h2.2v2.2h-2.2zM1118.8 627.3h1.5v1.5h-1.5zM1137.9 625.1h2.2v2.2h-2.2zM996.3 654.1h1.9v1.9h-1.9zM1367.6 341.0h2.0v2.0h-2.0zM1370.7 340.2h1.9v1.9h-1.9zM1377.0 339.4h2.5v2.5h-2.5zM1385.7 344.8h1.8v1.8h-1.8zM1388.8 341.4h1.7v1.7h-1.7zM1802.0 211.2h2.0v2.0h-2.0zM1809.1 226.2h1.7v1.7h-1.7zM1805.7 236.5h1.4v1.4h-1.4zM1797.1 282.3h2.4v2.4h-2.4zM1802.6 281.1h1.4v1.4h-1.4zM1801.2 282.4h1.3v1.3h-1.3zM1800.5 290.6h2.1v2.1h-2.1zM1555.8 684.4h2.1v2.1h-2.1zM1558.4 689.9h1.2v1.2h-1.2zM1548.8 692.1h1.6v1.6h-1.6zM1461.7 882.3h1.7v1.7h-1.7zM1477.1 882.3h2.0v2.0h-2.0zM1491.8 888.8h2.6v2.6h-2.6zM1488.3 885.9h2.1v2.1h-2.1zM1492.1 903.3h1.3v1.3h-1.3zM1496.0 924.5h1.9v1.9h-1.9zM1496.4 922.5h1.4v1.4h-1.4zM1495.8 945.3h2.4v2.4h-2.4zM1489.7 897.7h1.9v1.9h-1.9zM1486.4 897.2h1.5v1.5h-1.5z"/>
<path fill="#46602a" d="M1278.5 643.6h1.6v1.6h-1.6zM1283.6 652.4h1.5v1.5h-1.5zM1286.1 655.8h1.6v1.6h-1.6zM1293.8 652.6h2.3v2.3h-2.3zM1231.8 639.5h2.0v2.0h-2.0zM1228.9 634.7h2.3v2.3h-2.3zM1253.0 643.5h1.5v1.5h-1.5zM1272.4 648.4h1.8v1.8h-1.8zM1269.3 647.3h1.3v1.3h-1.3zM1205.6 677.3h2.2v2.2h-2.2zM1208.0 672.1h2.2v2.2h-2.2zM1207.7 675.1h2.4v2.4h-2.4zM1208.6 679.0h1.5v1.5h-1.5zM1220.6 673.1h2.5v2.5h-2.5zM1227.2 673.6h1.9v1.9h-1.9zM1222.0 679.9h1.5v1.5h-1.5zM1227.7 677.0h2.4v2.4h-2.4zM1223.1 676.5h1.5v1.5h-1.5zM1245.4 678.1h2.6v2.6h-2.6zM1243.7 677.6h2.1v2.1h-2.1zM1244.1 679.9h2.0v2.0h-2.0zM1262.8 671.3h2.4v2.4h-2.4zM1264.3 675.7h1.9v1.9h-1.9zM1284.9 676.7h1.3v1.3h-1.3zM1286.9 676.7h2.5v2.5h-2.5zM1210.3 696.0h1.4v1.4h-1.4zM1202.0 698.8h2.4v2.4h-2.4zM1204.5 698.5h1.7v1.7h-1.7zM1203.7 703.6h1.3v1.3h-1.3zM1206.9 703.8h1.7v1.7h-1.7zM1202.0 699.5h1.9v1.9h-1.9zM1208.4 697.5h2.3v2.3h-2.3zM1209.7 698.0h1.3v1.3h-1.3zM1188.4 577.4h1.8v1.8h-1.8zM1200.2 602.4h2.4v2.4h-2.4zM1201.1 604.9h1.7v1.7h-1.7zM1141.7 560.0h2.0v2.0h-2.0zM1142.2 562.6h2.4v2.4h-2.4zM1143.0 560.7h2.5v2.5h-2.5zM1142.8 564.8h2.3v2.3h-2.3zM1160.0 567.1h1.3v1.3h-1.3zM1156.8 568.6h1.7v1.7h-1.7zM1157.2 568.1h2.4v2.4h-2.4zM1184.7 682.3h1.3v1.3h-1.3zM1185.9 684.6h2.1v2.1h-2.1zM1165.3 689.3h2.3v2.3h-2.3zM1173.9 691.8h2.3v2.3h-2.3zM1170.4 693.3h1.8v1.8h-1.8zM1168.0 696.5h2.1v2.1h-2.1zM903.6 393.8h1.7v1.7h-1.7zM905.7 386.9h2.2v2.2h-2.2zM905.5 408.5h2.2v2.2h-2.2zM906.9 423.8h1.2v1.2h-1.2zM906.5 461.3h1.5v1.5h-1.5zM908.6 460.8h2.6v2.6h-2.6zM911.2 503.2h1.6v1.6h-1.6zM912.4 503.1h2.1v2.1h-2.1zM914.0 518.7h2.2v2.2h-2.2zM913.9 522.0h1.9v1.9h-1.9zM909.3 519.4h2.6v2.6h-2.6zM910.1 539.3h2.0v2.0h-2.0zM911.8 533.7h2.6v2.6h-2.6zM915.7 535.5h2.1v2.1h-2.1zM911.9 559.6h1.9v1.9h-1.9zM915.6 553.2h2.2v2.2h-2.2zM911.5 589.8h2.5v2.5h-2.5zM915.1 587.8h1.6v1.6h-1.6zM1539.2 253.0h2.0v2.0h-2.0zM1547.5 249.6h1.8v1.8h-1.8zM1568.0 248.6h1.6v1.6h-1.6zM1564.2 249.2h2.4v2.4h-2.4zM1559.3 246.2h2.1v2.1h-2.1zM1543.4 279.1h1.9v1.9h-1.9zM1547.1 275.3h1.5v1.5h-1.5zM1544.8 272.3h2.0v2.0h-2.0zM1546.4 273.6h2.6v2.6h-2.6zM1547.8 273.7h2.3v2.3h-2.3zM1566.1 273.0h1.7v1.7h-1.7zM1564.4 274.7h1.3v1.3h-1.3zM1565.8 268.4h2.1v2.1h-2.1zM1568.5 267.4h1.6v1.6h-1.6zM1564.4 271.0h2.6v2.6h-2.6zM1545.4 845.1h2.1v2.1h-2.1zM1561.8 846.0h1.4v1.4h-1.4zM1568.6 849.9h2.2v2.2h-2.2zM1571.9 849.7h1.4v1.4h-1.4zM1578.0 842.9h1.4v1.4h-1.4zM1580.0 845.8h2.5v2.5h-2.5zM989.8 598.1h2.0v2.0h-2.0zM994.0 601.6h2.1v2.1h-2.1zM998.6 600.2h3.3v3.3h-3.3zM996.4 605.1h3.0v3.0h-3.0zM996.2 692.5h2.0v2.0h-2.0zM996.9 694.2h2.6v2.6h-2.6zM999.0 700.6h2.0v2.0h-2.0zM1000.2 701.0h2.5v2.5h-2.5zM999.1 704.0h2.6v2.6h-2.6zM1001.9 707.7h2.1v2.1h-2.1zM1004.4 704.0h1.4v1.4h-1.4zM1000.5 645.0h1.2v1.2h-1.2zM997.7 644.5h1.6v1.6h-1.6zM1022.0 643.3h2.1v2.1h-2.1zM1031.9 643.5h1.7v1.7h-1.7zM1031.1 644.4h1.5v1.5h-1.5zM1033.1 642.0h1.6v1.6h-1.6zM1041.6 636.3h1.8v1.8h-1.8zM1041.3 635.5h2.3v2.3h-2.3zM1050.7 639.9h2.5v2.5h-2.5zM1062.2 636.4h2.6v2.6h-2.6zM1062.7 635.2h2.1v2.1h-2.1zM1072.9 635.3h1.8v1.8h-1.8zM1074.2 634.7h1.8v1.8h-1.8zM1075.9 638.7h1.4v1.4h-1.4zM1074.2 637.5h1.5v1.5h-1.5zM1085.6 629.6h2.0v2.0h-2.0zM1084.3 630.2h1.3v1.3h-1.3zM1096.1 635.3h2.1v2.1h-2.1zM1094.5 631.5h1.3v1.3h-1.3zM1108.6 630.0h1.4v1.4h-1.4zM1108.7 629.2h1.4v1.4h-1.4zM1118.1 627.1h2.6v2.6h-2.6zM1116.5 632.1h1.4v1.4h-1.4zM1128.1 622.4h2.0v2.0h-2.0zM1137.4 624.6h2.2v2.2h-2.2zM1140.9 626.7h1.3v1.3h-1.3zM1141.3 634.3h1.5v1.5h-1.5zM1141.7 633.6h1.7v1.7h-1.7zM1141.6 630.0h2.4v2.4h-2.4zM1138.8 637.4h1.3v1.3h-1.3zM1369.4 342.1h1.9v1.9h-1.9zM1369.3 343.6h1.9v1.9h-1.9zM1369.1 343.7h1.3v1.3h-1.3zM1370.8 342.0h1.7v1.7h-1.7zM1385.4 344.2h2.2v2.2h-2.2zM1804.4 214.4h1.6v1.6h-1.6zM1801.3 216.1h2.3v2.3h-2.3zM1808.3 226.6h1.9v1.9h-1.9zM1809.2 227.2h1.4v1.4h-1.4zM1808.2 227.4h2.2v2.2h-2.2zM1805.2 225.6h2.1v2.1h-2.1zM1804.7 239.1h2.2v2.2h-2.2zM1802.3 239.3h2.2v2.2h-2.2zM1800.1 282.6h2.6v2.6h-2.6zM1798.3 281.1h1.3v1.3h-1.3zM1799.3 281.4h2.6v2.6h-2.6zM1798.2 278.8h1.5v1.5h-1.5zM1800.6 287.9h2.5v2.5h-2.5zM1548.4 682.8h2.0v2.0h-2.0zM1547.1 683.2h2.5v2.5h-2.5zM1548.9 681.0h2.6v2.6h-2.6zM1557.1 685.5h1.6v1.6h-1.6zM1548.0 690.6h2.2v2.2h-2.2zM1549.0 690.1h1.6v1.6h-1.6zM1546.5 691.6h1.8v1.8h-1.8zM1458.6 885.4h2.4v2.4h-2.4zM1460.8 885.0h1.8v1.8h-1.8zM1461.5 882.2h1.8v1.8h-1.8zM1459.3 883.9h2.6v2.6h-2.6zM1487.0 891.3h1.5v1.5h-1.5zM1490.5 891.9h1.4v1.4h-1.4zM1493.6 906.5h1.7v1.7h-1.7zM1495.2 925.0h2.0v2.0h-2.0zM1497.1 926.8h2.4v2.4h-2.4zM1497.6 924.1h2.0v2.0h-2.0zM1497.4 942.8h2.5v2.5h-2.5zM1487.6 896.3h1.9v1.9h-1.9zM1485.8 898.3h2.2v2.2h-2.2z"/>
<path fill="#282c16" d="M1599.6 660.4h1.5v1.5h-1.5zM1599.0 657.5h2.2v2.2h-2.2zM1591.6 658.5h2.2v2.2h-2.2zM1594.2 658.2h1.9v1.9h-1.9zM1617.8 661.9h1.7v1.7h-1.7zM1613.8 661.3h2.1v2.1h-2.1zM1637.7 651.9h1.4v1.4h-1.4zM1639.3 651.8h2.0v2.0h-2.0zM1640.0 655.7h1.3v1.3h-1.3zM1641.4 656.5h2.6v2.6h-2.6zM1641.1 655.8h2.4v2.4h-2.4zM1651.7 650.0h1.7v1.7h-1.7zM1650.7 655.7h1.3v1.3h-1.3zM1675.7 652.4h2.3v2.3h-2.3zM1682.8 647.1h2.5v2.5h-2.5zM1680.3 648.3h1.8v1.8h-1.8zM1681.8 647.4h1.5v1.5h-1.5zM1697.6 645.6h1.9v1.9h-1.9zM1698.2 652.3h2.1v2.1h-2.1zM1721.1 640.6h2.2v2.2h-2.2zM1720.9 638.7h1.9v1.9h-1.9zM1719.0 639.9h1.5v1.5h-1.5zM1727.1 640.7h1.5v1.5h-1.5zM1747.6 640.2h1.5v1.5h-1.5zM1740.5 635.1h1.4v1.4h-1.4zM1743.3 642.4h2.1v2.1h-2.1zM1744.5 635.3h1.8v1.8h-1.8zM1743.8 639.7h1.3v1.3h-1.3zM1762.6 637.0h2.0v2.0h-2.0zM1766.8 640.6h1.5v1.5h-1.5zM1768.1 633.9h1.9v1.9h-1.9zM1789.5 631.1h2.5v2.5h-2.5zM1783.5 627.4h1.4v1.4h-1.4zM1787.6 634.8h1.9v1.9h-1.9zM1787.5 628.2h2.2v2.2h-2.2zM1783.4 627.6h2.2v2.2h-2.2zM1809.2 629.6h1.6v1.6h-1.6zM1807.7 626.7h1.3v1.3h-1.3zM1802.6 631.9h1.9v1.9h-1.9z"/>
<path fill="#7d802c" d="M1593.6 656.0h1.5v1.5h-1.5zM1598.2 663.8h2.6v2.6h-2.6zM1594.2 658.5h1.6v1.6h-1.6zM1621.7 655.1h2.5v2.5h-2.5zM1638.3 660.2h1.7v1.7h-1.7zM1640.9 652.3h1.7v1.7h-1.7zM1633.7 656.6h2.0v2.0h-2.0zM1654.2 649.6h1.7v1.7h-1.7zM1653.0 650.1h1.9v1.9h-1.9zM1655.9 651.7h2.6v2.6h-2.6zM1654.6 649.9h2.5v2.5h-2.5zM1652.4 650.6h2.2v2.2h-2.2zM1681.7 652.4h2.2v2.2h-2.2zM1675.5 651.4h1.7v1.7h-1.7zM1675.5 649.1h2.1v2.1h-2.1zM1693.7 643.8h2.5v2.5h-2.5zM1696.7 644.8h2.1v2.1h-2.1zM1700.3 650.5h1.8v1.8h-1.8zM1720.9 642.3h2.5v2.5h-2.5zM1746.9 635.7h1.6v1.6h-1.6zM1766.4 632.5h2.3v2.3h-2.3zM1766.8 636.1h2.2v2.2h-2.2zM1811.5 626.3h1.8v1.8h-1.8z"/>
<path fill="#363a1c" d="M1600.6 659.2h1.3v1.3h-1.3zM1594.4 663.5h2.3v2.3h-2.3zM1601.3 661.2h1.6v1.6h-1.6zM1591.5 660.8h1.6v1.6h-1.6zM1598.3 657.2h2.1v2.1h-2.1zM1616.7 654.1h1.7v1.7h-1.7zM1613.7 654.6h2.1v2.1h-2.1zM1616.1 654.8h1.3v1.3h-1.3zM1618.3 662.1h2.6v2.6h-2.6zM1622.1 659.9h2.1v2.1h-2.1zM1617.1 658.3h2.5v2.5h-2.5zM1617.8 656.2h2.3v2.3h-2.3zM1638.9 660.0h2.0v2.0h-2.0zM1639.5 651.4h1.6v1.6h-1.6zM1635.6 660.1h1.6v1.6h-1.6zM1638.3 657.1h2.2v2.2h-2.2zM1655.5 649.7h2.5v2.5h-2.5zM1655.7 656.8h1.6v1.6h-1.6zM1659.5 652.7h2.0v2.0h-2.0zM1681.8 646.2h1.9v1.9h-1.9zM1677.0 650.6h2.1v2.1h-2.1zM1717.5 639.0h1.5v1.5h-1.5zM1749.3 639.0h1.8v1.8h-1.8zM1749.1 637.7h1.7v1.7h-1.7zM1747.2 635.3h2.5v2.5h-2.5zM1747.4 642.0h1.3v1.3h-1.3zM1740.0 635.0h1.4v1.4h-1.4zM1766.1 637.8h2.6v2.6h-2.6zM1761.4 634.5h1.7v1.7h-1.7zM1763.7 636.8h1.9v1.9h-1.9zM1762.0 640.5h2.1v2.1h-2.1zM1780.5 631.4h2.6v2.6h-2.6zM1785.1 635.4h1.3v1.3h-1.3zM1809.0 627.7h2.1v2.1h-2.1z"/>
<path fill="#8f9134" d="M1595.9 664.7h1.8v1.8h-1.8zM1616.6 655.3h2.2v2.2h-2.2zM1619.4 663.2h1.6v1.6h-1.6zM1637.9 659.8h1.5v1.5h-1.5zM1638.9 652.9h2.1v2.1h-2.1zM1658.1 651.6h1.3v1.3h-1.3zM1680.0 645.2h1.7v1.7h-1.7zM1681.7 647.4h1.4v1.4h-1.4zM1679.1 647.0h1.6v1.6h-1.6zM1680.3 652.3h1.8v1.8h-1.8zM1694.8 648.7h1.2v1.2h-1.2zM1699.0 644.0h2.0v2.0h-2.0zM1697.7 647.7h1.9v1.9h-1.9zM1696.0 651.7h1.7v1.7h-1.7zM1722.8 639.6h2.4v2.4h-2.4zM1725.2 636.9h1.3v1.3h-1.3zM1718.3 640.9h2.2v2.2h-2.2zM1740.4 635.3h1.4v1.4h-1.4zM1742.9 636.9h2.0v2.0h-2.0zM1760.3 633.2h2.2v2.2h-2.2zM1763.5 636.4h1.9v1.9h-1.9zM1762.9 637.3h1.4v1.4h-1.4zM1759.1 638.6h2.2v2.2h-2.2zM1759.7 634.8h1.7v1.7h-1.7zM1765.7 640.0h2.2v2.2h-2.2zM1788.1 627.2h2.0v2.0h-2.0zM1788.1 635.4h1.3v1.3h-1.3zM1786.1 627.9h1.9v1.9h-1.9zM1781.3 629.9h2.1v2.1h-2.1zM1784.1 632.5h1.7v1.7h-1.7zM1787.4 634.8h1.6v1.6h-1.6zM1811.4 628.8h2.3v2.3h-2.3zM1806.0 629.2h1.5v1.5h-1.5zM1804.7 625.7h1.6v1.6h-1.6zM1804.0 628.1h1.7v1.7h-1.7zM1807.9 627.8h1.8v1.8h-1.8zM1806.8 630.8h1.3v1.3h-1.3z"/>
<path fill="#5c6022" d="M1591.7 661.8h1.5v1.5h-1.5zM1597.4 658.3h2.3v2.3h-2.3zM1617.9 657.1h1.6v1.6h-1.6zM1616.1 654.6h1.7v1.7h-1.7zM1618.8 655.6h2.5v2.5h-2.5zM1638.3 656.7h1.8v1.8h-1.8zM1652.5 656.6h1.3v1.3h-1.3zM1654.2 649.3h1.3v1.3h-1.3zM1655.9 655.5h2.4v2.4h-2.4zM1654.1 654.8h2.3v2.3h-2.3zM1679.0 652.7h2.2v2.2h-2.2zM1681.3 644.0h1.7v1.7h-1.7zM1696.9 648.6h2.4v2.4h-2.4zM1693.7 650.2h1.2v1.2h-1.2zM1700.0 644.9h1.9v1.9h-1.9zM1694.3 644.4h2.5v2.5h-2.5zM1696.6 650.4h2.4v2.4h-2.4zM1700.8 646.8h2.2v2.2h-2.2zM1721.5 637.9h1.9v1.9h-1.9zM1726.5 638.2h2.2v2.2h-2.2zM1723.4 643.1h2.5v2.5h-2.5zM1721.9 637.7h1.3v1.3h-1.3zM1725.1 638.5h2.1v2.1h-2.1zM1720.7 641.3h2.2v2.2h-2.2zM1746.6 641.2h1.8v1.8h-1.8zM1739.4 637.8h2.3v2.3h-2.3zM1786.6 634.5h2.0v2.0h-2.0zM1785.6 634.2h2.4v2.4h-2.4zM1806.0 629.7h1.6v1.6h-1.6zM1802.9 628.5h1.7v1.7h-1.7zM1810.9 628.3h1.8v1.8h-1.8zM1803.3 629.2h1.7v1.7h-1.7z"/>
<path fill="#555a50" d="M1305.2 541.8h3.5v3.9h-3.5zM1304.4 526.9h2.3v1.5h-2.3zM1315.2 519.7h2.5v2.1h-2.5zM1328.2 532.7h1.5v3.3h-1.5zM1318.5 544.4h3.8v2.6h-3.8zM1321.7 518.8h3.9v1.7h-3.9zM1314.7 519.8h1.6v2.9h-1.6zM1302.3 540.7h2.6v1.7h-2.6zM1317.1 529.4h2.6v2.2h-2.6zM1326.8 541.9h3.9v3.2h-3.9zM1325.4 522.1h2.8v2.7h-2.8zM1306.4 534.3h2.7v1.7h-2.7zM1327.8 532.8h2.7v2.1h-2.7zM1302.1 525.2h3.5v1.7h-3.5zM1311.2 523.9h2.2v3.8h-2.2zM1304.9 529.2h2.0v1.6h-2.0zM1322.4 534.3h1.9v3.2h-1.9zM1324.5 529.3h3.7v1.8h-3.7zM1321.0 520.1h1.7v4.0h-1.7zM1320.4 535.4h2.2v1.8h-2.2zM1302.0 522.3h2.9v3.7h-2.9zM1321.8 537.8h1.9v2.4h-1.9zM1303.3 525.0h1.9v2.6h-1.9zM1474.3 571.0h1.6v2.3h-1.6zM1489.6 591.0h3.5v3.7h-3.5zM1492.1 576.5h2.0v1.8h-2.0zM1484.9 572.3h3.1v1.7h-3.1zM1483.2 579.1h2.8v2.6h-2.8zM1201.2 820.6h2.1v3.3h-2.1zM1197.8 820.5h2.7v1.6h-2.7zM1183.8 829.3h2.6v2.6h-2.6zM1175.7 829.6h3.0v1.6h-3.0zM1190.3 825.7h3.9v2.5h-3.9zM1176.1 833.8h2.8v2.6h-2.8zM1180.5 834.2h2.6v3.9h-2.6zM1221.9 834.2h2.3v3.7h-2.3zM1223.7 835.4h2.4v2.8h-2.4zM1215.6 826.8h2.4v3.9h-2.4zM1207.0 834.0h3.1v1.8h-3.1zM1217.4 818.1h2.6v2.9h-2.6z"/>
<path fill="#ffffff" d="M1324.5 530.9h2.2v2.4h-2.2zM1323.3 520.7h2.9v3.5h-2.9zM1320.9 522.9h3.4v1.5h-3.4zM1305.1 518.2h3.2v1.7h-3.2zM1310.8 515.2h3.3v2.9h-3.3zM1324.3 520.0h3.4v1.7h-3.4zM1313.3 543.7h3.0v1.6h-3.0zM1309.2 526.8h1.7v1.8h-1.7zM1322.1 538.4h2.7v3.0h-2.7zM1319.2 527.0h3.5v2.5h-3.5zM1311.9 518.4h2.2v3.2h-2.2zM1310.4 524.5h3.8v3.7h-3.8zM1328.2 522.1h1.6v3.2h-1.6zM1320.5 544.8h2.9v3.5h-2.9zM1305.8 524.9h2.3v2.2h-2.3zM1326.3 519.5h2.3v1.7h-2.3zM1304.2 531.5h3.7v2.5h-3.7zM1306.9 539.3h2.7v3.4h-2.7zM1487.3 576.3h3.2v3.5h-3.2zM1482.6 576.9h3.3v3.8h-3.3zM1474.7 574.3h3.9v1.6h-3.9zM1488.8 575.9h2.3v2.9h-2.3zM1484.3 578.2h3.7v2.0h-3.7zM1473.3 578.8h3.7v2.1h-3.7zM1189.4 832.2h3.8v3.8h-3.8zM1202.1 819.8h3.3v2.2h-3.3zM1221.6 837.3h1.5v2.2h-1.5zM1214.7 827.7h2.6v1.7h-2.6z"/>
<path fill="#f4f4f4" d="M1308.8 525.3h2.7v1.9h-2.7zM1312.2 540.4h1.7v2.3h-1.7zM1316.9 528.6h3.8v3.8h-3.8zM1318.0 520.5h3.9v2.9h-3.9zM1318.1 520.9h2.5v2.7h-2.5zM1314.6 540.5h1.6v2.8h-1.6zM1329.8 526.5h1.8v2.8h-1.8zM1310.4 518.7h3.2v1.8h-3.2zM1326.2 540.3h3.5v1.9h-3.5zM1327.0 545.8h2.3v3.7h-2.3zM1318.7 542.2h4.0v1.8h-4.0zM1489.0 576.5h3.3v2.8h-3.3zM1484.3 583.2h2.8v2.7h-2.8zM1487.2 573.6h2.1v4.0h-2.1zM1474.1 580.3h2.7v2.6h-2.7zM1493.2 572.2h3.4v3.3h-3.4zM1192.7 822.6h3.5v3.0h-3.5zM1181.0 835.7h1.8v3.6h-1.8zM1200.8 827.5h3.3v3.0h-3.3zM1177.5 827.4h1.6v3.0h-1.6zM1199.7 830.0h3.6v3.0h-3.6zM1195.3 835.9h2.7v2.3h-2.7zM1199.8 830.4h1.9v1.7h-1.9zM1179.9 820.0h3.2v2.3h-3.2zM1213.6 819.5h2.1v2.4h-2.1zM1218.0 835.2h2.9v2.6h-2.9zM1213.3 836.6h1.8v2.7h-1.8zM1204.4 835.7h2.3v3.0h-2.3zM1219.8 829.7h2.2v2.5h-2.2z"/>
<path fill="#cfd0d0" d="M1313.2 517.7h3.1v1.7h-3.1zM1321.7 542.8h1.6v3.0h-1.6zM1321.9 536.9h1.5v2.6h-1.5zM1326.9 540.9h1.6v2.7h-1.6zM1312.5 537.8h3.4v3.3h-3.4zM1325.5 543.7h1.7v1.5h-1.7zM1320.1 537.1h3.4v1.7h-3.4zM1477.0 589.7h2.9v3.0h-2.9zM1491.8 569.6h2.7v1.9h-2.7zM1477.2 571.0h2.7v3.1h-2.7zM1188.2 830.5h3.0v2.0h-3.0zM1190.9 826.6h4.0v3.4h-4.0zM1188.9 830.0h3.3v2.5h-3.3zM1188.2 822.5h1.8v2.4h-1.8zM1188.7 832.0h1.8v2.2h-1.8zM1195.4 830.9h2.8v2.8h-2.8zM1187.9 831.4h2.3v2.0h-2.3zM1182.5 823.5h1.6v4.0h-1.6zM1199.6 835.5h3.7v3.3h-3.7zM1184.9 826.2h1.6v2.1h-1.6zM1221.5 837.6h1.8v3.9h-1.8zM1214.0 823.9h2.5v2.6h-2.5zM1204.7 822.2h1.6v2.7h-1.6zM1208.2 825.9h4.0v2.1h-4.0zM1215.6 819.5h2.3v2.0h-2.3z"/>
<path fill="#e6e6e6" d="M1318.9 515.7h2.1v2.8h-2.1zM1305.5 542.7h3.7v2.0h-3.7zM1328.8 546.6h3.8v2.2h-3.8zM1302.5 543.6h3.3v3.4h-3.3zM1327.9 528.6h1.8v2.7h-1.8zM1308.9 539.2h2.1v3.9h-2.1zM1315.5 514.0h3.6v2.5h-3.6zM1312.7 516.9h1.8v2.5h-1.8zM1317.4 514.7h3.9v2.4h-3.9zM1306.6 525.9h1.9v3.8h-1.9zM1323.8 521.2h3.1v2.1h-3.1zM1327.7 532.6h1.8v3.8h-1.8zM1311.9 519.6h1.6v2.5h-1.6zM1303.2 521.8h2.7v2.7h-2.7zM1302.3 542.8h2.8v3.3h-2.8zM1327.3 547.3h2.2v3.8h-2.2zM1487.7 579.8h3.4v2.8h-3.4zM1484.4 585.2h3.8v2.8h-3.8zM1480.1 586.0h2.3v3.9h-2.3zM1488.6 568.9h2.0v2.7h-2.0zM1472.5 574.3h1.8v2.7h-1.8zM1473.6 570.8h2.8v3.0h-2.8zM1181.8 836.0h3.3v2.4h-3.3zM1185.6 830.0h3.5v3.7h-3.5zM1181.1 838.8h1.8v3.0h-1.8zM1212.5 836.3h3.9v1.9h-3.9zM1213.5 819.1h2.1v2.7h-2.1zM1214.2 835.3h2.3v3.3h-2.3z"/>
<g clip-path="url(#darkclip)" stroke="#36372f" stroke-width="1.6">
<line x1="874.2" y1="161" x2="874.2" y2="954"/>
<line x1="911.2" y1="161" x2="911.2" y2="954"/>
<line x1="948.2" y1="161" x2="948.2" y2="954"/>
<line x1="985.1" y1="161" x2="985.1" y2="954"/>
<line x1="1022.1" y1="161" x2="1022.1" y2="954"/>
<line x1="1059.0" y1="161" x2="1059.0" y2="954"/>
<line x1="1096.0" y1="161" x2="1096.0" y2="954"/>
<line x1="1132.9" y1="161" x2="1132.9" y2="954"/>
<line x1="1169.9" y1="161" x2="1169.9" y2="954"/>
<line x1="1206.8" y1="161" x2="1206.8" y2="954"/>
<line x1="1243.8" y1="161" x2="1243.8" y2="954"/>
<line x1="1280.7" y1="161" x2="1280.7" y2="954"/>
<line x1="1317.7" y1="161" x2="1317.7" y2="954"/>
<line x1="1354.6" y1="161" x2="1354.6" y2="954"/>
<line x1="1391.6" y1="161" x2="1391.6" y2="954"/>
<line x1="1428.5" y1="161" x2="1428.5" y2="954"/>
<line x1="1465.5" y1="161" x2="1465.5" y2="954"/>
<line x1="1502.4" y1="161" x2="1502.4" y2="954"/>
<line x1="1539.4" y1="161" x2="1539.4" y2="954"/>
<line x1="1576.3" y1="161" x2="1576.3" y2="954"/>
<line x1="1613.2" y1="161" x2="1613.2" y2="954"/>
<line x1="1650.2" y1="161" x2="1650.2" y2="954"/>
<line x1="1687.2" y1="161" x2="1687.2" y2="954"/>
<line x1="1724.1" y1="161" x2="1724.1" y2="954"/>
<line x1="1761.1" y1="161" x2="1761.1" y2="954"/>
<line x1="1798.0" y1="161" x2="1798.0" y2="954"/>
<line x1="1835.0" y1="161" x2="1835.0" y2="954"/>
<line x1="1871.9" y1="161" x2="1871.9" y2="954"/>
<line x1="876" y1="187.6" x2="1863" y2="187.6"/>
<line x1="876" y1="224.6" x2="1863" y2="224.6"/>
<line x1="1700" y1="800.5" x2="1863" y2="800.5"/>
<line x1="1700" y1="836.6" x2="1863" y2="836.6"/>
<line x1="1700" y1="872.7" x2="1863" y2="872.7"/>
<line x1="1700" y1="908.8" x2="1863" y2="908.8"/>
<line x1="1700" y1="944.8" x2="1863" y2="944.8"/>
</g>
<line x1="942.5" y1="161" x2="942.5" y2="954" stroke="#202020" stroke-opacity="0.3" stroke-width="1"/>
<line x1="1132.5" y1="161" x2="1132.5" y2="954" stroke="#202020" stroke-opacity="0.3" stroke-width="1"/>
<line x1="1321.5" y1="161" x2="1321.5" y2="954" stroke="#202020" stroke-opacity="0.3" stroke-width="1"/>
<line x1="1511.5" y1="161" x2="1511.5" y2="954" stroke="#202020" stroke-opacity="0.3" stroke-width="1"/>
<line x1="1700.5" y1="161" x2="1700.5" y2="954" stroke="#202020" stroke-opacity="0.3" stroke-width="1"/>
<line x1="876" y1="167.5" x2="1863" y2="167.5" stroke="#202020" stroke-opacity="0.3" stroke-width="1"/>
<line x1="876" y1="241.5" x2="1863" y2="241.5" stroke="#202020" stroke-opacity="0.3" stroke-width="1"/>
<line x1="876" y1="315.5" x2="1863" y2="315.5" stroke="#202020" stroke-opacity="0.3" stroke-width="1"/>
<line x1="876" y1="389.5" x2="1863" y2="389.5" stroke="#202020" stroke-opacity="0.3" stroke-width="1"/>
<line x1="876" y1="463.5" x2="1863" y2="463.5" stroke="#202020" stroke-opacity="0.3" stroke-width="1"/>
<line x1="876" y1="536.5" x2="1863" y2="536.5" stroke="#202020" stroke-opacity="0.3" stroke-width="1"/>
<line x1="876" y1="610.5" x2="1863" y2="610.5" stroke="#202020" stroke-opacity="0.3" stroke-width="1"/>
<line x1="876" y1="684.5" x2="1863" y2="684.5" stroke="#202020" stroke-opacity="0.3" stroke-width="1"/>
<line x1="876" y1="758.5" x2="1863" y2="758.5" stroke="#202020" stroke-opacity="0.3" stroke-width="1"/>
<line x1="876" y1="832.5" x2="1863" y2="832.5" stroke="#202020" stroke-opacity="0.3" stroke-width="1"/>
<line x1="876" y1="906.5" x2="1863" y2="906.5" stroke="#202020" stroke-opacity="0.3" stroke-width="1"/>
<rect x="896.8" y="161.0" width="3.1" height="793.0" fill="#8a8a26" fill-opacity="0.92"/>
<rect x="895.3" y="161.0" width="1.5" height="793.0" fill="#8f9a50" fill-opacity="0.5"/>
<rect x="1854.5" y="161.0" width="6.6" height="793.0" fill="url(#og)"/>
<path d="M876.8 161.4 V953.3 H1861.2 V161.4 Z" fill="none" stroke="#222" stroke-width="1.4"/>
<line x1="942.5" y1="953" x2="942.5" y2="944" stroke="#1a1a1a" stroke-width="1.6"/>
<line x1="1132.5" y1="953" x2="1132.5" y2="944" stroke="#1a1a1a" stroke-width="1.6"/>
<line x1="1321.5" y1="953" x2="1321.5" y2="944" stroke="#1a1a1a" stroke-width="1.6"/>
<line x1="1511.5" y1="953" x2="1511.5" y2="944" stroke="#1a1a1a" stroke-width="1.6"/>
<line x1="1700.5" y1="953" x2="1700.5" y2="944" stroke="#1a1a1a" stroke-width="1.6"/>
<line x1="876" y1="167.5" x2="886" y2="167.5" stroke="#1a1a1a" stroke-width="1.6"/>
<line x1="1861" y1="167.5" x2="1853" y2="167.5" stroke="#1a1a1a" stroke-width="1.6"/>
<line x1="876" y1="241.5" x2="886" y2="241.5" stroke="#1a1a1a" stroke-width="1.6"/>
<line x1="1861" y1="241.5" x2="1853" y2="241.5" stroke="#1a1a1a" stroke-width="1.6"/>
<line x1="876" y1="315.5" x2="886" y2="315.5" stroke="#1a1a1a" stroke-width="1.6"/>
<line x1="1861" y1="315.5" x2="1853" y2="315.5" stroke="#1a1a1a" stroke-width="1.6"/>
<line x1="876" y1="389.5" x2="886" y2="389.5" stroke="#1a1a1a" stroke-width="1.6"/>
<line x1="1861" y1="389.5" x2="1853" y2="389.5" stroke="#1a1a1a" stroke-width="1.6"/>
<line x1="876" y1="463.5" x2="886" y2="463.5" stroke="#1a1a1a" stroke-width="1.6"/>
<line x1="1861" y1="463.5" x2="1853" y2="463.5" stroke="#1a1a1a" stroke-width="1.6"/>
<line x1="876" y1="536.5" x2="886" y2="536.5" stroke="#1a1a1a" stroke-width="1.6"/>
<line x1="1861" y1="536.5" x2="1853" y2="536.5" stroke="#1a1a1a" stroke-width="1.6"/>
<line x1="876" y1="610.5" x2="886" y2="610.5" stroke="#1a1a1a" stroke-width="1.6"/>
<line x1="1861" y1="610.5" x2="1853" y2="610.5" stroke="#1a1a1a" stroke-width="1.6"/>
<line x1="876" y1="684.5" x2="886" y2="684.5" stroke="#1a1a1a" stroke-width="1.6"/>
<line x1="1861" y1="684.5" x2="1853" y2="684.5" stroke="#1a1a1a" stroke-width="1.6"/>
<line x1="876" y1="758.5" x2="886" y2="758.5" stroke="#1a1a1a" stroke-width="1.6"/>
<line x1="1861" y1="758.5" x2="1853" y2="758.5" stroke="#1a1a1a" stroke-width="1.6"/>
<line x1="876" y1="832.5" x2="886" y2="832.5" stroke="#1a1a1a" stroke-width="1.6"/>
<line x1="1861" y1="832.5" x2="1853" y2="832.5" stroke="#1a1a1a" stroke-width="1.6"/>
<line x1="876" y1="906.5" x2="886" y2="906.5" stroke="#1a1a1a" stroke-width="1.6"/>
<line x1="1861" y1="906.5" x2="1853" y2="906.5" stroke="#1a1a1a" stroke-width="1.6"/>
<!--MAPEND-->
</svg>

<!-- ticks -->
<div class="tick ytick" style="left:766px;top:154px">60</div>
<div class="tick ytick" style="left:766px;top:228px">40</div>
<div class="tick ytick" style="left:766px;top:302px">20</div>
<div class="tick ytick" style="left:766px;top:376px">0</div>
<div class="tick ytick" style="left:766px;top:450px">-20</div>
<div class="tick ytick" style="left:766px;top:524px">-40</div>
<div class="tick ytick" style="left:766px;top:598px">-60</div>
<div class="tick ytick" style="left:766px;top:672px">-80</div>
<div class="tick ytick" style="left:766px;top:745px">-100</div>
<div class="tick ytick" style="left:766px;top:819px">-120</div>
<div class="tick ytick" style="left:766px;top:893px">-140</div>
<div class="tick xtick" style="left:882px;top:968px">-150</div>
<div class="tick xtick" style="left:1072px;top:968px">-100</div>
<div class="tick xtick" style="left:1261px;top:968px">-50</div>
<div class="tick xtick" style="left:1451px;top:968px">0</div>
<div class="tick xtick" style="left:1640px;top:968px">50</div>
<div class="tick" style="left:1269px;top:1003px;width:200px;text-align:center;font-size:29.2px;line-height:34px">East [m]</div>
<div class="tick" style="left:687px;top:541px;width:200px;text-align:center;font-size:29.2px;line-height:34px;transform:rotate(-90deg) scaleY(1.05);transform-origin:50% 50%">North [m]</div>

<div class="btn" style="left:804px;top:1054px;width:205px;height:52px;line-height:50px"><span class="t">Load Default</span></div>
<div class="btn" style="left:1041px;top:1054px;width:112px;height:52px;line-height:50px"><span class="t">Clear</span></div>
<div class="btn" style="left:1185px;top:1054px;width:162px;height:52px;line-height:50px"><span class="t">Save</span></div>
<div class="btn" style="left:1379px;top:1054px;width:162px;height:52px;line-height:50px"><span class="t">Load</span></div>
<div class="btn" style="left:1575px;top:1054px;width:288px;height:52px;line-height:50px"><span class="t">Generate Trajectory</span></div>
</body>
</html>
